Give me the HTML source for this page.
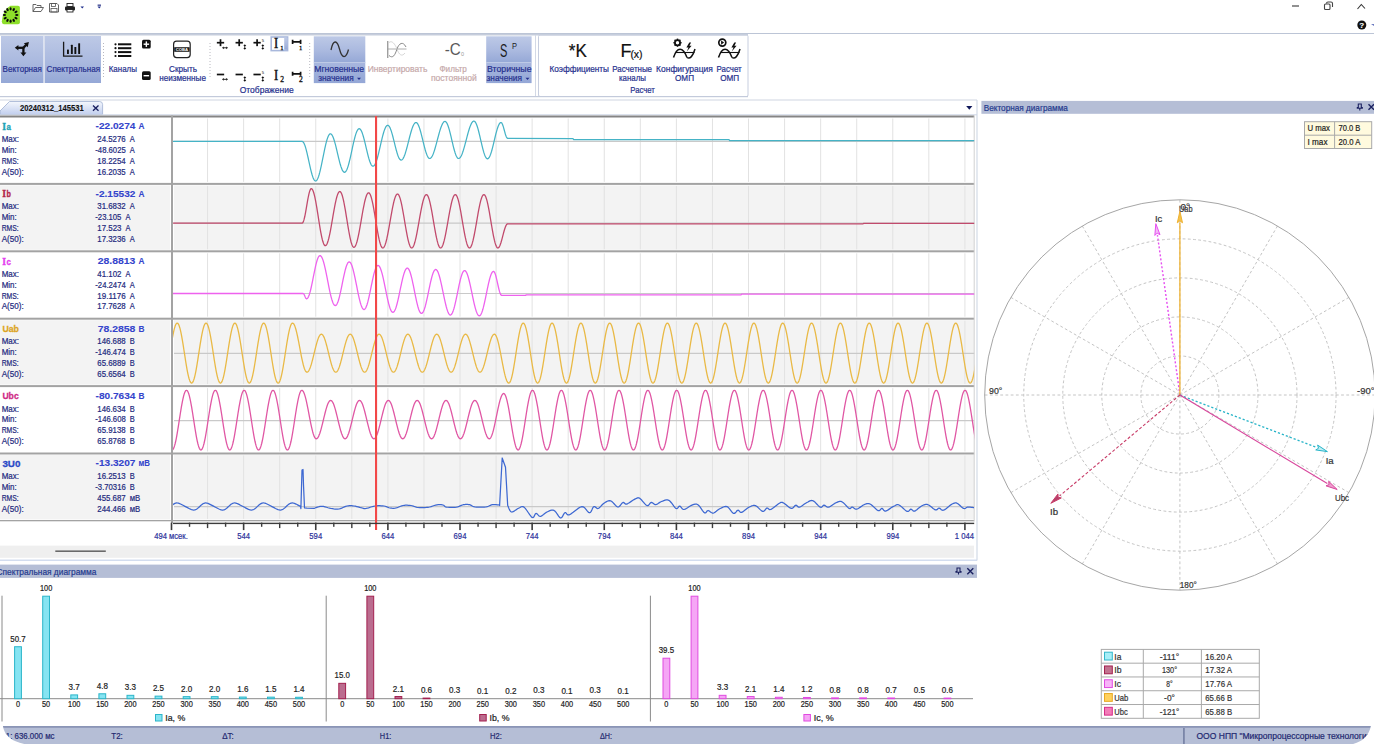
<!DOCTYPE html><html><head><meta charset="utf-8"><style>html,body{margin:0;padding:0;background:#fff;overflow:hidden;width:1374px;height:744px}svg{display:block;font-family:"Liberation Sans",sans-serif}</style></head><body><svg width="1374" height="744" viewBox="0 0 1374 744"><path d="M1.8,21.6 Q2.8,9.5 10.4,5.7 L18,5.7 Q19.9,5.7 19.9,7.6 L19.9,22.2 Q19.9,24.2 18,24.2 L3.8,24.2 Q1.8,24.2 1.8,21.6 Z" fill="#8edf2a"/>
<ellipse cx="16.80" cy="15.00" rx="1.05" ry="1.65" transform="rotate(90.0 16.80 15.00)" fill="#0a0a0a"/>
<ellipse cx="15.97" cy="18.10" rx="1.05" ry="1.65" transform="rotate(120.0 15.97 18.10)" fill="#0a0a0a"/>
<ellipse cx="13.70" cy="20.37" rx="1.05" ry="1.65" transform="rotate(150.0 13.70 20.37)" fill="#0a0a0a"/>
<ellipse cx="10.60" cy="21.20" rx="1.05" ry="1.65" transform="rotate(180.0 10.60 21.20)" fill="#0a0a0a"/>
<ellipse cx="7.50" cy="20.37" rx="1.05" ry="1.65" transform="rotate(210.0 7.50 20.37)" fill="#0a0a0a"/>
<ellipse cx="5.23" cy="18.10" rx="1.05" ry="1.65" transform="rotate(240.0 5.23 18.10)" fill="#0a0a0a"/>
<ellipse cx="4.40" cy="15.00" rx="1.05" ry="1.65" transform="rotate(270.0 4.40 15.00)" fill="#0a0a0a"/>
<ellipse cx="5.23" cy="11.90" rx="1.05" ry="1.65" transform="rotate(300.0 5.23 11.90)" fill="#0a0a0a"/>
<ellipse cx="7.50" cy="9.63" rx="1.05" ry="1.65" transform="rotate(330.0 7.50 9.63)" fill="#0a0a0a"/>
<ellipse cx="10.60" cy="8.80" rx="1.05" ry="1.65" transform="rotate(360.0 10.60 8.80)" fill="#0a0a0a"/>
<ellipse cx="13.70" cy="9.63" rx="1.05" ry="1.65" transform="rotate(390.0 13.70 9.63)" fill="#0a0a0a"/>
<ellipse cx="15.97" cy="11.90" rx="1.05" ry="1.65" transform="rotate(420.0 15.97 11.90)" fill="#0a0a0a"/>
<path d="M33,11.5 L33,4.5 L36,4.5 L37,5.5 L41,5.5 L41,7.5 M33,11.5 L35.5,7.5 L43.5,7.5 L41,11.5 Z" fill="none" stroke="#555" stroke-width="0.9"/>
<path d="M49.5,3.5 L57,3.5 L58.5,5 L58.5,12 L49.5,12 Z" fill="#fff" stroke="#555" stroke-width="0.9"/>
<rect x="51.5" y="3.5" width="4" height="3" fill="none" stroke="#555" stroke-width="0.8"/>
<rect x="51" y="8.5" width="6" height="3.5" fill="none" stroke="#555" stroke-width="0.8"/>
<rect x="67" y="3.5" width="6" height="3" fill="#fff" stroke="#222" stroke-width="0.9"/>
<rect x="65" y="6.5" width="10" height="4" rx="1" fill="#222"/>
<rect x="67" y="9.5" width="6" height="2.5" fill="#fff" stroke="#222" stroke-width="0.9"/>
<path d="M80.5,6.5 L84,6.5 L82.25,8.5 Z" fill="#1a2a8a"/>
<rect x="97.6" y="4.6" width="3.4" height="1.1" fill="#14207a"/>
<path d="M97.5,6.5 L101,6.5 L99.25,8.5 Z" fill="#1a2a8a"/>
<line x1="1292" y1="6" x2="1299" y2="6" stroke="#555" stroke-width="1.3" />
<rect x="1324.5" y="4" width="5.5" height="5.5" rx="1" fill="none" stroke="#444" stroke-width="1.1"/>
<path d="M1326.5,3.5 Q1326.5,2 1328,2 L1331,2 Q1332.5,2 1332.5,3.5 L1332.5,7" fill="none" stroke="#444" stroke-width="1.1"/>
<path d="M1357.5,9 L1361.3,4.5 L1365,8.5" fill="none" stroke="#333" stroke-width="1.1"/>
<circle cx="1361.8" cy="25" r="4.5" fill="#111"/>
<text x="1361.80" y="27.80" font-size="8.00" fill="#fff" stroke="#fff" stroke-width="0.1" font-weight="bold" text-anchor="middle">?</text>
<path d="M1371,24 L1374,24 L1374,26 Z" fill="#6a7ac0"/>
<defs><linearGradient id="hl" x1="0" y1="0" x2="0" y2="1"><stop offset="0" stop-color="#bdc9e6"/><stop offset="0.55" stop-color="#aab9df"/><stop offset="1" stop-color="#95a8d6"/></linearGradient><linearGradient id="hl2" x1="0" y1="0" x2="0" y2="1"><stop offset="0" stop-color="#a7b6de"/><stop offset="1" stop-color="#94a7d6"/></linearGradient><linearGradient id="tabg" x1="0" y1="0" x2="0" y2="1"><stop offset="0" stop-color="#f4f7fd"/><stop offset="1" stop-color="#c2cfee"/></linearGradient></defs>
<rect x="0" y="33" width="1374" height="1" fill="#bcc5d6" />
<rect x="0" y="34" width="748" height="1.5" fill="#c6cddc" />
<rect x="535" y="35" width="1" height="61.5" fill="#d3d9e6" />
<rect x="538.5" y="35" width="209.5" height="61.5" rx="1.5" fill="none" stroke="#c7cedf" stroke-width="1"/>
<rect x="0" y="96" width="748" height="1.2" fill="#c3cadb" />
<rect x="0" y="99.5" width="977" height="1" fill="#cfd5e2" />
<rect x="1" y="36" width="42.5" height="47" fill="url(#hl)" />
<rect x="45" y="36" width="56" height="47" fill="url(#hl)" />
<rect x="44" y="36" width="1" height="47" fill="#d8deed" />
<rect x="313.8" y="36.3" width="51.5" height="26.4" fill="url(#hl)" />
<rect x="313.8" y="62.7" width="51.5" height="20.4" fill="url(#hl2)" />
<rect x="313.8" y="62.2" width="51.5" height="0.8" fill="#c2cde8" />
<rect x="486.2" y="36.3" width="45.4" height="26.4" fill="url(#hl)" />
<rect x="486.2" y="62.7" width="45.4" height="20.4" fill="url(#hl2)" />
<rect x="486.2" y="62.2" width="45.4" height="0.8" fill="#c2cde8" />
<rect x="271.2" y="37.0" width="16.4" height="13.6" fill="#fff" stroke="#a9b8dc" stroke-width="1.6"/>
<rect x="284.2" y="37.8" width="3.4" height="12.0" fill="url(#hl)" />
<line x1="103.5" y1="43" x2="103.5" y2="77" stroke="#b8b8c0" stroke-width="1" stroke-dasharray="1,2"/>
<line x1="210" y1="43" x2="210" y2="77" stroke="#b8b8c0" stroke-width="1" stroke-dasharray="1,2"/>
<line x1="309.7" y1="43" x2="309.7" y2="77" stroke="#b8b8c0" stroke-width="1" stroke-dasharray="1,2"/>
<g stroke="#111" stroke-width="2.3" fill="none"><path d="M23.4,47.8 L17.2,47.8"/><path d="M23.4,47.8 L23.4,53"/><path d="M22.8,48.4 L26.3,44.7"/></g>
<path d="M14.8,47.8 L18.4,45.0 L18.4,50.6 Z" fill="#111"/>
<path d="M23.4,56.2 L20.4,52.4 L26.4,52.4 Z" fill="#111"/>
<path d="M28.9,42.1 L23.9,43.3 L27.7,47.3 Z" fill="#111"/>
<path d="M63.6,41.8 L63.6,56.2 L82.5,56.2" fill="none" stroke="#1a1a1a" stroke-width="1.3"/>
<rect x="67" y="49.5" width="1.9" height="4.4" rx="0.5" fill="#111"/>
<rect x="70.9" y="44.8" width="1.9" height="9.1" rx="0.5" fill="#111"/>
<rect x="74.4" y="46.9" width="1.9" height="7.0" rx="0.5" fill="#111"/>
<rect x="78.2" y="43.3" width="1.9" height="10.6" rx="0.5" fill="#111"/>
<circle cx="115.5" cy="44.30" r="1.1" fill="#111"/>
<rect x="118" y="43.3" width="13.3" height="2.0" fill="#111" />
<circle cx="115.5" cy="48.20" r="1.1" fill="#111"/>
<rect x="118" y="47.199999999999996" width="13.3" height="2.0" fill="#111" />
<circle cx="115.5" cy="52.10" r="1.1" fill="#111"/>
<rect x="118" y="51.099999999999994" width="13.3" height="2.0" fill="#111" />
<circle cx="115.5" cy="56.00" r="1.1" fill="#111"/>
<rect x="118" y="55.0" width="13.3" height="2.0" fill="#111" />
<rect x="142" y="39.8" width="8.7" height="8.7" rx="1.5" fill="#111"/>
<rect x="143.6" y="43.5" width="5.5" height="1.4" fill="#fff" />
<rect x="145.65" y="41.4" width="1.4" height="5.5" fill="#fff" />
<rect x="142" y="71.3" width="8.7" height="8.7" rx="1.5" fill="#111"/>
<rect x="143.6" y="75.0" width="5.5" height="1.4" fill="#fff" />
<rect x="173.6" y="41.2" width="16.6" height="16.4" rx="3" fill="#fff" stroke="#222" stroke-width="1.2"/>
<rect x="174.2" y="47.2" width="15.4" height="4.6" fill="#1a1a1a" />
<text x="181.90" y="51.20" font-size="4.20" fill="#fff" font-weight="bold" text-anchor="middle" textLength="12.50" lengthAdjust="spacingAndGlyphs">COBA</text>
<rect x="216.85" y="41.85" width="7.3" height="1.7" fill="#111" />
<rect x="219.65" y="39.25" width="1.7" height="6.9" fill="#111" />
<path d="M222,47.8 L223.8,46.4 L223.8,49.199999999999996 Z M228,47.8 L226.2,46.4 L226.2,49.199999999999996 Z" fill="#111"/>
<rect x="223.5" y="47.349999999999994" width="3" height="0.9" fill="#111" />
<rect x="235.54999999999998" y="41.85" width="7.3" height="1.7" fill="#111" />
<rect x="238.35" y="39.25" width="1.7" height="6.9" fill="#111" />
<path d="M244.8,44.2 L243.3,46.1 L246.3,46.1 Z M244.8,49.8 L243.3,47.9 L246.3,47.9 Z" fill="#111"/>
<rect x="244.35000000000002" y="45.8" width="0.9" height="2.4" fill="#111" />
<rect x="253.45000000000002" y="41.85" width="7.3" height="1.7" fill="#111" />
<rect x="256.25" y="39.25" width="1.7" height="6.9" fill="#111" />
<path d="M262.8,44.2 L261.3,46.1 L264.3,46.1 Z M262.8,49.8 L261.3,47.9 L264.3,47.9 Z" fill="#111"/>
<rect x="262.35" y="45.8" width="0.9" height="2.4" fill="#111" />
<text x="262.90" y="42.20" font-size="4.20" fill="#111" text-anchor="middle">5</text>
<rect x="216.85" y="73.65" width="7.3" height="1.7" fill="#111" />
<path d="M222,79.3 L223.8,77.89999999999999 L223.8,80.7 Z M228,79.3 L226.2,77.89999999999999 L226.2,80.7 Z" fill="#111"/>
<rect x="223.5" y="78.85" width="3" height="0.9" fill="#111" />
<rect x="235.54999999999998" y="73.65" width="7.3" height="1.7" fill="#111" />
<path d="M244.8,76.2 L243.3,78.1 L246.3,78.1 Z M244.8,81.8 L243.3,79.9 L246.3,79.9 Z" fill="#111"/>
<rect x="244.35000000000002" y="77.8" width="0.9" height="2.4" fill="#111" />
<rect x="253.45000000000002" y="73.65" width="7.3" height="1.7" fill="#111" />
<path d="M262.8,76.2 L261.3,78.1 L264.3,78.1 Z M262.8,81.8 L261.3,79.9 L264.3,79.9 Z" fill="#111"/>
<rect x="262.35" y="77.8" width="0.9" height="2.4" fill="#111" />
<text x="262.90" y="73.80" font-size="4.20" fill="#111" text-anchor="middle">5</text>
<text x="276.00" y="48.40" font-size="14.00" fill="#111" stroke="#111" stroke-width="0.45" text-anchor="middle" textLength="4.20" lengthAdjust="spacingAndGlyphs" font-family="Liberation Serif">I</text>
<text x="282.00" y="49.90" font-size="6.60" fill="#111" stroke="#111" stroke-width="0.3" text-anchor="middle" font-family="Liberation Serif">1</text>
<text x="276.00" y="80.00" font-size="14.00" fill="#111" stroke="#111" stroke-width="0.45" text-anchor="middle" textLength="4.20" lengthAdjust="spacingAndGlyphs" font-family="Liberation Serif">I</text>
<text x="282.10" y="81.70" font-size="7.60" fill="#111" stroke="#111" stroke-width="0.3" text-anchor="middle" font-family="Liberation Serif">2</text>
<path d="M292.6,39.8 L292.6,43.9 M292.6,41.8 L300.6,41.8 M300.6,39.8 L300.6,43.9" stroke="#111" stroke-width="1.7" fill="none"/>
<text x="300.60" y="49.70" font-size="6.60" fill="#111" stroke="#111" stroke-width="0.3" text-anchor="middle" font-family="Liberation Serif">1</text>
<path d="M292.6,71.8 L292.6,75.8 M292.6,73.8 L300.6,73.8 M300.6,71.8 L300.6,75.8" stroke="#111" stroke-width="1.7" fill="none"/>
<text x="300.80" y="81.70" font-size="7.60" fill="#111" stroke="#111" stroke-width="0.3" text-anchor="middle" font-family="Liberation Serif">2</text>
<path d="M331,50 C333,40 337,39 339.5,49 C342,59 346,59 348.5,49.5" fill="none" stroke="#333" stroke-width="1.3"/>
<path d="M387.8,41 L387.8,58" stroke="#777" stroke-width="1"/>
<path d="M387.8,49 L406.5,49" stroke="#999" stroke-width="0.8"/>
<path d="M389,55.5 C393,59 395,55 397,49 C399,43 403,41 406,47" fill="none" stroke="#888" stroke-width="1"/>
<path d="M389,42.5 C392,40 395,44 397,49 C399,55 402,57 405,53" fill="none" stroke="#ccc" stroke-width="0.8"/>
<text x="452.80" y="55.20" font-size="16.00" fill="#5a5a5a" text-anchor="middle" textLength="16.00" lengthAdjust="spacingAndGlyphs">-C</text>
<text x="462.50" y="56.20" font-size="5.50" fill="#999" text-anchor="middle">0</text>
<text x="503.60" y="57.20" font-size="17.50" fill="#1a1a1a" text-anchor="middle" textLength="7.40" lengthAdjust="spacingAndGlyphs">S</text>
<text x="514.60" y="49.30" font-size="8.30" fill="#1a1a1a" text-anchor="middle" textLength="5.00" lengthAdjust="spacingAndGlyphs">P</text>
<text x="577.80" y="57.20" font-size="18.50" fill="#111" stroke="#111" stroke-width="0.2" text-anchor="middle" textLength="18.00" lengthAdjust="spacingAndGlyphs">*K</text>
<text x="626.00" y="57.00" font-size="18.00" fill="#111" stroke="#111" stroke-width="0.2" text-anchor="middle">F</text>
<text x="636.50" y="57.50" font-size="10.50" fill="#111" stroke="#111" stroke-width="0.2" text-anchor="middle">(x)</text>
<circle cx="677.5" cy="42.7" r="2.6" fill="none" stroke="#111" stroke-width="1.8"/>
<line x1="679.90" y1="42.70" x2="681.60" y2="42.70" stroke="#111" stroke-width="1.5"/>
<line x1="679.20" y1="44.40" x2="680.40" y2="45.60" stroke="#111" stroke-width="1.5"/>
<line x1="677.50" y1="45.10" x2="677.50" y2="46.80" stroke="#111" stroke-width="1.5"/>
<line x1="675.80" y1="44.40" x2="674.60" y2="45.60" stroke="#111" stroke-width="1.5"/>
<line x1="675.10" y1="42.70" x2="673.40" y2="42.70" stroke="#111" stroke-width="1.5"/>
<line x1="675.80" y1="41.00" x2="674.60" y2="39.80" stroke="#111" stroke-width="1.5"/>
<line x1="677.50" y1="40.30" x2="677.50" y2="38.60" stroke="#111" stroke-width="1.5"/>
<line x1="679.20" y1="41.00" x2="680.40" y2="39.80" stroke="#111" stroke-width="1.5"/>
<path d="M673.5,57.5 C677.0,46.5 683.0,46.5 687.0,57.5" fill="none" stroke="#111" stroke-width="1.5"/>
<path d="M687.0,57.5 C690.0,59.5 693.0,56 695.0,49" fill="none" stroke="#111" stroke-width="1.5"/>
<line x1="675.0" y1="52.5" x2="694.5" y2="52.5" stroke="#111" stroke-width="1.1" />
<path d="M689.3,42.6 L686.4,47.6 L688.5,47.6 L686.8,51.5 L691.6,45.8 L689.4,45.8 L691.1,42.6 Z" fill="#111"/>
<circle cx="722.3" cy="42.6" r="3.5" fill="none" stroke="#111" stroke-width="1.7"/>
<path d="M721.1,40.4 L724.1,42.6 L721.1,44.8 Z" fill="#111"/>
<path d="M718.5,57.5 C722.0,46.5 728.0,46.5 732.0,57.5" fill="none" stroke="#111" stroke-width="1.5"/>
<path d="M732.0,57.5 C735.0,59.5 738.0,56 740.0,49" fill="none" stroke="#111" stroke-width="1.5"/>
<line x1="720.0" y1="52.5" x2="739.5" y2="52.5" stroke="#111" stroke-width="1.1" />
<path d="M734.3,42.6 L731.4,47.6 L733.5,47.6 L731.8,51.5 L736.6,45.8 L734.4,45.8 L736.1,42.6 Z" fill="#111"/>
<text x="2.60" y="71.80" font-size="8.55" fill="#26308e" stroke="#26308e" stroke-width="0.2" textLength="39.30" lengthAdjust="spacingAndGlyphs">Векторная</text>
<text x="46.60" y="71.80" font-size="8.55" fill="#26308e" stroke="#26308e" stroke-width="0.2" textLength="53.50" lengthAdjust="spacingAndGlyphs">Спектральная</text>
<text x="108.70" y="71.80" font-size="8.55" fill="#26308e" stroke="#26308e" stroke-width="0.2" textLength="28.30" lengthAdjust="spacingAndGlyphs">Каналы</text>
<text x="169.00" y="72.10" font-size="8.55" fill="#26308e" stroke="#26308e" stroke-width="0.2" textLength="28.00" lengthAdjust="spacingAndGlyphs">Скрыть</text>
<text x="159.20" y="81.30" font-size="8.55" fill="#26308e" stroke="#26308e" stroke-width="0.2" textLength="46.80" lengthAdjust="spacingAndGlyphs">неизменные</text>
<text x="239.70" y="93.20" font-size="8.55" fill="#26308e" stroke="#26308e" stroke-width="0.2" textLength="54.00" lengthAdjust="spacingAndGlyphs">Отображение</text>
<text x="314.20" y="71.80" font-size="8.55" fill="#26308e" stroke="#26308e" stroke-width="0.2" textLength="50.00" lengthAdjust="spacingAndGlyphs">Мгновенные</text>
<text x="318.20" y="81.30" font-size="8.55" fill="#26308e" stroke="#26308e" stroke-width="0.2" textLength="35.50" lengthAdjust="spacingAndGlyphs">значения</text>
<path d="M357,77.8 L361,77.8 L359,80 Z" fill="#26308e"/>
<text x="367.70" y="71.80" font-size="8.55" fill="#c6a9aa" stroke="#c6a9aa" stroke-width="0.2" textLength="59.60" lengthAdjust="spacingAndGlyphs">Инвертировать</text>
<text x="439.40" y="71.80" font-size="8.55" fill="#c6a9aa" stroke="#c6a9aa" stroke-width="0.2" textLength="27.40" lengthAdjust="spacingAndGlyphs">Фильтр</text>
<text x="430.90" y="81.30" font-size="8.55" fill="#c6a9aa" stroke="#c6a9aa" stroke-width="0.2" textLength="45.90" lengthAdjust="spacingAndGlyphs">постоянной</text>
<text x="487.00" y="71.80" font-size="8.55" fill="#26308e" stroke="#26308e" stroke-width="0.2" textLength="44.50" lengthAdjust="spacingAndGlyphs">Вторичные</text>
<text x="486.50" y="81.30" font-size="8.55" fill="#26308e" stroke="#26308e" stroke-width="0.2" textLength="35.50" lengthAdjust="spacingAndGlyphs">значения</text>
<path d="M525.5,77.8 L529.5,77.8 L527.5,80 Z" fill="#26308e"/>
<text x="549.40" y="71.80" font-size="8.55" fill="#26308e" stroke="#26308e" stroke-width="0.2" textLength="59.60" lengthAdjust="spacingAndGlyphs">Коэффициенты</text>
<text x="612.30" y="71.80" font-size="8.55" fill="#26308e" stroke="#26308e" stroke-width="0.2" textLength="39.70" lengthAdjust="spacingAndGlyphs">Расчетные</text>
<text x="619.00" y="81.30" font-size="8.55" fill="#26308e" stroke="#26308e" stroke-width="0.2" textLength="27.00" lengthAdjust="spacingAndGlyphs">каналы</text>
<text x="630.30" y="93.20" font-size="8.55" fill="#26308e" stroke="#26308e" stroke-width="0.2" textLength="24.60" lengthAdjust="spacingAndGlyphs">Расчет</text>
<text x="656.10" y="71.80" font-size="8.55" fill="#26308e" stroke="#26308e" stroke-width="0.2" textLength="56.70" lengthAdjust="spacingAndGlyphs">Конфигурация</text>
<text x="675.00" y="81.30" font-size="8.55" fill="#26308e" stroke="#26308e" stroke-width="0.2" textLength="19.00" lengthAdjust="spacingAndGlyphs">ОМП</text>
<text x="716.60" y="71.80" font-size="8.55" fill="#26308e" stroke="#26308e" stroke-width="0.2" textLength="25.10" lengthAdjust="spacingAndGlyphs">Расчет</text>
<text x="720.20" y="81.30" font-size="8.55" fill="#26308e" stroke="#26308e" stroke-width="0.2" textLength="19.00" lengthAdjust="spacingAndGlyphs">ОМП</text>
<path d="M0,114.5 L0,111 L9.5,101.5 L99.5,101.5 Q102.6,101.5 102.6,104.5 L102.6,114.5 Z" fill="url(#tabg)" stroke="#9fb0d0" stroke-width="0.8"/>
<text x="19.90" y="110.80" font-size="9.00" fill="#111" stroke="#111" stroke-width="0.1" font-weight="bold" textLength="63.80" lengthAdjust="spacingAndGlyphs">20240312_145531</text>
<path d="M93,105.5 L98.5,110.8 M98.5,105.5 L93,110.8" stroke="#1a2060" stroke-width="1.3"/>
<path d="M966.2,106 L972.4,106 L969.3,109.8 Z" fill="#10185a"/>
<rect x="976.5" y="100" width="1" height="460.5" fill="#cad3e2" />
<rect x="0" y="114.3" width="977" height="1" fill="#cdd6e6" />
<rect x="0" y="185.4" width="170" height="64.4" fill="#f3f3f3" />
<rect x="174" y="185.4" width="800.2" height="64.4" fill="#f3f3f3" />
<rect x="0" y="320.20000000000005" width="170" height="64.39999999999998" fill="#f3f3f3" />
<rect x="174" y="320.20000000000005" width="800.2" height="64.39999999999998" fill="#f3f3f3" />
<rect x="0" y="455.0" width="170" height="64.40000000000009" fill="#f3f3f3" />
<rect x="174" y="455.0" width="800.2" height="64.40000000000009" fill="#f3f3f3" />
<line x1="207.56" y1="118.5" x2="207.56" y2="181.9" stroke="#e2e2e2" stroke-width="1" />
<line x1="243.63" y1="118.5" x2="243.63" y2="181.9" stroke="#e2e2e2" stroke-width="1" />
<line x1="279.69" y1="118.5" x2="279.69" y2="181.9" stroke="#e2e2e2" stroke-width="1" />
<line x1="315.76" y1="118.5" x2="315.76" y2="181.9" stroke="#e2e2e2" stroke-width="1" />
<line x1="351.82" y1="118.5" x2="351.82" y2="181.9" stroke="#e2e2e2" stroke-width="1" />
<line x1="387.88" y1="118.5" x2="387.88" y2="181.9" stroke="#e2e2e2" stroke-width="1" />
<line x1="423.95" y1="118.5" x2="423.95" y2="181.9" stroke="#e2e2e2" stroke-width="1" />
<line x1="460.01" y1="118.5" x2="460.01" y2="181.9" stroke="#e2e2e2" stroke-width="1" />
<line x1="496.08" y1="118.5" x2="496.08" y2="181.9" stroke="#e2e2e2" stroke-width="1" />
<line x1="532.14" y1="118.5" x2="532.14" y2="181.9" stroke="#e2e2e2" stroke-width="1" />
<line x1="568.20" y1="118.5" x2="568.20" y2="181.9" stroke="#e2e2e2" stroke-width="1" />
<line x1="604.27" y1="118.5" x2="604.27" y2="181.9" stroke="#e2e2e2" stroke-width="1" />
<line x1="640.33" y1="118.5" x2="640.33" y2="181.9" stroke="#e2e2e2" stroke-width="1" />
<line x1="676.40" y1="118.5" x2="676.40" y2="181.9" stroke="#e2e2e2" stroke-width="1" />
<line x1="712.46" y1="118.5" x2="712.46" y2="181.9" stroke="#e2e2e2" stroke-width="1" />
<line x1="748.52" y1="118.5" x2="748.52" y2="181.9" stroke="#e2e2e2" stroke-width="1" />
<line x1="784.59" y1="118.5" x2="784.59" y2="181.9" stroke="#e2e2e2" stroke-width="1" />
<line x1="820.65" y1="118.5" x2="820.65" y2="181.9" stroke="#e2e2e2" stroke-width="1" />
<line x1="856.72" y1="118.5" x2="856.72" y2="181.9" stroke="#e2e2e2" stroke-width="1" />
<line x1="892.78" y1="118.5" x2="892.78" y2="181.9" stroke="#e2e2e2" stroke-width="1" />
<line x1="928.84" y1="118.5" x2="928.84" y2="181.9" stroke="#e2e2e2" stroke-width="1" />
<line x1="964.91" y1="118.5" x2="964.91" y2="181.9" stroke="#e2e2e2" stroke-width="1" />
<line x1="207.56" y1="185.9" x2="207.56" y2="249.3" stroke="#e2e2e2" stroke-width="1" />
<line x1="243.63" y1="185.9" x2="243.63" y2="249.3" stroke="#e2e2e2" stroke-width="1" />
<line x1="279.69" y1="185.9" x2="279.69" y2="249.3" stroke="#e2e2e2" stroke-width="1" />
<line x1="315.76" y1="185.9" x2="315.76" y2="249.3" stroke="#e2e2e2" stroke-width="1" />
<line x1="351.82" y1="185.9" x2="351.82" y2="249.3" stroke="#e2e2e2" stroke-width="1" />
<line x1="387.88" y1="185.9" x2="387.88" y2="249.3" stroke="#e2e2e2" stroke-width="1" />
<line x1="423.95" y1="185.9" x2="423.95" y2="249.3" stroke="#e2e2e2" stroke-width="1" />
<line x1="460.01" y1="185.9" x2="460.01" y2="249.3" stroke="#e2e2e2" stroke-width="1" />
<line x1="496.08" y1="185.9" x2="496.08" y2="249.3" stroke="#e2e2e2" stroke-width="1" />
<line x1="532.14" y1="185.9" x2="532.14" y2="249.3" stroke="#e2e2e2" stroke-width="1" />
<line x1="568.20" y1="185.9" x2="568.20" y2="249.3" stroke="#e2e2e2" stroke-width="1" />
<line x1="604.27" y1="185.9" x2="604.27" y2="249.3" stroke="#e2e2e2" stroke-width="1" />
<line x1="640.33" y1="185.9" x2="640.33" y2="249.3" stroke="#e2e2e2" stroke-width="1" />
<line x1="676.40" y1="185.9" x2="676.40" y2="249.3" stroke="#e2e2e2" stroke-width="1" />
<line x1="712.46" y1="185.9" x2="712.46" y2="249.3" stroke="#e2e2e2" stroke-width="1" />
<line x1="748.52" y1="185.9" x2="748.52" y2="249.3" stroke="#e2e2e2" stroke-width="1" />
<line x1="784.59" y1="185.9" x2="784.59" y2="249.3" stroke="#e2e2e2" stroke-width="1" />
<line x1="820.65" y1="185.9" x2="820.65" y2="249.3" stroke="#e2e2e2" stroke-width="1" />
<line x1="856.72" y1="185.9" x2="856.72" y2="249.3" stroke="#e2e2e2" stroke-width="1" />
<line x1="892.78" y1="185.9" x2="892.78" y2="249.3" stroke="#e2e2e2" stroke-width="1" />
<line x1="928.84" y1="185.9" x2="928.84" y2="249.3" stroke="#e2e2e2" stroke-width="1" />
<line x1="964.91" y1="185.9" x2="964.91" y2="249.3" stroke="#e2e2e2" stroke-width="1" />
<line x1="207.56" y1="253.3" x2="207.56" y2="316.70000000000005" stroke="#e2e2e2" stroke-width="1" />
<line x1="243.63" y1="253.3" x2="243.63" y2="316.70000000000005" stroke="#e2e2e2" stroke-width="1" />
<line x1="279.69" y1="253.3" x2="279.69" y2="316.70000000000005" stroke="#e2e2e2" stroke-width="1" />
<line x1="315.76" y1="253.3" x2="315.76" y2="316.70000000000005" stroke="#e2e2e2" stroke-width="1" />
<line x1="351.82" y1="253.3" x2="351.82" y2="316.70000000000005" stroke="#e2e2e2" stroke-width="1" />
<line x1="387.88" y1="253.3" x2="387.88" y2="316.70000000000005" stroke="#e2e2e2" stroke-width="1" />
<line x1="423.95" y1="253.3" x2="423.95" y2="316.70000000000005" stroke="#e2e2e2" stroke-width="1" />
<line x1="460.01" y1="253.3" x2="460.01" y2="316.70000000000005" stroke="#e2e2e2" stroke-width="1" />
<line x1="496.08" y1="253.3" x2="496.08" y2="316.70000000000005" stroke="#e2e2e2" stroke-width="1" />
<line x1="532.14" y1="253.3" x2="532.14" y2="316.70000000000005" stroke="#e2e2e2" stroke-width="1" />
<line x1="568.20" y1="253.3" x2="568.20" y2="316.70000000000005" stroke="#e2e2e2" stroke-width="1" />
<line x1="604.27" y1="253.3" x2="604.27" y2="316.70000000000005" stroke="#e2e2e2" stroke-width="1" />
<line x1="640.33" y1="253.3" x2="640.33" y2="316.70000000000005" stroke="#e2e2e2" stroke-width="1" />
<line x1="676.40" y1="253.3" x2="676.40" y2="316.70000000000005" stroke="#e2e2e2" stroke-width="1" />
<line x1="712.46" y1="253.3" x2="712.46" y2="316.70000000000005" stroke="#e2e2e2" stroke-width="1" />
<line x1="748.52" y1="253.3" x2="748.52" y2="316.70000000000005" stroke="#e2e2e2" stroke-width="1" />
<line x1="784.59" y1="253.3" x2="784.59" y2="316.70000000000005" stroke="#e2e2e2" stroke-width="1" />
<line x1="820.65" y1="253.3" x2="820.65" y2="316.70000000000005" stroke="#e2e2e2" stroke-width="1" />
<line x1="856.72" y1="253.3" x2="856.72" y2="316.70000000000005" stroke="#e2e2e2" stroke-width="1" />
<line x1="892.78" y1="253.3" x2="892.78" y2="316.70000000000005" stroke="#e2e2e2" stroke-width="1" />
<line x1="928.84" y1="253.3" x2="928.84" y2="316.70000000000005" stroke="#e2e2e2" stroke-width="1" />
<line x1="964.91" y1="253.3" x2="964.91" y2="316.70000000000005" stroke="#e2e2e2" stroke-width="1" />
<line x1="207.56" y1="320.70000000000005" x2="207.56" y2="384.1" stroke="#e2e2e2" stroke-width="1" />
<line x1="243.63" y1="320.70000000000005" x2="243.63" y2="384.1" stroke="#e2e2e2" stroke-width="1" />
<line x1="279.69" y1="320.70000000000005" x2="279.69" y2="384.1" stroke="#e2e2e2" stroke-width="1" />
<line x1="315.76" y1="320.70000000000005" x2="315.76" y2="384.1" stroke="#e2e2e2" stroke-width="1" />
<line x1="351.82" y1="320.70000000000005" x2="351.82" y2="384.1" stroke="#e2e2e2" stroke-width="1" />
<line x1="387.88" y1="320.70000000000005" x2="387.88" y2="384.1" stroke="#e2e2e2" stroke-width="1" />
<line x1="423.95" y1="320.70000000000005" x2="423.95" y2="384.1" stroke="#e2e2e2" stroke-width="1" />
<line x1="460.01" y1="320.70000000000005" x2="460.01" y2="384.1" stroke="#e2e2e2" stroke-width="1" />
<line x1="496.08" y1="320.70000000000005" x2="496.08" y2="384.1" stroke="#e2e2e2" stroke-width="1" />
<line x1="532.14" y1="320.70000000000005" x2="532.14" y2="384.1" stroke="#e2e2e2" stroke-width="1" />
<line x1="568.20" y1="320.70000000000005" x2="568.20" y2="384.1" stroke="#e2e2e2" stroke-width="1" />
<line x1="604.27" y1="320.70000000000005" x2="604.27" y2="384.1" stroke="#e2e2e2" stroke-width="1" />
<line x1="640.33" y1="320.70000000000005" x2="640.33" y2="384.1" stroke="#e2e2e2" stroke-width="1" />
<line x1="676.40" y1="320.70000000000005" x2="676.40" y2="384.1" stroke="#e2e2e2" stroke-width="1" />
<line x1="712.46" y1="320.70000000000005" x2="712.46" y2="384.1" stroke="#e2e2e2" stroke-width="1" />
<line x1="748.52" y1="320.70000000000005" x2="748.52" y2="384.1" stroke="#e2e2e2" stroke-width="1" />
<line x1="784.59" y1="320.70000000000005" x2="784.59" y2="384.1" stroke="#e2e2e2" stroke-width="1" />
<line x1="820.65" y1="320.70000000000005" x2="820.65" y2="384.1" stroke="#e2e2e2" stroke-width="1" />
<line x1="856.72" y1="320.70000000000005" x2="856.72" y2="384.1" stroke="#e2e2e2" stroke-width="1" />
<line x1="892.78" y1="320.70000000000005" x2="892.78" y2="384.1" stroke="#e2e2e2" stroke-width="1" />
<line x1="928.84" y1="320.70000000000005" x2="928.84" y2="384.1" stroke="#e2e2e2" stroke-width="1" />
<line x1="964.91" y1="320.70000000000005" x2="964.91" y2="384.1" stroke="#e2e2e2" stroke-width="1" />
<line x1="207.56" y1="388.1" x2="207.56" y2="451.5" stroke="#e2e2e2" stroke-width="1" />
<line x1="243.63" y1="388.1" x2="243.63" y2="451.5" stroke="#e2e2e2" stroke-width="1" />
<line x1="279.69" y1="388.1" x2="279.69" y2="451.5" stroke="#e2e2e2" stroke-width="1" />
<line x1="315.76" y1="388.1" x2="315.76" y2="451.5" stroke="#e2e2e2" stroke-width="1" />
<line x1="351.82" y1="388.1" x2="351.82" y2="451.5" stroke="#e2e2e2" stroke-width="1" />
<line x1="387.88" y1="388.1" x2="387.88" y2="451.5" stroke="#e2e2e2" stroke-width="1" />
<line x1="423.95" y1="388.1" x2="423.95" y2="451.5" stroke="#e2e2e2" stroke-width="1" />
<line x1="460.01" y1="388.1" x2="460.01" y2="451.5" stroke="#e2e2e2" stroke-width="1" />
<line x1="496.08" y1="388.1" x2="496.08" y2="451.5" stroke="#e2e2e2" stroke-width="1" />
<line x1="532.14" y1="388.1" x2="532.14" y2="451.5" stroke="#e2e2e2" stroke-width="1" />
<line x1="568.20" y1="388.1" x2="568.20" y2="451.5" stroke="#e2e2e2" stroke-width="1" />
<line x1="604.27" y1="388.1" x2="604.27" y2="451.5" stroke="#e2e2e2" stroke-width="1" />
<line x1="640.33" y1="388.1" x2="640.33" y2="451.5" stroke="#e2e2e2" stroke-width="1" />
<line x1="676.40" y1="388.1" x2="676.40" y2="451.5" stroke="#e2e2e2" stroke-width="1" />
<line x1="712.46" y1="388.1" x2="712.46" y2="451.5" stroke="#e2e2e2" stroke-width="1" />
<line x1="748.52" y1="388.1" x2="748.52" y2="451.5" stroke="#e2e2e2" stroke-width="1" />
<line x1="784.59" y1="388.1" x2="784.59" y2="451.5" stroke="#e2e2e2" stroke-width="1" />
<line x1="820.65" y1="388.1" x2="820.65" y2="451.5" stroke="#e2e2e2" stroke-width="1" />
<line x1="856.72" y1="388.1" x2="856.72" y2="451.5" stroke="#e2e2e2" stroke-width="1" />
<line x1="892.78" y1="388.1" x2="892.78" y2="451.5" stroke="#e2e2e2" stroke-width="1" />
<line x1="928.84" y1="388.1" x2="928.84" y2="451.5" stroke="#e2e2e2" stroke-width="1" />
<line x1="964.91" y1="388.1" x2="964.91" y2="451.5" stroke="#e2e2e2" stroke-width="1" />
<line x1="207.56" y1="455.5" x2="207.56" y2="518.9000000000001" stroke="#e2e2e2" stroke-width="1" />
<line x1="243.63" y1="455.5" x2="243.63" y2="518.9000000000001" stroke="#e2e2e2" stroke-width="1" />
<line x1="279.69" y1="455.5" x2="279.69" y2="518.9000000000001" stroke="#e2e2e2" stroke-width="1" />
<line x1="315.76" y1="455.5" x2="315.76" y2="518.9000000000001" stroke="#e2e2e2" stroke-width="1" />
<line x1="351.82" y1="455.5" x2="351.82" y2="518.9000000000001" stroke="#e2e2e2" stroke-width="1" />
<line x1="387.88" y1="455.5" x2="387.88" y2="518.9000000000001" stroke="#e2e2e2" stroke-width="1" />
<line x1="423.95" y1="455.5" x2="423.95" y2="518.9000000000001" stroke="#e2e2e2" stroke-width="1" />
<line x1="460.01" y1="455.5" x2="460.01" y2="518.9000000000001" stroke="#e2e2e2" stroke-width="1" />
<line x1="496.08" y1="455.5" x2="496.08" y2="518.9000000000001" stroke="#e2e2e2" stroke-width="1" />
<line x1="532.14" y1="455.5" x2="532.14" y2="518.9000000000001" stroke="#e2e2e2" stroke-width="1" />
<line x1="568.20" y1="455.5" x2="568.20" y2="518.9000000000001" stroke="#e2e2e2" stroke-width="1" />
<line x1="604.27" y1="455.5" x2="604.27" y2="518.9000000000001" stroke="#e2e2e2" stroke-width="1" />
<line x1="640.33" y1="455.5" x2="640.33" y2="518.9000000000001" stroke="#e2e2e2" stroke-width="1" />
<line x1="676.40" y1="455.5" x2="676.40" y2="518.9000000000001" stroke="#e2e2e2" stroke-width="1" />
<line x1="712.46" y1="455.5" x2="712.46" y2="518.9000000000001" stroke="#e2e2e2" stroke-width="1" />
<line x1="748.52" y1="455.5" x2="748.52" y2="518.9000000000001" stroke="#e2e2e2" stroke-width="1" />
<line x1="784.59" y1="455.5" x2="784.59" y2="518.9000000000001" stroke="#e2e2e2" stroke-width="1" />
<line x1="820.65" y1="455.5" x2="820.65" y2="518.9000000000001" stroke="#e2e2e2" stroke-width="1" />
<line x1="856.72" y1="455.5" x2="856.72" y2="518.9000000000001" stroke="#e2e2e2" stroke-width="1" />
<line x1="892.78" y1="455.5" x2="892.78" y2="518.9000000000001" stroke="#e2e2e2" stroke-width="1" />
<line x1="928.84" y1="455.5" x2="928.84" y2="518.9000000000001" stroke="#e2e2e2" stroke-width="1" />
<line x1="964.91" y1="455.5" x2="964.91" y2="518.9000000000001" stroke="#e2e2e2" stroke-width="1" />
<line x1="174" y1="141.4" x2="974.2" y2="141.4" stroke="#c9c9c9" stroke-width="1.2" />
<line x1="174" y1="223.2" x2="974.2" y2="223.2" stroke="#c9c9c9" stroke-width="1.2" />
<line x1="174" y1="293.5" x2="974.2" y2="293.5" stroke="#c9c9c9" stroke-width="1.2" />
<line x1="174" y1="353.4" x2="974.2" y2="353.4" stroke="#c9c9c9" stroke-width="1.2" />
<line x1="174" y1="420.6" x2="974.2" y2="420.6" stroke="#c9c9c9" stroke-width="1.2" />
<line x1="174" y1="506.6" x2="974.2" y2="506.6" stroke="#c9c9c9" stroke-width="1.2" />
<rect x="0" y="115.5" width="974.2" height="2" fill="#858585" />
<rect x="0" y="182.9" width="974.2" height="2" fill="#a3a3a3" />
<rect x="0" y="250.3" width="974.2" height="2" fill="#a3a3a3" />
<rect x="0" y="317.70000000000005" width="974.2" height="2" fill="#a3a3a3" />
<rect x="0" y="385.1" width="974.2" height="2" fill="#a3a3a3" />
<rect x="0" y="452.5" width="974.2" height="2" fill="#a3a3a3" />
<rect x="0" y="520" width="974.2" height="1.3" fill="#a3a3a3" />
<rect x="171" y="115.5" width="2" height="406" fill="#a3a3a3" />
<rect x="973.7" y="115.5" width="1" height="406" fill="#d2d2d2" />
<clipPath id="pc"><rect x="173" y="116" width="801.2" height="406"/></clipPath>
<g clip-path="url(#pc)">
<polyline points="172.00,141.40 172.50,141.40 173.00,141.40 173.50,141.40 174.00,141.40 174.50,141.40 175.00,141.40 175.50,141.40 176.00,141.40 176.50,141.40 177.00,141.40 177.50,141.40 178.00,141.40 178.50,141.40 179.01,141.40 179.51,141.40 180.01,141.40 180.51,141.40 181.01,141.40 181.51,141.40 182.01,141.40 182.51,141.40 183.01,141.40 183.51,141.40 184.01,141.40 184.51,141.40 185.01,141.40 185.51,141.40 186.01,141.40 186.51,141.40 187.01,141.40 187.51,141.40 188.01,141.40 188.51,141.40 189.01,141.40 189.51,141.40 190.01,141.40 190.51,141.40 191.01,141.40 191.52,141.40 192.02,141.40 192.52,141.40 193.02,141.40 193.52,141.40 194.02,141.40 194.52,141.40 195.02,141.40 195.52,141.40 196.02,141.40 196.52,141.40 197.02,141.40 197.52,141.40 198.02,141.40 198.52,141.40 199.02,141.40 199.52,141.40 200.02,141.40 200.52,141.40 201.02,141.40 201.52,141.40 202.02,141.40 202.52,141.40 203.02,141.40 203.52,141.40 204.02,141.40 204.53,141.40 205.03,141.40 205.53,141.40 206.03,141.40 206.53,141.40 207.03,141.40 207.53,141.40 208.03,141.40 208.53,141.40 209.03,141.40 209.53,141.40 210.03,141.40 210.53,141.40 211.03,141.40 211.53,141.40 212.03,141.40 212.53,141.40 213.03,141.40 213.53,141.40 214.03,141.40 214.53,141.40 215.03,141.40 215.53,141.40 216.03,141.40 216.53,141.40 217.03,141.40 217.53,141.40 218.04,141.40 218.54,141.40 219.04,141.40 219.54,141.40 220.04,141.40 220.54,141.40 221.04,141.40 221.54,141.40 222.04,141.40 222.54,141.40 223.04,141.40 223.54,141.40 224.04,141.40 224.54,141.40 225.04,141.40 225.54,141.40 226.04,141.40 226.54,141.40 227.04,141.40 227.54,141.40 228.04,141.40 228.54,141.40 229.04,141.40 229.54,141.40 230.04,141.40 230.55,141.40 231.05,141.40 231.55,141.40 232.05,141.40 232.55,141.40 233.05,141.40 233.55,141.40 234.05,141.40 234.55,141.40 235.05,141.40 235.55,141.40 236.05,141.40 236.55,141.40 237.05,141.40 237.55,141.40 238.05,141.40 238.55,141.40 239.05,141.40 239.55,141.40 240.05,141.40 240.55,141.40 241.05,141.40 241.55,141.40 242.05,141.40 242.55,141.40 243.05,141.40 243.56,141.40 244.06,141.40 244.56,141.40 245.06,141.40 245.56,141.40 246.06,141.40 246.56,141.40 247.06,141.40 247.56,141.40 248.06,141.40 248.56,141.40 249.06,141.40 249.56,141.40 250.06,141.40 250.56,141.40 251.06,141.40 251.56,141.40 252.06,141.40 252.56,141.40 253.06,141.40 253.56,141.40 254.06,141.40 254.56,141.40 255.06,141.40 255.56,141.40 256.06,141.40 256.56,141.40 257.07,141.40 257.57,141.40 258.07,141.40 258.57,141.40 259.07,141.40 259.57,141.40 260.07,141.40 260.57,141.40 261.07,141.40 261.57,141.40 262.07,141.40 262.57,141.40 263.07,141.40 263.57,141.40 264.07,141.40 264.57,141.40 265.07,141.40 265.57,141.40 266.07,141.40 266.57,141.40 267.07,141.40 267.57,141.40 268.07,141.40 268.57,141.40 269.07,141.40 269.58,141.40 270.08,141.40 270.58,141.40 271.08,141.40 271.58,141.40 272.08,141.40 272.58,141.40 273.08,141.40 273.58,141.40 274.08,141.40 274.58,141.40 275.08,141.40 275.58,141.40 276.08,141.40 276.58,141.40 277.08,141.40 277.58,141.40 278.08,141.40 278.58,141.40 279.08,141.40 279.58,141.40 280.08,141.40 280.58,141.40 281.08,141.40 281.58,141.40 282.08,141.40 282.59,141.40 283.09,141.40 283.59,141.40 284.09,141.40 284.59,141.40 285.09,141.40 285.59,141.40 286.09,141.40 286.59,141.40 287.09,141.40 287.59,141.40 288.09,141.40 288.59,141.40 289.09,141.40 289.59,141.40 290.09,141.40 290.59,141.40 291.09,141.40 291.59,141.40 292.09,141.40 292.59,141.40 293.09,141.40 293.59,141.40 294.09,141.40 294.59,141.40 295.09,141.40 295.60,141.40 296.10,141.40 296.60,141.40 297.10,141.40 297.60,141.40 298.10,141.40 298.60,141.40 299.10,141.40 299.60,141.40 300.10,141.40 300.60,141.40 301.10,141.40 301.60,141.40 302.10,141.40 302.60,141.53 303.10,141.93 303.60,142.59 304.10,143.51 304.60,144.66 305.10,146.03 305.60,147.61 306.10,149.38 306.60,151.30 307.10,153.36 307.60,155.52 308.10,157.76 308.60,160.05 309.10,162.35 309.60,164.64 310.10,166.88 310.60,169.04 311.10,171.10 311.60,173.02 312.10,174.79 312.60,176.37 313.10,177.74 313.60,178.89 314.10,179.81 314.60,180.47 315.10,180.87 315.60,181.00 316.11,180.86 316.62,180.45 317.13,179.76 317.64,178.82 318.15,177.62 318.66,176.19 319.17,174.53 319.68,172.68 320.19,170.64 320.70,168.45 321.21,166.14 321.72,163.71 322.23,161.22 322.74,158.68 323.26,156.12 323.77,153.58 324.28,151.09 324.79,148.66 325.30,146.35 325.81,144.16 326.32,142.12 326.83,140.27 327.34,138.61 327.85,137.18 328.36,135.98 328.87,135.04 329.38,134.35 329.89,133.94 330.40,133.80 330.90,133.92 331.41,134.28 331.91,134.88 332.41,135.71 332.92,136.75 333.42,138.00 333.92,139.44 334.43,141.05 334.93,142.81 335.44,144.70 335.94,146.69 336.44,148.77 336.95,150.89 337.45,153.05 337.95,155.21 338.46,157.33 338.96,159.41 339.46,161.40 339.97,163.29 340.47,165.05 340.98,166.66 341.48,168.10 341.98,169.35 342.49,170.39 342.99,171.22 343.49,171.82 344.00,172.18 344.50,172.30 345.01,172.17 345.51,171.79 346.02,171.16 346.53,170.29 347.03,169.18 347.54,167.85 348.05,166.33 348.56,164.61 349.06,162.73 349.57,160.71 350.08,158.57 350.58,156.33 351.09,154.03 351.60,151.68 352.10,149.32 352.61,146.97 353.12,144.67 353.62,142.43 354.13,140.29 354.64,138.27 355.14,136.39 355.65,134.67 356.16,133.15 356.67,131.82 357.17,130.71 357.68,129.84 358.19,129.21 358.69,128.83 359.20,128.70 359.71,128.83 360.22,129.21 360.73,129.83 361.24,130.69 361.76,131.78 362.27,133.09 362.78,134.58 363.29,136.25 363.80,138.07 364.31,140.02 364.82,142.07 365.33,144.19 365.84,146.36 366.36,148.54 366.87,150.71 367.38,152.83 367.89,154.88 368.40,156.82 368.91,158.65 369.42,160.32 369.93,161.81 370.44,163.12 370.96,164.21 371.47,165.07 371.98,165.69 372.49,166.07 373.00,166.20 373.51,166.08 374.01,165.72 374.52,165.13 375.03,164.31 375.53,163.27 376.04,162.03 376.55,160.60 377.06,158.99 377.56,157.23 378.07,155.33 378.58,153.32 379.08,151.22 379.59,149.06 380.10,146.86 380.60,144.64 381.11,142.44 381.62,140.28 382.12,138.18 382.63,136.17 383.14,134.27 383.64,132.51 384.15,130.90 384.66,129.47 385.17,128.23 385.67,127.19 386.18,126.37 386.69,125.78 387.19,125.42 387.70,125.30 388.22,125.43 388.73,125.81 389.25,126.43 389.76,127.29 390.28,128.38 390.79,129.68 391.31,131.16 391.82,132.82 392.34,134.61 392.85,136.53 393.37,138.54 393.88,140.60 394.40,142.70 394.92,144.80 395.43,146.86 395.95,148.87 396.46,150.79 396.98,152.58 397.49,154.24 398.01,155.72 398.52,157.02 399.04,158.11 399.55,158.97 400.07,159.59 400.58,159.97 401.10,160.10 401.61,159.99 402.13,159.66 402.64,159.12 403.16,158.36 403.67,157.41 404.18,156.27 404.70,154.95 405.21,153.47 405.72,151.85 406.24,150.11 406.75,148.26 407.27,146.33 407.78,144.34 408.29,142.32 408.81,140.28 409.32,138.26 409.83,136.27 410.35,134.34 410.86,132.49 411.38,130.75 411.89,129.13 412.40,127.65 412.92,126.33 413.43,125.19 413.94,124.24 414.46,123.48 414.97,122.94 415.49,122.61 416.00,122.50 416.51,122.62 417.01,122.99 417.52,123.59 418.03,124.41 418.54,125.46 419.04,126.71 419.55,128.15 420.06,129.75 420.57,131.50 421.07,133.37 421.58,135.34 422.09,137.37 422.60,139.45 423.10,141.55 423.61,143.63 424.12,145.66 424.63,147.63 425.13,149.50 425.64,151.25 426.15,152.85 426.66,154.29 427.16,155.54 427.67,156.59 428.18,157.41 428.69,158.01 429.19,158.38 429.70,158.50 430.21,158.40 430.72,158.09 431.23,157.59 431.74,156.90 432.25,156.01 432.76,154.96 433.27,153.74 433.78,152.36 434.29,150.85 434.80,149.22 435.31,147.49 435.82,145.68 436.33,143.81 436.84,141.89 437.35,139.95 437.86,138.01 438.37,136.09 438.88,134.22 439.39,132.41 439.90,130.68 440.41,129.05 440.92,127.54 441.43,126.16 441.94,124.94 442.45,123.89 442.96,123.00 443.47,122.31 443.98,121.81 444.49,121.50 445.00,121.40 445.50,121.53 446.01,121.90 446.51,122.52 447.01,123.37 447.52,124.45 448.02,125.74 448.53,127.22 449.03,128.87 449.53,130.68 450.04,132.60 450.54,134.63 451.04,136.73 451.55,138.87 452.05,141.03 452.56,143.17 453.06,145.27 453.56,147.30 454.07,149.22 454.57,151.03 455.07,152.68 455.58,154.16 456.08,155.45 456.59,156.53 457.09,157.38 457.59,158.00 458.10,158.37 458.60,158.50 459.11,158.40 459.62,158.09 460.13,157.58 460.64,156.88 461.15,155.99 461.66,154.93 462.17,153.70 462.68,152.31 463.19,150.79 463.70,149.15 464.21,147.41 464.72,145.58 465.23,143.69 465.74,141.75 466.25,139.80 466.76,137.85 467.27,135.91 467.78,134.02 468.29,132.19 468.80,130.45 469.31,128.81 469.82,127.29 470.33,125.90 470.84,124.67 471.35,123.61 471.86,122.72 472.37,122.02 472.88,121.51 473.39,121.20 473.90,121.10 474.40,121.23 474.91,121.61 475.41,122.24 475.91,123.11 476.42,124.20 476.92,125.51 477.43,127.01 477.93,128.69 478.43,130.53 478.94,132.48 479.44,134.54 479.94,136.68 480.45,138.85 480.95,141.05 481.46,143.22 481.96,145.36 482.46,147.42 482.97,149.38 483.47,151.21 483.97,152.89 484.48,154.39 484.98,155.70 485.49,156.79 485.99,157.66 486.49,158.29 487.00,158.67 487.50,158.80 488.00,158.68 488.50,158.31 489.00,157.71 489.50,156.87 490.00,155.81 490.50,154.55 491.00,153.11 491.50,151.49 492.00,149.73 492.50,147.84 493.00,145.86 493.50,143.80 494.00,141.71 494.50,139.59 495.00,137.50 495.50,135.44 496.00,133.46 496.50,131.58 497.00,129.81 497.50,128.19 498.00,126.75 498.50,125.49 499.00,124.43 499.50,123.59 500.00,122.99 500.50,122.62 501.00,122.50 501.52,122.73 502.03,123.41 502.55,124.50 503.06,125.93 503.58,127.63 504.09,129.49 504.61,131.41 505.12,133.27 505.64,134.97 506.15,136.40 506.67,137.49 507.18,138.17 507.70,138.40 573.00,138.50 573.50,139.50 729.00,139.50 729.50,140.50 975.00,140.50" fill="none" stroke="#45b3c6" stroke-width="1.25" stroke-linejoin="round" />
<polyline points="172.00,223.20 172.50,223.20 173.00,223.20 173.50,223.20 174.00,223.20 174.50,223.20 175.00,223.20 175.50,223.20 176.00,223.20 176.50,223.20 177.00,223.20 177.50,223.20 178.00,223.20 178.50,223.20 179.01,223.20 179.51,223.20 180.01,223.20 180.51,223.20 181.01,223.20 181.51,223.20 182.01,223.20 182.51,223.20 183.01,223.20 183.51,223.20 184.01,223.20 184.51,223.20 185.01,223.20 185.51,223.20 186.01,223.20 186.51,223.20 187.01,223.20 187.51,223.20 188.01,223.20 188.51,223.20 189.01,223.20 189.51,223.20 190.01,223.20 190.51,223.20 191.01,223.20 191.52,223.20 192.02,223.20 192.52,223.20 193.02,223.20 193.52,223.20 194.02,223.20 194.52,223.20 195.02,223.20 195.52,223.20 196.02,223.20 196.52,223.20 197.02,223.20 197.52,223.20 198.02,223.20 198.52,223.20 199.02,223.20 199.52,223.20 200.02,223.20 200.52,223.20 201.02,223.20 201.52,223.20 202.02,223.20 202.52,223.20 203.02,223.20 203.52,223.20 204.02,223.20 204.53,223.20 205.03,223.20 205.53,223.20 206.03,223.20 206.53,223.20 207.03,223.20 207.53,223.20 208.03,223.20 208.53,223.20 209.03,223.20 209.53,223.20 210.03,223.20 210.53,223.20 211.03,223.20 211.53,223.20 212.03,223.20 212.53,223.20 213.03,223.20 213.53,223.20 214.03,223.20 214.53,223.20 215.03,223.20 215.53,223.20 216.03,223.20 216.53,223.20 217.03,223.20 217.53,223.20 218.04,223.20 218.54,223.20 219.04,223.20 219.54,223.20 220.04,223.20 220.54,223.20 221.04,223.20 221.54,223.20 222.04,223.20 222.54,223.20 223.04,223.20 223.54,223.20 224.04,223.20 224.54,223.20 225.04,223.20 225.54,223.20 226.04,223.20 226.54,223.20 227.04,223.20 227.54,223.20 228.04,223.20 228.54,223.20 229.04,223.20 229.54,223.20 230.04,223.20 230.55,223.20 231.05,223.20 231.55,223.20 232.05,223.20 232.55,223.20 233.05,223.20 233.55,223.20 234.05,223.20 234.55,223.20 235.05,223.20 235.55,223.20 236.05,223.20 236.55,223.20 237.05,223.20 237.55,223.20 238.05,223.20 238.55,223.20 239.05,223.20 239.55,223.20 240.05,223.20 240.55,223.20 241.05,223.20 241.55,223.20 242.05,223.20 242.55,223.20 243.05,223.20 243.56,223.20 244.06,223.20 244.56,223.20 245.06,223.20 245.56,223.20 246.06,223.20 246.56,223.20 247.06,223.20 247.56,223.20 248.06,223.20 248.56,223.20 249.06,223.20 249.56,223.20 250.06,223.20 250.56,223.20 251.06,223.20 251.56,223.20 252.06,223.20 252.56,223.20 253.06,223.20 253.56,223.20 254.06,223.20 254.56,223.20 255.06,223.20 255.56,223.20 256.06,223.20 256.56,223.20 257.07,223.20 257.57,223.20 258.07,223.20 258.57,223.20 259.07,223.20 259.57,223.20 260.07,223.20 260.57,223.20 261.07,223.20 261.57,223.20 262.07,223.20 262.57,223.20 263.07,223.20 263.57,223.20 264.07,223.20 264.57,223.20 265.07,223.20 265.57,223.20 266.07,223.20 266.57,223.20 267.07,223.20 267.57,223.20 268.07,223.20 268.57,223.20 269.07,223.20 269.58,223.20 270.08,223.20 270.58,223.20 271.08,223.20 271.58,223.20 272.08,223.20 272.58,223.20 273.08,223.20 273.58,223.20 274.08,223.20 274.58,223.20 275.08,223.20 275.58,223.20 276.08,223.20 276.58,223.20 277.08,223.20 277.58,223.20 278.08,223.20 278.58,223.20 279.08,223.20 279.58,223.20 280.08,223.20 280.58,223.20 281.08,223.20 281.58,223.20 282.08,223.20 282.59,223.20 283.09,223.20 283.59,223.20 284.09,223.20 284.59,223.20 285.09,223.20 285.59,223.20 286.09,223.20 286.59,223.20 287.09,223.20 287.59,223.20 288.09,223.20 288.59,223.20 289.09,223.20 289.59,223.20 290.09,223.20 290.59,223.20 291.09,223.20 291.59,223.20 292.09,223.20 292.59,223.20 293.09,223.20 293.59,223.20 294.09,223.20 294.59,223.20 295.09,223.20 295.60,223.20 296.10,223.20 296.60,223.20 297.10,223.20 297.60,223.20 298.10,223.20 298.60,223.20 299.10,223.20 299.60,223.20 300.10,223.20 300.60,223.20 301.10,223.20 301.60,223.20 302.10,223.20 302.61,222.94 303.12,222.16 303.63,220.88 304.14,219.15 304.66,217.02 305.17,214.55 305.68,211.82 306.19,208.90 306.70,205.90 307.21,202.90 307.72,199.98 308.23,197.25 308.74,194.78 309.26,192.65 309.77,190.92 310.28,189.64 310.79,188.86 311.30,188.60 311.80,188.78 312.30,189.32 312.80,190.20 313.30,191.43 313.80,192.98 314.30,194.83 314.80,196.96 315.30,199.35 315.80,201.96 316.30,204.76 316.80,207.72 317.30,210.80 317.80,213.95 318.30,217.15 318.80,220.35 319.30,223.50 319.80,226.58 320.30,229.54 320.80,232.34 321.30,234.95 321.80,237.34 322.30,239.47 322.80,241.32 323.30,242.87 323.80,244.10 324.30,244.98 324.80,245.52 325.30,245.70 325.80,245.54 326.30,245.07 326.80,244.28 327.30,243.20 327.80,241.82 328.30,240.17 328.80,238.27 329.30,236.14 329.80,233.81 330.30,231.29 330.80,228.63 331.30,225.85 331.80,222.98 332.30,220.07 332.80,217.13 333.30,214.22 333.80,211.35 334.30,208.57 334.80,205.91 335.30,203.39 335.80,201.06 336.30,198.93 336.80,197.03 337.30,195.38 337.80,194.00 338.30,192.92 338.80,192.13 339.30,191.66 339.80,191.50 340.30,191.68 340.81,192.20 341.31,193.07 341.81,194.26 342.32,195.78 342.82,197.59 343.32,199.67 343.83,202.00 344.33,204.56 344.84,207.29 345.34,210.19 345.84,213.19 346.35,216.28 346.85,219.40 347.35,222.52 347.86,225.61 348.36,228.61 348.86,231.51 349.37,234.24 349.87,236.80 350.38,239.13 350.88,241.21 351.38,243.02 351.89,244.54 352.39,245.73 352.89,246.60 353.40,247.12 353.90,247.30 354.41,247.14 354.91,246.66 355.42,245.87 355.93,244.78 356.43,243.40 356.94,241.74 357.45,239.83 357.96,237.69 358.46,235.34 358.97,232.81 359.48,230.14 359.98,227.34 360.49,224.46 361.00,221.53 361.50,218.57 362.01,215.64 362.52,212.76 363.02,209.96 363.53,207.29 364.04,204.76 364.54,202.41 365.05,200.27 365.56,198.36 366.07,196.70 366.57,195.32 367.08,194.23 367.59,193.44 368.09,192.96 368.60,192.80 369.11,192.97 369.61,193.49 370.12,194.35 370.63,195.53 371.14,197.03 371.64,198.82 372.15,200.88 372.66,203.19 373.16,205.72 373.67,208.42 374.18,211.28 374.69,214.26 375.19,217.31 375.70,220.40 376.21,223.49 376.71,226.54 377.22,229.52 377.73,232.38 378.24,235.08 378.74,237.61 379.25,239.92 379.76,241.98 380.26,243.77 380.77,245.27 381.28,246.45 381.79,247.31 382.29,247.83 382.80,248.00 383.31,247.84 383.81,247.37 384.32,246.59 384.83,245.50 385.33,244.14 385.84,242.49 386.35,240.60 386.86,238.48 387.36,236.15 387.87,233.65 388.38,230.99 388.88,228.22 389.39,225.37 389.90,222.46 390.40,219.54 390.91,216.63 391.42,213.78 391.92,211.01 392.43,208.35 392.94,205.85 393.44,203.52 393.95,201.40 394.46,199.51 394.97,197.86 395.47,196.50 395.98,195.41 396.49,194.63 396.99,194.16 397.50,194.00 398.01,194.17 398.51,194.68 399.02,195.52 399.53,196.67 400.04,198.14 400.54,199.89 401.05,201.91 401.56,204.17 402.06,206.64 402.57,209.29 403.08,212.08 403.59,214.99 404.09,217.98 404.60,221.00 405.11,224.02 405.61,227.01 406.12,229.92 406.63,232.71 407.14,235.36 407.64,237.83 408.15,240.09 408.66,242.11 409.16,243.86 409.67,245.33 410.18,246.48 410.69,247.32 411.19,247.83 411.70,248.00 412.21,247.84 412.71,247.38 413.22,246.60 413.73,245.53 414.23,244.18 414.74,242.56 415.25,240.68 415.76,238.59 416.26,236.28 416.77,233.81 417.28,231.18 417.78,228.44 418.29,225.62 418.80,222.75 419.30,219.85 419.81,216.98 420.32,214.16 420.82,211.42 421.33,208.79 421.84,206.32 422.34,204.01 422.85,201.92 423.36,200.04 423.87,198.42 424.37,197.07 424.88,196.00 425.39,195.22 425.89,194.76 426.40,194.60 426.91,194.77 427.41,195.27 427.92,196.10 428.43,197.24 428.94,198.69 429.44,200.43 429.95,202.42 430.46,204.65 430.96,207.09 431.47,209.72 431.98,212.48 432.49,215.36 432.99,218.31 433.50,221.30 434.01,224.29 434.51,227.24 435.02,230.12 435.53,232.88 436.04,235.51 436.54,237.95 437.05,240.18 437.56,242.17 438.06,243.91 438.57,245.36 439.08,246.50 439.59,247.33 440.09,247.83 440.60,248.00 441.11,247.84 441.61,247.38 442.12,246.60 442.63,245.53 443.13,244.18 443.64,242.56 444.15,240.68 444.66,238.59 445.16,236.28 445.67,233.81 446.18,231.18 446.68,228.44 447.19,225.62 447.70,222.75 448.20,219.85 448.71,216.98 449.22,214.16 449.72,211.42 450.23,208.79 450.74,206.32 451.24,204.01 451.75,201.92 452.26,200.04 452.77,198.42 453.27,197.07 453.78,196.00 454.29,195.22 454.79,194.76 455.30,194.60 455.81,194.77 456.31,195.27 456.82,196.10 457.33,197.24 457.84,198.69 458.34,200.43 458.85,202.42 459.36,204.65 459.86,207.09 460.37,209.72 460.88,212.48 461.39,215.36 461.89,218.31 462.40,221.30 462.91,224.29 463.41,227.24 463.92,230.12 464.43,232.88 464.94,235.51 465.44,237.95 465.95,240.18 466.46,242.17 466.96,243.91 467.47,245.36 467.98,246.50 468.49,247.33 468.99,247.83 469.50,248.00 470.01,247.83 470.53,247.33 471.04,246.50 471.56,245.36 472.07,243.91 472.59,242.17 473.10,240.18 473.61,237.95 474.13,235.51 474.64,232.88 475.16,230.12 475.67,227.24 476.19,224.29 476.70,221.30 477.21,218.31 477.73,215.36 478.24,212.48 478.76,209.72 479.27,207.09 479.79,204.65 480.30,202.42 480.81,200.43 481.33,198.69 481.84,197.24 482.36,196.10 482.87,195.27 483.39,194.77 483.90,194.60 484.40,194.77 484.90,195.27 485.40,196.10 485.90,197.24 486.40,198.69 486.90,200.43 487.40,202.42 487.90,204.65 488.40,207.09 488.90,209.72 489.40,212.48 489.90,215.36 490.40,218.31 490.90,221.30 491.40,224.29 491.90,227.24 492.40,230.12 492.90,232.88 493.40,235.51 493.90,237.95 494.40,240.18 494.90,242.17 495.40,243.91 495.90,245.36 496.40,246.50 496.90,247.33 497.40,247.83 497.90,248.00 498.42,247.83 498.93,247.34 499.45,246.54 499.96,245.45 500.48,244.10 500.99,242.52 501.51,240.76 502.03,238.87 502.54,236.90 503.06,234.90 503.57,232.93 504.09,231.04 504.61,229.28 505.12,227.70 505.64,226.35 506.15,225.26 506.67,224.46 507.18,223.97 507.70,223.80 863.00,223.90 863.50,223.30 975.00,223.30" fill="none" stroke="#c14a6c" stroke-width="1.3" stroke-linejoin="round" />
<polyline points="172.00,293.50 172.50,293.50 173.00,293.50 173.50,293.50 174.00,293.50 174.50,293.50 175.00,293.50 175.50,293.50 176.00,293.50 176.50,293.50 177.00,293.50 177.50,293.50 178.00,293.50 178.50,293.50 179.01,293.50 179.51,293.50 180.01,293.50 180.51,293.50 181.01,293.50 181.51,293.50 182.01,293.50 182.51,293.50 183.01,293.50 183.51,293.50 184.01,293.50 184.51,293.50 185.01,293.50 185.51,293.50 186.01,293.50 186.51,293.50 187.01,293.50 187.51,293.50 188.01,293.50 188.51,293.50 189.01,293.50 189.51,293.50 190.01,293.50 190.51,293.50 191.01,293.50 191.51,293.50 192.02,293.50 192.52,293.50 193.02,293.50 193.52,293.50 194.02,293.50 194.52,293.50 195.02,293.50 195.52,293.50 196.02,293.50 196.52,293.50 197.02,293.50 197.52,293.50 198.02,293.50 198.52,293.50 199.02,293.50 199.52,293.50 200.02,293.50 200.52,293.50 201.02,293.50 201.52,293.50 202.02,293.50 202.52,293.50 203.02,293.50 203.52,293.50 204.02,293.50 204.52,293.50 205.03,293.50 205.53,293.50 206.03,293.50 206.53,293.50 207.03,293.50 207.53,293.50 208.03,293.50 208.53,293.50 209.03,293.50 209.53,293.50 210.03,293.50 210.53,293.50 211.03,293.50 211.53,293.50 212.03,293.50 212.53,293.50 213.03,293.50 213.53,293.50 214.03,293.50 214.53,293.50 215.03,293.50 215.53,293.50 216.03,293.50 216.53,293.50 217.03,293.50 217.53,293.50 218.04,293.50 218.54,293.50 219.04,293.50 219.54,293.50 220.04,293.50 220.54,293.50 221.04,293.50 221.54,293.50 222.04,293.50 222.54,293.50 223.04,293.50 223.54,293.50 224.04,293.50 224.54,293.50 225.04,293.50 225.54,293.50 226.04,293.50 226.54,293.50 227.04,293.50 227.54,293.50 228.04,293.50 228.54,293.50 229.04,293.50 229.54,293.50 230.04,293.50 230.54,293.50 231.05,293.50 231.55,293.50 232.05,293.50 232.55,293.50 233.05,293.50 233.55,293.50 234.05,293.50 234.55,293.50 235.05,293.50 235.55,293.50 236.05,293.50 236.55,293.50 237.05,293.50 237.55,293.50 238.05,293.50 238.55,293.50 239.05,293.50 239.55,293.50 240.05,293.50 240.55,293.50 241.05,293.50 241.55,293.50 242.05,293.50 242.55,293.50 243.05,293.50 243.55,293.50 244.05,293.50 244.56,293.50 245.06,293.50 245.56,293.50 246.06,293.50 246.56,293.50 247.06,293.50 247.56,293.50 248.06,293.50 248.56,293.50 249.06,293.50 249.56,293.50 250.06,293.50 250.56,293.50 251.06,293.50 251.56,293.50 252.06,293.50 252.56,293.50 253.06,293.50 253.56,293.50 254.06,293.50 254.56,293.50 255.06,293.50 255.56,293.50 256.06,293.50 256.56,293.50 257.06,293.50 257.57,293.50 258.07,293.50 258.57,293.50 259.07,293.50 259.57,293.50 260.07,293.50 260.57,293.50 261.07,293.50 261.57,293.50 262.07,293.50 262.57,293.50 263.07,293.50 263.57,293.50 264.07,293.50 264.57,293.50 265.07,293.50 265.57,293.50 266.07,293.50 266.57,293.50 267.07,293.50 267.57,293.50 268.07,293.50 268.57,293.50 269.07,293.50 269.57,293.50 270.07,293.50 270.58,293.50 271.08,293.50 271.58,293.50 272.08,293.50 272.58,293.50 273.08,293.50 273.58,293.50 274.08,293.50 274.58,293.50 275.08,293.50 275.58,293.50 276.08,293.50 276.58,293.50 277.08,293.50 277.58,293.50 278.08,293.50 278.58,293.50 279.08,293.50 279.58,293.50 280.08,293.50 280.58,293.50 281.08,293.50 281.58,293.50 282.08,293.50 282.58,293.50 283.08,293.50 283.59,293.50 284.09,293.50 284.59,293.50 285.09,293.50 285.59,293.50 286.09,293.50 286.59,293.50 287.09,293.50 287.59,293.50 288.09,293.50 288.59,293.50 289.09,293.50 289.59,293.50 290.09,293.50 290.59,293.50 291.09,293.50 291.59,293.50 292.09,293.50 292.59,293.50 293.09,293.50 293.59,293.50 294.09,293.50 294.59,293.50 295.09,293.50 295.59,293.50 296.09,293.50 296.60,293.50 297.10,293.50 297.60,293.50 298.10,293.50 298.60,293.50 299.10,293.50 299.60,293.50 300.10,293.50 300.60,293.50 301.10,293.50 301.60,293.50 302.10,293.50 302.60,293.50 303.10,293.50 303.60,293.76 304.10,294.50 304.60,295.56 305.10,296.74 305.60,297.80 306.10,298.54 306.60,298.80 307.12,298.64 307.63,298.17 308.15,297.40 308.66,296.33 309.18,294.98 309.69,293.37 310.21,291.52 310.72,289.47 311.24,287.24 311.75,284.86 312.27,282.37 312.78,279.80 313.30,277.20 313.82,274.60 314.33,272.03 314.85,269.54 315.36,267.16 315.88,264.93 316.39,262.88 316.91,261.03 317.42,259.42 317.94,258.07 318.45,257.00 318.97,256.23 319.48,255.76 320.00,255.60 320.51,255.74 321.02,256.15 321.53,256.82 322.04,257.76 322.55,258.95 323.06,260.37 323.57,262.02 324.08,263.87 324.59,265.91 325.10,268.10 325.61,270.43 326.12,272.87 326.63,275.40 327.14,277.99 327.65,280.60 328.16,283.21 328.67,285.80 329.18,288.33 329.69,290.77 330.20,293.10 330.71,295.29 331.22,297.33 331.73,299.18 332.24,300.83 332.75,302.25 333.26,303.44 333.77,304.38 334.28,305.05 334.79,305.46 335.30,305.60 335.81,305.45 336.33,305.01 336.84,304.28 337.36,303.28 337.87,302.01 338.39,300.49 338.90,298.74 339.42,296.80 339.93,294.68 340.45,292.40 340.96,290.02 341.48,287.54 341.99,285.02 342.51,282.48 343.02,279.96 343.54,277.48 344.05,275.10 344.57,272.82 345.08,270.70 345.60,268.76 346.11,267.01 346.63,265.49 347.14,264.22 347.66,263.22 348.17,262.49 348.69,262.05 349.20,261.90 349.71,262.04 350.22,262.46 350.73,263.15 351.24,264.10 351.75,265.31 352.26,266.75 352.77,268.42 353.28,270.29 353.79,272.34 354.30,274.55 354.81,276.89 355.32,279.33 355.83,281.85 356.34,284.41 356.86,286.99 357.37,289.55 357.88,292.07 358.39,294.51 358.90,296.85 359.41,299.06 359.92,301.11 360.43,302.98 360.94,304.65 361.45,306.09 361.96,307.30 362.47,308.25 362.98,308.94 363.49,309.36 364.00,309.50 364.50,309.36 365.00,308.95 365.50,308.26 366.00,307.32 366.50,306.12 367.00,304.69 367.50,303.04 368.00,301.20 368.50,299.18 369.00,297.02 369.50,294.73 370.00,292.36 370.50,289.92 371.00,287.45 371.50,284.98 372.00,282.54 372.50,280.17 373.00,277.88 373.50,275.72 374.00,273.70 374.50,271.86 375.00,270.21 375.50,268.78 376.00,267.58 376.50,266.64 377.00,265.95 377.50,265.54 378.00,265.40 378.51,265.54 379.03,265.95 379.54,266.63 380.06,267.57 380.57,268.76 381.08,270.18 381.60,271.83 382.11,273.67 382.62,275.69 383.14,277.87 383.65,280.17 384.17,282.58 384.68,285.06 385.19,287.58 385.71,290.12 386.22,292.64 386.73,295.12 387.25,297.53 387.76,299.83 388.28,302.01 388.79,304.03 389.30,305.87 389.82,307.52 390.33,308.94 390.84,310.13 391.36,311.07 391.87,311.75 392.39,312.16 392.90,312.30 393.41,312.16 393.93,311.75 394.44,311.06 394.96,310.11 395.47,308.91 395.99,307.48 396.50,305.83 397.01,303.98 397.53,301.96 398.04,299.79 398.56,297.50 399.07,295.12 399.59,292.67 400.10,290.20 400.61,287.73 401.13,285.28 401.64,282.90 402.16,280.61 402.67,278.44 403.19,276.42 403.70,274.57 404.21,272.92 404.73,271.49 405.24,270.29 405.76,269.34 406.27,268.65 406.79,268.24 407.30,268.10 407.81,268.24 408.31,268.67 408.82,269.37 409.33,270.34 409.84,271.57 410.34,273.04 410.85,274.73 411.36,276.63 411.86,278.70 412.37,280.92 412.88,283.27 413.39,285.71 413.89,288.21 414.40,290.75 414.91,293.29 415.41,295.79 415.92,298.23 416.43,300.58 416.94,302.80 417.44,304.87 417.95,306.77 418.46,308.46 418.96,309.93 419.47,311.16 419.98,312.13 420.49,312.83 420.99,313.26 421.50,313.40 422.01,313.26 422.51,312.85 423.02,312.17 423.53,311.23 424.04,310.04 424.54,308.61 425.05,306.97 425.56,305.14 426.06,303.13 426.57,300.97 427.08,298.70 427.59,296.33 428.09,293.91 428.60,291.45 429.11,288.99 429.61,286.57 430.12,284.20 430.63,281.93 431.14,279.77 431.64,277.76 432.15,275.93 432.66,274.29 433.16,272.86 433.67,271.67 434.18,270.73 434.69,270.05 435.19,269.64 435.70,269.50 436.21,269.63 436.71,270.03 437.22,270.69 437.73,271.60 438.23,272.76 438.74,274.14 439.25,275.73 439.76,277.52 440.26,279.48 440.77,281.59 441.28,283.83 441.78,286.16 442.29,288.57 442.80,291.02 443.30,293.48 443.81,295.93 444.32,298.34 444.82,300.67 445.33,302.91 445.84,305.02 446.34,306.98 446.85,308.77 447.36,310.36 447.87,311.74 448.37,312.90 448.88,313.81 449.39,314.47 449.89,314.87 450.40,315.00 450.91,314.86 451.41,314.44 451.92,313.75 452.43,312.80 452.94,311.60 453.44,310.16 453.95,308.50 454.46,306.64 454.96,304.61 455.47,302.43 455.98,300.13 456.49,297.74 456.99,295.29 457.50,292.80 458.01,290.31 458.51,287.86 459.02,285.47 459.53,283.17 460.04,280.99 460.54,278.96 461.05,277.10 461.56,275.44 462.06,274.00 462.57,272.80 463.08,271.85 463.59,271.16 464.09,270.74 464.60,270.60 465.11,270.73 465.61,271.13 466.12,271.78 466.63,272.69 467.13,273.84 467.64,275.21 468.15,276.79 468.66,278.57 469.16,280.52 469.67,282.61 470.18,284.83 470.68,287.15 471.19,289.54 471.70,291.98 472.20,294.42 472.71,296.86 473.22,299.25 473.72,301.57 474.23,303.79 474.74,305.88 475.24,307.83 475.75,309.61 476.26,311.19 476.77,312.56 477.27,313.71 477.78,314.62 478.29,315.27 478.79,315.67 479.30,315.80 479.81,315.66 480.31,315.24 480.82,314.55 481.33,313.60 481.84,312.40 482.34,310.96 482.85,309.30 483.36,307.44 483.86,305.41 484.37,303.23 484.88,300.93 485.39,298.54 485.89,296.09 486.40,293.60 486.91,291.11 487.41,288.66 487.92,286.27 488.43,283.97 488.94,281.79 489.44,279.76 489.95,277.90 490.46,276.24 490.96,274.80 491.47,273.60 491.98,272.65 492.49,271.96 492.99,271.54 493.50,271.40 494.01,271.63 494.52,272.31 495.04,273.42 495.55,274.91 496.06,276.73 496.57,278.81 497.09,281.06 497.60,283.40 498.11,285.74 498.62,287.99 499.14,290.07 499.65,291.89 500.16,293.38 500.68,294.49 501.19,295.17 501.70,295.40 525.70,295.40 526.00,294.80 741.00,294.80 741.50,294.10 975.00,294.10" fill="none" stroke="#ee62ee" stroke-width="1.3" stroke-linejoin="round" />
<polyline points="170.51,349.74 171.02,346.42 171.54,343.19 172.05,340.08 172.57,337.14 173.08,334.40 173.60,331.89 174.11,329.65 174.63,327.70 175.14,326.07 175.66,324.78 176.17,323.85 176.69,323.29 177.20,323.10 177.71,323.29 178.23,323.85 178.74,324.78 179.26,326.07 179.77,327.70 180.29,329.65 180.80,331.89 181.32,334.40 181.83,337.14 182.35,340.08 182.86,343.19 183.38,346.42 183.89,349.74 184.41,353.10 184.92,356.46 185.44,359.78 185.95,363.01 186.47,366.12 186.98,369.06 187.50,371.80 188.01,374.31 188.53,376.55 189.04,378.50 189.56,380.13 190.07,381.42 190.59,382.35 191.10,382.91 191.62,383.10 192.13,382.91 192.65,382.35 193.16,381.42 193.68,380.13 194.19,378.50 194.71,376.55 195.22,374.31 195.74,371.80 196.25,369.06 196.77,366.12 197.28,363.01 197.80,359.78 198.31,356.46 198.83,353.10 199.34,349.74 199.86,346.42 200.37,343.19 200.89,340.08 201.40,337.14 201.92,334.40 202.43,331.89 202.95,329.65 203.46,327.70 203.98,326.07 204.49,324.78 205.01,323.85 205.52,323.29 206.03,323.10 206.55,323.29 207.06,323.85 207.58,324.78 208.09,326.07 208.61,327.70 209.12,329.65 209.64,331.89 210.15,334.40 210.67,337.14 211.18,340.08 211.70,343.19 212.21,346.42 212.73,349.74 213.24,353.10 213.76,356.46 214.27,359.78 214.79,363.01 215.30,366.12 215.82,369.06 216.33,371.80 216.85,374.31 217.36,376.55 217.88,378.50 218.39,380.13 218.91,381.42 219.42,382.35 219.94,382.91 220.45,383.10 220.97,382.91 221.48,382.35 222.00,381.42 222.51,380.13 223.03,378.50 223.54,376.55 224.06,374.31 224.57,371.80 225.09,369.06 225.60,366.12 226.12,363.01 226.63,359.78 227.15,356.46 227.66,353.10 228.18,349.74 228.69,346.42 229.21,343.19 229.72,340.08 230.24,337.14 230.75,334.40 231.27,331.89 231.78,329.65 232.30,327.70 232.81,326.07 233.33,324.78 233.84,323.85 234.36,323.29 234.87,323.10 235.38,323.29 235.90,323.85 236.41,324.78 236.93,326.07 237.44,327.70 237.96,329.65 238.47,331.89 238.99,334.40 239.50,337.14 240.02,340.08 240.53,343.19 241.05,346.42 241.56,349.74 242.08,353.10 242.59,356.46 243.11,359.78 243.62,363.01 244.14,366.12 244.65,369.06 245.17,371.80 245.68,374.31 246.20,376.55 246.71,378.50 247.23,380.13 247.74,381.42 248.26,382.35 248.77,382.91 249.29,383.10 249.80,382.91 250.32,382.35 250.83,381.42 251.35,380.13 251.86,378.50 252.38,376.55 252.89,374.31 253.41,371.80 253.92,369.06 254.44,366.12 254.95,363.01 255.47,359.78 255.98,356.46 256.50,353.10 257.01,349.74 257.53,346.42 258.04,343.19 258.56,340.08 259.07,337.14 259.59,334.40 260.10,331.89 260.62,329.65 261.13,327.70 261.65,326.07 262.16,324.78 262.68,323.85 263.19,323.29 263.70,323.10 264.22,323.29 264.73,323.85 265.25,324.78 265.76,326.07 266.28,327.70 266.79,329.65 267.31,331.89 267.82,334.40 268.34,337.14 268.85,340.08 269.37,343.19 269.88,346.42 270.40,349.74 270.91,353.10 271.43,356.46 271.94,359.78 272.46,363.01 272.97,366.12 273.49,369.06 274.00,371.80 274.52,374.31 275.03,376.55 275.55,378.50 276.06,380.13 276.58,381.42 277.09,382.35 277.61,382.91 278.12,383.10 278.64,382.91 279.15,382.35 279.67,381.42 280.18,380.13 280.70,378.50 281.21,376.55 281.73,374.31 282.24,371.80 282.76,369.06 283.27,366.12 283.79,363.01 284.30,359.78 284.82,356.46 285.33,353.10 285.85,349.74 286.36,346.42 286.88,343.19 287.39,340.08 287.91,337.14 288.42,334.40 288.94,331.89 289.45,329.65 289.97,327.70 290.48,326.07 291.00,324.78 291.51,323.85 292.03,323.29 292.54,323.10 293.05,323.25 293.57,323.72 294.08,324.48 294.60,325.53 295.11,326.86 295.63,328.46 296.14,330.29 296.66,332.34 297.17,334.59 297.69,337.00 298.20,339.54 298.72,342.19 299.23,344.90 299.75,347.65 300.26,350.40 300.78,353.11 301.29,355.76 301.81,358.30 302.32,360.71 302.84,362.96 303.35,365.01 303.87,366.84 304.38,368.44 304.90,369.77 305.41,370.82 305.93,371.58 306.44,372.05 306.96,372.20 307.47,372.08 307.99,371.72 308.50,371.13 309.02,370.32 309.53,369.29 310.05,368.05 310.56,366.64 311.08,365.05 311.59,363.31 312.11,361.44 312.62,359.48 313.14,357.43 313.65,355.33 314.17,353.20 314.68,351.07 315.20,348.97 315.71,346.92 316.23,344.96 316.74,343.09 317.26,341.35 317.77,339.76 318.29,338.35 318.80,337.11 319.32,336.08 319.83,335.27 320.35,334.68 320.86,334.32 321.38,334.20 321.89,334.32 322.40,334.68 322.92,335.27 323.43,336.08 323.95,337.11 324.46,338.35 324.98,339.76 325.49,341.35 326.01,343.09 326.52,344.96 327.04,346.92 327.55,348.97 328.07,351.07 328.58,353.20 329.10,355.33 329.61,357.43 330.13,359.48 330.64,361.44 331.16,363.31 331.67,365.05 332.19,366.64 332.70,368.05 333.22,369.29 333.73,370.32 334.25,371.13 334.76,371.72 335.28,372.08 335.79,372.20 336.31,372.08 336.82,371.72 337.34,371.13 337.85,370.32 338.37,369.29 338.88,368.05 339.40,366.64 339.91,365.05 340.43,363.31 340.94,361.44 341.46,359.48 341.97,357.43 342.49,355.33 343.00,353.20 343.52,351.07 344.03,348.97 344.55,346.92 345.06,344.96 345.58,343.09 346.09,341.35 346.61,339.76 347.12,338.35 347.64,337.11 348.15,336.08 348.67,335.27 349.18,334.68 349.70,334.32 350.21,334.20 350.72,334.32 351.24,334.68 351.75,335.27 352.27,336.08 352.78,337.11 353.30,338.35 353.81,339.76 354.33,341.35 354.84,343.09 355.36,344.96 355.87,346.92 356.39,348.97 356.90,351.07 357.42,353.20 357.93,355.33 358.45,357.43 358.96,359.48 359.48,361.44 359.99,363.31 360.51,365.05 361.02,366.64 361.54,368.05 362.05,369.29 362.57,370.32 363.08,371.13 363.60,371.72 364.11,372.08 364.63,372.20 365.14,372.08 365.66,371.72 366.17,371.13 366.69,370.32 367.20,369.29 367.72,368.05 368.23,366.64 368.75,365.05 369.26,363.31 369.78,361.44 370.29,359.48 370.81,357.43 371.32,355.33 371.84,353.20 372.35,351.07 372.87,348.97 373.38,346.92 373.90,344.96 374.41,343.09 374.93,341.35 375.44,339.76 375.96,338.35 376.47,337.11 376.99,336.08 377.50,335.27 378.02,334.68 378.53,334.32 379.04,334.20 379.56,334.32 380.07,334.68 380.59,335.27 381.10,336.08 381.62,337.11 382.13,338.35 382.65,339.76 383.16,341.35 383.68,343.09 384.19,344.96 384.71,346.92 385.22,348.97 385.74,351.07 386.25,353.20 386.77,355.33 387.28,357.43 387.80,359.48 388.31,361.44 388.83,363.31 389.34,365.05 389.86,366.64 390.37,368.05 390.89,369.29 391.40,370.32 391.92,371.13 392.43,371.72 392.95,372.08 393.46,372.20 393.98,372.08 394.49,371.72 395.01,371.13 395.52,370.32 396.04,369.29 396.55,368.05 397.07,366.64 397.58,365.05 398.10,363.31 398.61,361.44 399.13,359.48 399.64,357.43 400.16,355.33 400.67,353.20 401.19,351.07 401.70,348.97 402.22,346.92 402.73,344.96 403.25,343.09 403.76,341.35 404.28,339.76 404.79,338.35 405.31,337.11 405.82,336.08 406.34,335.27 406.85,334.68 407.37,334.32 407.88,334.20 408.39,334.32 408.91,334.68 409.42,335.27 409.94,336.08 410.45,337.11 410.97,338.35 411.48,339.76 412.00,341.35 412.51,343.09 413.03,344.96 413.54,346.92 414.06,348.97 414.57,351.07 415.09,353.20 415.60,355.33 416.12,357.43 416.63,359.48 417.15,361.44 417.66,363.31 418.18,365.05 418.69,366.64 419.21,368.05 419.72,369.29 420.24,370.32 420.75,371.13 421.27,371.72 421.78,372.08 422.30,372.20 422.81,372.08 423.33,371.72 423.84,371.13 424.36,370.32 424.87,369.29 425.39,368.05 425.90,366.64 426.42,365.05 426.93,363.31 427.45,361.44 427.96,359.48 428.48,357.43 428.99,355.33 429.51,353.20 430.02,351.07 430.54,348.97 431.05,346.92 431.57,344.96 432.08,343.09 432.60,341.35 433.11,339.76 433.63,338.35 434.14,337.11 434.66,336.08 435.17,335.27 435.69,334.68 436.20,334.32 436.71,334.20 437.23,334.32 437.74,334.68 438.26,335.27 438.77,336.08 439.29,337.11 439.80,338.35 440.32,339.76 440.83,341.35 441.35,343.09 441.86,344.96 442.38,346.92 442.89,348.97 443.41,351.07 443.92,353.20 444.44,355.33 444.95,357.43 445.47,359.48 445.98,361.44 446.50,363.31 447.01,365.05 447.53,366.64 448.04,368.05 448.56,369.29 449.07,370.32 449.59,371.13 450.10,371.72 450.62,372.08 451.13,372.20 451.65,372.08 452.16,371.72 452.68,371.13 453.19,370.32 453.71,369.29 454.22,368.05 454.74,366.64 455.25,365.05 455.77,363.31 456.28,361.44 456.80,359.48 457.31,357.43 457.83,355.33 458.34,353.20 458.86,351.07 459.37,348.97 459.89,346.92 460.40,344.96 460.92,343.09 461.43,341.35 461.95,339.76 462.46,338.35 462.98,337.11 463.49,336.08 464.01,335.27 464.52,334.68 465.04,334.32 465.55,334.20 466.06,334.32 466.58,334.68 467.09,335.27 467.61,336.08 468.12,337.11 468.64,338.35 469.15,339.76 469.67,341.35 470.18,343.09 470.70,344.96 471.21,346.92 471.73,348.97 472.24,351.07 472.76,353.20 473.27,355.33 473.79,357.43 474.30,359.48 474.82,361.44 475.33,363.31 475.85,365.05 476.36,366.64 476.88,368.05 477.39,369.29 477.91,370.32 478.42,371.13 478.94,371.72 479.45,372.08 479.97,372.20 480.48,372.08 481.00,371.72 481.51,371.13 482.03,370.32 482.54,369.29 483.06,368.05 483.57,366.64 484.09,365.05 484.60,363.31 485.12,361.44 485.63,359.48 486.15,357.43 486.66,355.33 487.18,353.20 487.69,351.07 488.21,348.97 488.72,346.92 489.24,344.96 489.75,343.09 490.27,341.35 490.78,339.76 491.30,338.35 491.81,337.11 492.33,336.08 492.84,335.27 493.36,334.68 493.87,334.32 494.38,334.20 494.90,334.35 495.41,334.81 495.93,335.57 496.44,336.62 496.96,337.95 497.47,339.53 497.99,341.36 498.50,343.41 499.02,345.64 499.53,348.04 500.05,350.57 500.56,353.21 501.08,355.91 501.59,358.65 502.11,361.39 502.62,364.09 503.14,366.73 503.65,369.26 504.17,371.66 504.68,373.89 505.20,375.94 505.71,377.77 506.23,379.35 506.74,380.68 507.26,381.73 507.77,382.49 508.29,382.95 508.80,383.10 509.32,382.91 509.83,382.35 510.35,381.42 510.86,380.13 511.38,378.50 511.89,376.55 512.41,374.31 512.92,371.80 513.44,369.06 513.95,366.12 514.47,363.01 514.98,359.78 515.50,356.46 516.01,353.10 516.53,349.74 517.04,346.42 517.56,343.19 518.07,340.08 518.59,337.14 519.10,334.40 519.62,331.89 520.13,329.65 520.65,327.70 521.16,326.07 521.68,324.78 522.19,323.85 522.71,323.29 523.22,323.10 523.73,323.29 524.25,323.85 524.76,324.78 525.28,326.07 525.79,327.70 526.31,329.65 526.82,331.89 527.34,334.40 527.85,337.14 528.37,340.08 528.88,343.19 529.40,346.42 529.91,349.74 530.43,353.10 530.94,356.46 531.46,359.78 531.97,363.01 532.49,366.12 533.00,369.06 533.52,371.80 534.03,374.31 534.55,376.55 535.06,378.50 535.58,380.13 536.09,381.42 536.61,382.35 537.12,382.91 537.64,383.10 538.15,382.91 538.67,382.35 539.18,381.42 539.70,380.13 540.21,378.50 540.73,376.55 541.24,374.31 541.76,371.80 542.27,369.06 542.79,366.12 543.30,363.01 543.82,359.78 544.33,356.46 544.85,353.10 545.36,349.74 545.88,346.42 546.39,343.19 546.91,340.08 547.42,337.14 547.94,334.40 548.45,331.89 548.97,329.65 549.48,327.70 550.00,326.07 550.51,324.78 551.03,323.85 551.54,323.29 552.06,323.10 552.57,323.29 553.08,323.85 553.60,324.78 554.11,326.07 554.63,327.70 555.14,329.65 555.66,331.89 556.17,334.40 556.69,337.14 557.20,340.08 557.72,343.19 558.23,346.42 558.75,349.74 559.26,353.10 559.78,356.46 560.29,359.78 560.81,363.01 561.32,366.12 561.84,369.06 562.35,371.80 562.87,374.31 563.38,376.55 563.90,378.50 564.41,380.13 564.93,381.42 565.44,382.35 565.96,382.91 566.47,383.10 566.99,382.91 567.50,382.35 568.02,381.42 568.53,380.13 569.05,378.50 569.56,376.55 570.08,374.31 570.59,371.80 571.11,369.06 571.62,366.12 572.14,363.01 572.65,359.78 573.17,356.46 573.68,353.10 574.20,349.74 574.71,346.42 575.23,343.19 575.74,340.08 576.26,337.14 576.77,334.40 577.29,331.89 577.80,329.65 578.32,327.70 578.83,326.07 579.35,324.78 579.86,323.85 580.38,323.29 580.89,323.10 581.40,323.29 581.92,323.85 582.43,324.78 582.95,326.07 583.46,327.70 583.98,329.65 584.49,331.89 585.01,334.40 585.52,337.14 586.04,340.08 586.55,343.19 587.07,346.42 587.58,349.74 588.10,353.10 588.61,356.46 589.13,359.78 589.64,363.01 590.16,366.12 590.67,369.06 591.19,371.80 591.70,374.31 592.22,376.55 592.73,378.50 593.25,380.13 593.76,381.42 594.28,382.35 594.79,382.91 595.31,383.10 595.82,382.91 596.34,382.35 596.85,381.42 597.37,380.13 597.88,378.50 598.40,376.55 598.91,374.31 599.43,371.80 599.94,369.06 600.46,366.12 600.97,363.01 601.49,359.78 602.00,356.46 602.52,353.10 603.03,349.74 603.55,346.42 604.06,343.19 604.58,340.08 605.09,337.14 605.61,334.40 606.12,331.89 606.64,329.65 607.15,327.70 607.67,326.07 608.18,324.78 608.70,323.85 609.21,323.29 609.73,323.10 610.24,323.29 610.75,323.85 611.27,324.78 611.78,326.07 612.30,327.70 612.81,329.65 613.33,331.89 613.84,334.40 614.36,337.14 614.87,340.08 615.39,343.19 615.90,346.42 616.42,349.74 616.93,353.10 617.45,356.46 617.96,359.78 618.48,363.01 618.99,366.12 619.51,369.06 620.02,371.80 620.54,374.31 621.05,376.55 621.57,378.50 622.08,380.13 622.60,381.42 623.11,382.35 623.63,382.91 624.14,383.10 624.66,382.91 625.17,382.35 625.69,381.42 626.20,380.13 626.72,378.50 627.23,376.55 627.75,374.31 628.26,371.80 628.78,369.06 629.29,366.12 629.81,363.01 630.32,359.78 630.84,356.46 631.35,353.10 631.87,349.74 632.38,346.42 632.90,343.19 633.41,340.08 633.93,337.14 634.44,334.40 634.96,331.89 635.47,329.65 635.99,327.70 636.50,326.07 637.02,324.78 637.53,323.85 638.05,323.29 638.56,323.10 639.07,323.29 639.59,323.85 640.10,324.78 640.62,326.07 641.13,327.70 641.65,329.65 642.16,331.89 642.68,334.40 643.19,337.14 643.71,340.08 644.22,343.19 644.74,346.42 645.25,349.74 645.77,353.10 646.28,356.46 646.80,359.78 647.31,363.01 647.83,366.12 648.34,369.06 648.86,371.80 649.37,374.31 649.89,376.55 650.40,378.50 650.92,380.13 651.43,381.42 651.95,382.35 652.46,382.91 652.98,383.10 653.49,382.91 654.01,382.35 654.52,381.42 655.04,380.13 655.55,378.50 656.07,376.55 656.58,374.31 657.10,371.80 657.61,369.06 658.13,366.12 658.64,363.01 659.16,359.78 659.67,356.46 660.19,353.10 660.70,349.74 661.22,346.42 661.73,343.19 662.25,340.08 662.76,337.14 663.28,334.40 663.79,331.89 664.31,329.65 664.82,327.70 665.34,326.07 665.85,324.78 666.37,323.85 666.88,323.29 667.39,323.10 667.91,323.29 668.42,323.85 668.94,324.78 669.45,326.07 669.97,327.70 670.48,329.65 671.00,331.89 671.51,334.40 672.03,337.14 672.54,340.08 673.06,343.19 673.57,346.42 674.09,349.74 674.60,353.10 675.12,356.46 675.63,359.78 676.15,363.01 676.66,366.12 677.18,369.06 677.69,371.80 678.21,374.31 678.72,376.55 679.24,378.50 679.75,380.13 680.27,381.42 680.78,382.35 681.30,382.91 681.81,383.10 682.33,382.91 682.84,382.35 683.36,381.42 683.87,380.13 684.39,378.50 684.90,376.55 685.42,374.31 685.93,371.80 686.45,369.06 686.96,366.12 687.48,363.01 687.99,359.78 688.51,356.46 689.02,353.10 689.54,349.74 690.05,346.42 690.57,343.19 691.08,340.08 691.60,337.14 692.11,334.40 692.63,331.89 693.14,329.65 693.66,327.70 694.17,326.07 694.69,324.78 695.20,323.85 695.72,323.29 696.23,323.10 696.74,323.29 697.26,323.85 697.77,324.78 698.29,326.07 698.80,327.70 699.32,329.65 699.83,331.89 700.35,334.40 700.86,337.14 701.38,340.08 701.89,343.19 702.41,346.42 702.92,349.74 703.44,353.10 703.95,356.46 704.47,359.78 704.98,363.01 705.50,366.12 706.01,369.06 706.53,371.80 707.04,374.31 707.56,376.55 708.07,378.50 708.59,380.13 709.10,381.42 709.62,382.35 710.13,382.91 710.65,383.10 711.16,382.91 711.68,382.35 712.19,381.42 712.71,380.13 713.22,378.50 713.74,376.55 714.25,374.31 714.77,371.80 715.28,369.06 715.80,366.12 716.31,363.01 716.83,359.78 717.34,356.46 717.86,353.10 718.37,349.74 718.89,346.42 719.40,343.19 719.92,340.08 720.43,337.14 720.95,334.40 721.46,331.89 721.98,329.65 722.49,327.70 723.01,326.07 723.52,324.78 724.04,323.85 724.55,323.29 725.07,323.10 725.58,323.29 726.09,323.85 726.61,324.78 727.12,326.07 727.64,327.70 728.15,329.65 728.67,331.89 729.18,334.40 729.70,337.14 730.21,340.08 730.73,343.19 731.24,346.42 731.76,349.74 732.27,353.10 732.79,356.46 733.30,359.78 733.82,363.01 734.33,366.12 734.85,369.06 735.36,371.80 735.88,374.31 736.39,376.55 736.91,378.50 737.42,380.13 737.94,381.42 738.45,382.35 738.97,382.91 739.48,383.10 740.00,382.91 740.51,382.35 741.03,381.42 741.54,380.13 742.06,378.50 742.57,376.55 743.09,374.31 743.60,371.80 744.12,369.06 744.63,366.12 745.15,363.01 745.66,359.78 746.18,356.46 746.69,353.10 747.21,349.74 747.72,346.42 748.24,343.19 748.75,340.08 749.27,337.14 749.78,334.40 750.30,331.89 750.81,329.65 751.33,327.70 751.84,326.07 752.36,324.78 752.87,323.85 753.39,323.29 753.90,323.10 754.41,323.29 754.93,323.85 755.44,324.78 755.96,326.07 756.47,327.70 756.99,329.65 757.50,331.89 758.02,334.40 758.53,337.14 759.05,340.08 759.56,343.19 760.08,346.42 760.59,349.74 761.11,353.10 761.62,356.46 762.14,359.78 762.65,363.01 763.17,366.12 763.68,369.06 764.20,371.80 764.71,374.31 765.23,376.55 765.74,378.50 766.26,380.13 766.77,381.42 767.29,382.35 767.80,382.91 768.32,383.10 768.83,382.91 769.35,382.35 769.86,381.42 770.38,380.13 770.89,378.50 771.41,376.55 771.92,374.31 772.44,371.80 772.95,369.06 773.47,366.12 773.98,363.01 774.50,359.78 775.01,356.46 775.53,353.10 776.04,349.74 776.56,346.42 777.07,343.19 777.59,340.08 778.10,337.14 778.62,334.40 779.13,331.89 779.65,329.65 780.16,327.70 780.68,326.07 781.19,324.78 781.71,323.85 782.22,323.29 782.73,323.10 783.25,323.29 783.76,323.85 784.28,324.78 784.79,326.07 785.31,327.70 785.82,329.65 786.34,331.89 786.85,334.40 787.37,337.14 787.88,340.08 788.40,343.19 788.91,346.42 789.43,349.74 789.94,353.10 790.46,356.46 790.97,359.78 791.49,363.01 792.00,366.12 792.52,369.06 793.03,371.80 793.55,374.31 794.06,376.55 794.58,378.50 795.09,380.13 795.61,381.42 796.12,382.35 796.64,382.91 797.15,383.10 797.67,382.91 798.18,382.35 798.70,381.42 799.21,380.13 799.73,378.50 800.24,376.55 800.76,374.31 801.27,371.80 801.79,369.06 802.30,366.12 802.82,363.01 803.33,359.78 803.85,356.46 804.36,353.10 804.88,349.74 805.39,346.42 805.91,343.19 806.42,340.08 806.94,337.14 807.45,334.40 807.97,331.89 808.48,329.65 809.00,327.70 809.51,326.07 810.03,324.78 810.54,323.85 811.06,323.29 811.57,323.10 812.08,323.29 812.60,323.85 813.11,324.78 813.63,326.07 814.14,327.70 814.66,329.65 815.17,331.89 815.69,334.40 816.20,337.14 816.72,340.08 817.23,343.19 817.75,346.42 818.26,349.74 818.78,353.10 819.29,356.46 819.81,359.78 820.32,363.01 820.84,366.12 821.35,369.06 821.87,371.80 822.38,374.31 822.90,376.55 823.41,378.50 823.93,380.13 824.44,381.42 824.96,382.35 825.47,382.91 825.99,383.10 826.50,382.91 827.02,382.35 827.53,381.42 828.05,380.13 828.56,378.50 829.08,376.55 829.59,374.31 830.11,371.80 830.62,369.06 831.14,366.12 831.65,363.01 832.17,359.78 832.68,356.46 833.20,353.10 833.71,349.74 834.23,346.42 834.74,343.19 835.26,340.08 835.77,337.14 836.29,334.40 836.80,331.89 837.32,329.65 837.83,327.70 838.35,326.07 838.86,324.78 839.38,323.85 839.89,323.29 840.40,323.10 840.92,323.29 841.43,323.85 841.95,324.78 842.46,326.07 842.98,327.70 843.49,329.65 844.01,331.89 844.52,334.40 845.04,337.14 845.55,340.08 846.07,343.19 846.58,346.42 847.10,349.74 847.61,353.10 848.13,356.46 848.64,359.78 849.16,363.01 849.67,366.12 850.19,369.06 850.70,371.80 851.22,374.31 851.73,376.55 852.25,378.50 852.76,380.13 853.28,381.42 853.79,382.35 854.31,382.91 854.82,383.10 855.34,382.91 855.85,382.35 856.37,381.42 856.88,380.13 857.40,378.50 857.91,376.55 858.43,374.31 858.94,371.80 859.46,369.06 859.97,366.12 860.49,363.01 861.00,359.78 861.52,356.46 862.03,353.10 862.55,349.74 863.06,346.42 863.58,343.19 864.09,340.08 864.61,337.14 865.12,334.40 865.64,331.89 866.15,329.65 866.67,327.70 867.18,326.07 867.70,324.78 868.21,323.85 868.73,323.29 869.24,323.10 869.75,323.29 870.27,323.85 870.78,324.78 871.30,326.07 871.81,327.70 872.33,329.65 872.84,331.89 873.36,334.40 873.87,337.14 874.39,340.08 874.90,343.19 875.42,346.42 875.93,349.74 876.45,353.10 876.96,356.46 877.48,359.78 877.99,363.01 878.51,366.12 879.02,369.06 879.54,371.80 880.05,374.31 880.57,376.55 881.08,378.50 881.60,380.13 882.11,381.42 882.63,382.35 883.14,382.91 883.66,383.10 884.17,382.91 884.69,382.35 885.20,381.42 885.72,380.13 886.23,378.50 886.75,376.55 887.26,374.31 887.78,371.80 888.29,369.06 888.81,366.12 889.32,363.01 889.84,359.78 890.35,356.46 890.87,353.10 891.38,349.74 891.90,346.42 892.41,343.19 892.93,340.08 893.44,337.14 893.96,334.40 894.47,331.89 894.99,329.65 895.50,327.70 896.02,326.07 896.53,324.78 897.05,323.85 897.56,323.29 898.08,323.10 898.59,323.29 899.10,323.85 899.62,324.78 900.13,326.07 900.65,327.70 901.16,329.65 901.68,331.89 902.19,334.40 902.71,337.14 903.22,340.08 903.74,343.19 904.25,346.42 904.77,349.74 905.28,353.10 905.80,356.46 906.31,359.78 906.83,363.01 907.34,366.12 907.86,369.06 908.37,371.80 908.89,374.31 909.40,376.55 909.92,378.50 910.43,380.13 910.95,381.42 911.46,382.35 911.98,382.91 912.49,383.10 913.01,382.91 913.52,382.35 914.04,381.42 914.55,380.13 915.07,378.50 915.58,376.55 916.10,374.31 916.61,371.80 917.13,369.06 917.64,366.12 918.16,363.01 918.67,359.78 919.19,356.46 919.70,353.10 920.22,349.74 920.73,346.42 921.25,343.19 921.76,340.08 922.28,337.14 922.79,334.40 923.31,331.89 923.82,329.65 924.34,327.70 924.85,326.07 925.37,324.78 925.88,323.85 926.40,323.29 926.91,323.10 927.42,323.29 927.94,323.85 928.45,324.78 928.97,326.07 929.48,327.70 930.00,329.65 930.51,331.89 931.03,334.40 931.54,337.14 932.06,340.08 932.57,343.19 933.09,346.42 933.60,349.74 934.12,353.10 934.63,356.46 935.15,359.78 935.66,363.01 936.18,366.12 936.69,369.06 937.21,371.80 937.72,374.31 938.24,376.55 938.75,378.50 939.27,380.13 939.78,381.42 940.30,382.35 940.81,382.91 941.33,383.10 941.84,382.91 942.36,382.35 942.87,381.42 943.39,380.13 943.90,378.50 944.42,376.55 944.93,374.31 945.45,371.80 945.96,369.06 946.48,366.12 946.99,363.01 947.51,359.78 948.02,356.46 948.54,353.10 949.05,349.74 949.57,346.42 950.08,343.19 950.60,340.08 951.11,337.14 951.63,334.40 952.14,331.89 952.66,329.65 953.17,327.70 953.69,326.07 954.20,324.78 954.72,323.85 955.23,323.29 955.75,323.10 956.26,323.29 956.77,323.85 957.29,324.78 957.80,326.07 958.32,327.70 958.83,329.65 959.35,331.89 959.86,334.40 960.38,337.14 960.89,340.08 961.41,343.19 961.92,346.42 962.44,349.74 962.95,353.10 963.47,356.46 963.98,359.78 964.50,363.01 965.01,366.12 965.53,369.06 966.04,371.80 966.56,374.31 967.07,376.55 967.59,378.50 968.10,380.13 968.62,381.42 969.13,382.35 969.65,382.91 970.16,383.10 970.68,382.91 971.19,382.35 971.71,381.42 972.22,380.13 972.74,378.50 973.25,376.55 973.77,374.31 974.28,371.80 974.80,369.06 975.31,366.12 975.83,363.01 976.34,359.78 976.86,356.46 977.37,353.10 977.89,349.74 978.40,346.42 978.92,343.19 979.43,340.08 979.95,337.14" fill="none" stroke="#e9b945" stroke-width="1.3" stroke-linejoin="round" />
<polyline points="170.02,447.04 170.54,448.32 171.05,449.25 171.57,449.81 172.08,450.00 172.60,449.81 173.11,449.25 173.63,448.32 174.14,447.04 174.66,445.42 175.17,443.49 175.69,441.26 176.20,438.76 176.72,436.03 177.23,433.10 177.75,430.01 178.26,426.79 178.78,423.49 179.29,420.15 179.81,416.81 180.32,413.51 180.84,410.29 181.35,407.20 181.87,404.27 182.38,401.54 182.90,399.04 183.41,396.81 183.93,394.88 184.44,393.26 184.96,391.98 185.47,391.05 185.99,390.49 186.50,390.30 187.01,390.49 187.53,391.05 188.04,391.98 188.56,393.26 189.07,394.88 189.59,396.81 190.10,399.04 190.62,401.54 191.13,404.27 191.65,407.20 192.16,410.29 192.68,413.51 193.19,416.81 193.71,420.15 194.22,423.49 194.74,426.79 195.25,430.01 195.77,433.10 196.28,436.03 196.80,438.76 197.31,441.26 197.83,443.49 198.34,445.42 198.86,447.04 199.37,448.32 199.89,449.25 200.40,449.81 200.92,450.00 201.43,449.81 201.95,449.25 202.46,448.32 202.98,447.04 203.49,445.42 204.01,443.49 204.52,441.26 205.04,438.76 205.55,436.03 206.07,433.10 206.58,430.01 207.10,426.79 207.61,423.49 208.13,420.15 208.64,416.81 209.16,413.51 209.67,410.29 210.19,407.20 210.70,404.27 211.22,401.54 211.73,399.04 212.25,396.81 212.76,394.88 213.28,393.26 213.79,391.98 214.31,391.05 214.82,390.49 215.34,390.30 215.85,390.49 216.36,391.05 216.88,391.98 217.39,393.26 217.91,394.88 218.42,396.81 218.94,399.04 219.45,401.54 219.97,404.27 220.48,407.20 221.00,410.29 221.51,413.51 222.03,416.81 222.54,420.15 223.06,423.49 223.57,426.79 224.09,430.01 224.60,433.10 225.12,436.03 225.63,438.76 226.15,441.26 226.66,443.49 227.18,445.42 227.69,447.04 228.21,448.32 228.72,449.25 229.24,449.81 229.75,450.00 230.27,449.81 230.78,449.25 231.30,448.32 231.81,447.04 232.33,445.42 232.84,443.49 233.36,441.26 233.87,438.76 234.39,436.03 234.90,433.10 235.42,430.01 235.93,426.79 236.45,423.49 236.96,420.15 237.48,416.81 237.99,413.51 238.51,410.29 239.02,407.20 239.54,404.27 240.05,401.54 240.57,399.04 241.08,396.81 241.60,394.88 242.11,393.26 242.63,391.98 243.14,391.05 243.66,390.49 244.17,390.30 244.68,390.49 245.20,391.05 245.71,391.98 246.23,393.26 246.74,394.88 247.26,396.81 247.77,399.04 248.29,401.54 248.80,404.27 249.32,407.20 249.83,410.29 250.35,413.51 250.86,416.81 251.38,420.15 251.89,423.49 252.41,426.79 252.92,430.01 253.44,433.10 253.95,436.03 254.47,438.76 254.98,441.26 255.50,443.49 256.01,445.42 256.53,447.04 257.04,448.32 257.56,449.25 258.07,449.81 258.59,450.00 259.10,449.81 259.62,449.25 260.13,448.32 260.65,447.04 261.16,445.42 261.68,443.49 262.19,441.26 262.71,438.76 263.22,436.03 263.74,433.10 264.25,430.01 264.77,426.79 265.28,423.49 265.80,420.15 266.31,416.81 266.83,413.51 267.34,410.29 267.86,407.20 268.37,404.27 268.89,401.54 269.40,399.04 269.92,396.81 270.43,394.88 270.95,393.26 271.46,391.98 271.98,391.05 272.49,390.49 273.00,390.30 273.52,390.49 274.03,391.05 274.55,391.98 275.06,393.26 275.58,394.88 276.09,396.81 276.61,399.04 277.12,401.54 277.64,404.27 278.15,407.20 278.67,410.29 279.18,413.51 279.70,416.81 280.21,420.15 280.73,423.49 281.24,426.79 281.76,430.01 282.27,433.10 282.79,436.03 283.30,438.76 283.82,441.26 284.33,443.49 284.85,445.42 285.36,447.04 285.88,448.32 286.39,449.25 286.91,449.81 287.42,450.00 287.94,449.81 288.45,449.25 288.97,448.32 289.48,447.04 290.00,445.42 290.51,443.49 291.03,441.26 291.54,438.76 292.06,436.03 292.57,433.10 293.09,430.01 293.60,426.79 294.12,423.49 294.63,420.15 295.15,416.81 295.66,413.51 296.18,410.29 296.69,407.20 297.21,404.27 297.72,401.54 298.24,399.04 298.75,396.81 299.27,394.88 299.78,393.26 300.30,391.98 300.81,391.05 301.33,390.49 301.84,390.30 302.35,390.45 302.87,390.91 303.38,391.66 303.90,392.70 304.41,394.02 304.93,395.59 305.44,397.40 305.96,399.43 306.47,401.65 306.99,404.03 307.50,406.54 308.02,409.15 308.53,411.83 309.05,414.55 309.56,417.27 310.08,419.95 310.59,422.56 311.11,425.07 311.62,427.45 312.14,429.67 312.65,431.70 313.17,433.51 313.68,435.08 314.20,436.40 314.71,437.44 315.23,438.19 315.74,438.65 316.26,438.80 316.77,438.68 317.29,438.32 317.80,437.72 318.32,436.90 318.83,435.86 319.35,434.61 319.86,433.18 320.38,431.57 320.89,429.82 321.41,427.93 321.92,425.94 322.44,423.87 322.95,421.75 323.47,419.60 323.98,417.45 324.50,415.33 325.01,413.26 325.53,411.27 326.04,409.38 326.56,407.63 327.07,406.02 327.59,404.59 328.10,403.34 328.62,402.30 329.13,401.48 329.65,400.88 330.16,400.52 330.68,400.40 331.19,400.52 331.70,400.88 332.22,401.48 332.73,402.30 333.25,403.34 333.76,404.59 334.28,406.02 334.79,407.63 335.31,409.38 335.82,411.27 336.34,413.26 336.85,415.33 337.37,417.45 337.88,419.60 338.40,421.75 338.91,423.87 339.43,425.94 339.94,427.93 340.46,429.82 340.97,431.57 341.49,433.18 342.00,434.61 342.52,435.86 343.03,436.90 343.55,437.72 344.06,438.32 344.58,438.68 345.09,438.80 345.61,438.68 346.12,438.32 346.64,437.72 347.15,436.90 347.67,435.86 348.18,434.61 348.70,433.18 349.21,431.57 349.73,429.82 350.24,427.93 350.76,425.94 351.27,423.87 351.79,421.75 352.30,419.60 352.82,417.45 353.33,415.33 353.85,413.26 354.36,411.27 354.88,409.38 355.39,407.63 355.91,406.02 356.42,404.59 356.94,403.34 357.45,402.30 357.97,401.48 358.48,400.88 359.00,400.52 359.51,400.40 360.02,400.52 360.54,400.88 361.05,401.48 361.57,402.30 362.08,403.34 362.60,404.59 363.11,406.02 363.63,407.63 364.14,409.38 364.66,411.27 365.17,413.26 365.69,415.33 366.20,417.45 366.72,419.60 367.23,421.75 367.75,423.87 368.26,425.94 368.78,427.93 369.29,429.82 369.81,431.57 370.32,433.18 370.84,434.61 371.35,435.86 371.87,436.90 372.38,437.72 372.90,438.32 373.41,438.68 373.93,438.80 374.44,438.68 374.96,438.32 375.47,437.72 375.99,436.90 376.50,435.86 377.02,434.61 377.53,433.18 378.05,431.57 378.56,429.82 379.08,427.93 379.59,425.94 380.11,423.87 380.62,421.75 381.14,419.60 381.65,417.45 382.17,415.33 382.68,413.26 383.20,411.27 383.71,409.38 384.23,407.63 384.74,406.02 385.26,404.59 385.77,403.34 386.29,402.30 386.80,401.48 387.32,400.88 387.83,400.52 388.35,400.40 388.86,400.52 389.37,400.88 389.89,401.48 390.40,402.30 390.92,403.34 391.43,404.59 391.95,406.02 392.46,407.63 392.98,409.38 393.49,411.27 394.01,413.26 394.52,415.33 395.04,417.45 395.55,419.60 396.07,421.75 396.58,423.87 397.10,425.94 397.61,427.93 398.13,429.82 398.64,431.57 399.16,433.18 399.67,434.61 400.19,435.86 400.70,436.90 401.22,437.72 401.73,438.32 402.25,438.68 402.76,438.80 403.28,438.68 403.79,438.32 404.31,437.72 404.82,436.90 405.34,435.86 405.85,434.61 406.37,433.18 406.88,431.57 407.40,429.82 407.91,427.93 408.43,425.94 408.94,423.87 409.46,421.75 409.97,419.60 410.49,417.45 411.00,415.33 411.52,413.26 412.03,411.27 412.55,409.38 413.06,407.63 413.58,406.02 414.09,404.59 414.61,403.34 415.12,402.30 415.64,401.48 416.15,400.88 416.67,400.52 417.18,400.40 417.69,400.52 418.21,400.88 418.72,401.48 419.24,402.30 419.75,403.34 420.27,404.59 420.78,406.02 421.30,407.63 421.81,409.38 422.33,411.27 422.84,413.26 423.36,415.33 423.87,417.45 424.39,419.60 424.90,421.75 425.42,423.87 425.93,425.94 426.45,427.93 426.96,429.82 427.48,431.57 427.99,433.18 428.51,434.61 429.02,435.86 429.54,436.90 430.05,437.72 430.57,438.32 431.08,438.68 431.60,438.80 432.11,438.68 432.63,438.32 433.14,437.72 433.66,436.90 434.17,435.86 434.69,434.61 435.20,433.18 435.72,431.57 436.23,429.82 436.75,427.93 437.26,425.94 437.78,423.87 438.29,421.75 438.81,419.60 439.32,417.45 439.84,415.33 440.35,413.26 440.87,411.27 441.38,409.38 441.90,407.63 442.41,406.02 442.93,404.59 443.44,403.34 443.96,402.30 444.47,401.48 444.99,400.88 445.50,400.52 446.01,400.40 446.53,400.52 447.04,400.88 447.56,401.48 448.07,402.30 448.59,403.34 449.10,404.59 449.62,406.02 450.13,407.63 450.65,409.38 451.16,411.27 451.68,413.26 452.19,415.33 452.71,417.45 453.22,419.60 453.74,421.75 454.25,423.87 454.77,425.94 455.28,427.93 455.80,429.82 456.31,431.57 456.83,433.18 457.34,434.61 457.86,435.86 458.37,436.90 458.89,437.72 459.40,438.32 459.92,438.68 460.43,438.80 460.95,438.68 461.46,438.32 461.98,437.72 462.49,436.90 463.01,435.86 463.52,434.61 464.04,433.18 464.55,431.57 465.07,429.82 465.58,427.93 466.10,425.94 466.61,423.87 467.13,421.75 467.64,419.60 468.16,417.45 468.67,415.33 469.19,413.26 469.70,411.27 470.22,409.38 470.73,407.63 471.25,406.02 471.76,404.59 472.28,403.34 472.79,402.30 473.31,401.48 473.82,400.88 474.34,400.52 474.85,400.40 475.36,400.52 475.88,400.88 476.39,401.48 476.91,402.30 477.42,403.34 477.94,404.59 478.45,406.02 478.97,407.63 479.48,409.38 480.00,411.27 480.51,413.26 481.03,415.33 481.54,417.45 482.06,419.60 482.57,421.75 483.09,423.87 483.60,425.94 484.12,427.93 484.63,429.82 485.15,431.57 485.66,433.18 486.18,434.61 486.69,435.86 487.21,436.90 487.72,437.72 488.24,438.32 488.75,438.68 489.27,438.80 489.78,438.66 490.30,438.23 490.81,437.53 491.33,436.56 491.84,435.33 492.36,433.86 492.87,432.17 493.39,430.27 493.90,428.20 494.42,425.98 494.93,423.63 495.45,421.19 495.96,418.69 496.48,416.15 496.99,413.61 497.51,411.11 498.02,408.67 498.54,406.32 499.05,404.10 499.57,402.03 500.08,400.13 500.60,398.44 501.11,396.97 501.63,395.74 502.14,394.77 502.66,394.07 503.17,393.64 503.69,393.50 504.20,393.68 504.71,394.21 505.23,395.09 505.74,396.30 506.26,397.83 506.77,399.66 507.29,401.77 507.80,404.14 508.32,406.72 508.83,409.49 509.35,412.42 509.86,415.46 510.38,418.59 510.89,421.75 511.41,424.91 511.92,428.04 512.44,431.08 512.95,434.01 513.47,436.78 513.98,439.36 514.50,441.73 515.01,443.84 515.53,445.67 516.04,447.20 516.56,448.41 517.07,449.29 517.59,449.82 518.10,450.00 518.62,449.81 519.13,449.25 519.65,448.32 520.16,447.04 520.68,445.42 521.19,443.49 521.71,441.26 522.22,438.76 522.74,436.03 523.25,433.10 523.77,430.01 524.28,426.79 524.80,423.49 525.31,420.15 525.83,416.81 526.34,413.51 526.86,410.29 527.37,407.20 527.89,404.27 528.40,401.54 528.92,399.04 529.43,396.81 529.95,394.88 530.46,393.26 530.98,391.98 531.49,391.05 532.01,390.49 532.52,390.30 533.03,390.49 533.55,391.05 534.06,391.98 534.58,393.26 535.09,394.88 535.61,396.81 536.12,399.04 536.64,401.54 537.15,404.27 537.67,407.20 538.18,410.29 538.70,413.51 539.21,416.81 539.73,420.15 540.24,423.49 540.76,426.79 541.27,430.01 541.79,433.10 542.30,436.03 542.82,438.76 543.33,441.26 543.85,443.49 544.36,445.42 544.88,447.04 545.39,448.32 545.91,449.25 546.42,449.81 546.94,450.00 547.45,449.81 547.97,449.25 548.48,448.32 549.00,447.04 549.51,445.42 550.03,443.49 550.54,441.26 551.06,438.76 551.57,436.03 552.09,433.10 552.60,430.01 553.12,426.79 553.63,423.49 554.15,420.15 554.66,416.81 555.18,413.51 555.69,410.29 556.21,407.20 556.72,404.27 557.24,401.54 557.75,399.04 558.27,396.81 558.78,394.88 559.30,393.26 559.81,391.98 560.33,391.05 560.84,390.49 561.36,390.30 561.87,390.49 562.38,391.05 562.90,391.98 563.41,393.26 563.93,394.88 564.44,396.81 564.96,399.04 565.47,401.54 565.99,404.27 566.50,407.20 567.02,410.29 567.53,413.51 568.05,416.81 568.56,420.15 569.08,423.49 569.59,426.79 570.11,430.01 570.62,433.10 571.14,436.03 571.65,438.76 572.17,441.26 572.68,443.49 573.20,445.42 573.71,447.04 574.23,448.32 574.74,449.25 575.26,449.81 575.77,450.00 576.29,449.81 576.80,449.25 577.32,448.32 577.83,447.04 578.35,445.42 578.86,443.49 579.38,441.26 579.89,438.76 580.41,436.03 580.92,433.10 581.44,430.01 581.95,426.79 582.47,423.49 582.98,420.15 583.50,416.81 584.01,413.51 584.53,410.29 585.04,407.20 585.56,404.27 586.07,401.54 586.59,399.04 587.10,396.81 587.62,394.88 588.13,393.26 588.65,391.98 589.16,391.05 589.68,390.49 590.19,390.30 590.70,390.49 591.22,391.05 591.73,391.98 592.25,393.26 592.76,394.88 593.28,396.81 593.79,399.04 594.31,401.54 594.82,404.27 595.34,407.20 595.85,410.29 596.37,413.51 596.88,416.81 597.40,420.15 597.91,423.49 598.43,426.79 598.94,430.01 599.46,433.10 599.97,436.03 600.49,438.76 601.00,441.26 601.52,443.49 602.03,445.42 602.55,447.04 603.06,448.32 603.58,449.25 604.09,449.81 604.61,450.00 605.12,449.81 605.64,449.25 606.15,448.32 606.67,447.04 607.18,445.42 607.70,443.49 608.21,441.26 608.73,438.76 609.24,436.03 609.76,433.10 610.27,430.01 610.79,426.79 611.30,423.49 611.82,420.15 612.33,416.81 612.85,413.51 613.36,410.29 613.88,407.20 614.39,404.27 614.91,401.54 615.42,399.04 615.94,396.81 616.45,394.88 616.97,393.26 617.48,391.98 618.00,391.05 618.51,390.49 619.03,390.30 619.54,390.49 620.05,391.05 620.57,391.98 621.08,393.26 621.60,394.88 622.11,396.81 622.63,399.04 623.14,401.54 623.66,404.27 624.17,407.20 624.69,410.29 625.20,413.51 625.72,416.81 626.23,420.15 626.75,423.49 627.26,426.79 627.78,430.01 628.29,433.10 628.81,436.03 629.32,438.76 629.84,441.26 630.35,443.49 630.87,445.42 631.38,447.04 631.90,448.32 632.41,449.25 632.93,449.81 633.44,450.00 633.96,449.81 634.47,449.25 634.99,448.32 635.50,447.04 636.02,445.42 636.53,443.49 637.05,441.26 637.56,438.76 638.08,436.03 638.59,433.10 639.11,430.01 639.62,426.79 640.14,423.49 640.65,420.15 641.17,416.81 641.68,413.51 642.20,410.29 642.71,407.20 643.23,404.27 643.74,401.54 644.26,399.04 644.77,396.81 645.29,394.88 645.80,393.26 646.32,391.98 646.83,391.05 647.35,390.49 647.86,390.30 648.37,390.49 648.89,391.05 649.40,391.98 649.92,393.26 650.43,394.88 650.95,396.81 651.46,399.04 651.98,401.54 652.49,404.27 653.01,407.20 653.52,410.29 654.04,413.51 654.55,416.81 655.07,420.15 655.58,423.49 656.10,426.79 656.61,430.01 657.13,433.10 657.64,436.03 658.16,438.76 658.67,441.26 659.19,443.49 659.70,445.42 660.22,447.04 660.73,448.32 661.25,449.25 661.76,449.81 662.28,450.00 662.79,449.81 663.31,449.25 663.82,448.32 664.34,447.04 664.85,445.42 665.37,443.49 665.88,441.26 666.40,438.76 666.91,436.03 667.43,433.10 667.94,430.01 668.46,426.79 668.97,423.49 669.49,420.15 670.00,416.81 670.52,413.51 671.03,410.29 671.55,407.20 672.06,404.27 672.58,401.54 673.09,399.04 673.61,396.81 674.12,394.88 674.64,393.26 675.15,391.98 675.67,391.05 676.18,390.49 676.69,390.30 677.21,390.49 677.72,391.05 678.24,391.98 678.75,393.26 679.27,394.88 679.78,396.81 680.30,399.04 680.81,401.54 681.33,404.27 681.84,407.20 682.36,410.29 682.87,413.51 683.39,416.81 683.90,420.15 684.42,423.49 684.93,426.79 685.45,430.01 685.96,433.10 686.48,436.03 686.99,438.76 687.51,441.26 688.02,443.49 688.54,445.42 689.05,447.04 689.57,448.32 690.08,449.25 690.60,449.81 691.11,450.00 691.63,449.81 692.14,449.25 692.66,448.32 693.17,447.04 693.69,445.42 694.20,443.49 694.72,441.26 695.23,438.76 695.75,436.03 696.26,433.10 696.78,430.01 697.29,426.79 697.81,423.49 698.32,420.15 698.84,416.81 699.35,413.51 699.87,410.29 700.38,407.20 700.90,404.27 701.41,401.54 701.93,399.04 702.44,396.81 702.96,394.88 703.47,393.26 703.99,391.98 704.50,391.05 705.02,390.49 705.53,390.30 706.04,390.49 706.56,391.05 707.07,391.98 707.59,393.26 708.10,394.88 708.62,396.81 709.13,399.04 709.65,401.54 710.16,404.27 710.68,407.20 711.19,410.29 711.71,413.51 712.22,416.81 712.74,420.15 713.25,423.49 713.77,426.79 714.28,430.01 714.80,433.10 715.31,436.03 715.83,438.76 716.34,441.26 716.86,443.49 717.37,445.42 717.89,447.04 718.40,448.32 718.92,449.25 719.43,449.81 719.95,450.00 720.46,449.81 720.98,449.25 721.49,448.32 722.01,447.04 722.52,445.42 723.04,443.49 723.55,441.26 724.07,438.76 724.58,436.03 725.10,433.10 725.61,430.01 726.13,426.79 726.64,423.49 727.16,420.15 727.67,416.81 728.19,413.51 728.70,410.29 729.22,407.20 729.73,404.27 730.25,401.54 730.76,399.04 731.28,396.81 731.79,394.88 732.31,393.26 732.82,391.98 733.34,391.05 733.85,390.49 734.37,390.30 734.88,390.49 735.39,391.05 735.91,391.98 736.42,393.26 736.94,394.88 737.45,396.81 737.97,399.04 738.48,401.54 739.00,404.27 739.51,407.20 740.03,410.29 740.54,413.51 741.06,416.81 741.57,420.15 742.09,423.49 742.60,426.79 743.12,430.01 743.63,433.10 744.15,436.03 744.66,438.76 745.18,441.26 745.69,443.49 746.21,445.42 746.72,447.04 747.24,448.32 747.75,449.25 748.27,449.81 748.78,450.00 749.30,449.81 749.81,449.25 750.33,448.32 750.84,447.04 751.36,445.42 751.87,443.49 752.39,441.26 752.90,438.76 753.42,436.03 753.93,433.10 754.45,430.01 754.96,426.79 755.48,423.49 755.99,420.15 756.51,416.81 757.02,413.51 757.54,410.29 758.05,407.20 758.57,404.27 759.08,401.54 759.60,399.04 760.11,396.81 760.63,394.88 761.14,393.26 761.66,391.98 762.17,391.05 762.69,390.49 763.20,390.30 763.71,390.49 764.23,391.05 764.74,391.98 765.26,393.26 765.77,394.88 766.29,396.81 766.80,399.04 767.32,401.54 767.83,404.27 768.35,407.20 768.86,410.29 769.38,413.51 769.89,416.81 770.41,420.15 770.92,423.49 771.44,426.79 771.95,430.01 772.47,433.10 772.98,436.03 773.50,438.76 774.01,441.26 774.53,443.49 775.04,445.42 775.56,447.04 776.07,448.32 776.59,449.25 777.10,449.81 777.62,450.00 778.13,449.81 778.65,449.25 779.16,448.32 779.68,447.04 780.19,445.42 780.71,443.49 781.22,441.26 781.74,438.76 782.25,436.03 782.77,433.10 783.28,430.01 783.80,426.79 784.31,423.49 784.83,420.15 785.34,416.81 785.86,413.51 786.37,410.29 786.89,407.20 787.40,404.27 787.92,401.54 788.43,399.04 788.95,396.81 789.46,394.88 789.98,393.26 790.49,391.98 791.01,391.05 791.52,390.49 792.03,390.30 792.55,390.49 793.06,391.05 793.58,391.98 794.09,393.26 794.61,394.88 795.12,396.81 795.64,399.04 796.15,401.54 796.67,404.27 797.18,407.20 797.70,410.29 798.21,413.51 798.73,416.81 799.24,420.15 799.76,423.49 800.27,426.79 800.79,430.01 801.30,433.10 801.82,436.03 802.33,438.76 802.85,441.26 803.36,443.49 803.88,445.42 804.39,447.04 804.91,448.32 805.42,449.25 805.94,449.81 806.45,450.00 806.97,449.81 807.48,449.25 808.00,448.32 808.51,447.04 809.03,445.42 809.54,443.49 810.06,441.26 810.57,438.76 811.09,436.03 811.60,433.10 812.12,430.01 812.63,426.79 813.15,423.49 813.66,420.15 814.18,416.81 814.69,413.51 815.21,410.29 815.72,407.20 816.24,404.27 816.75,401.54 817.27,399.04 817.78,396.81 818.30,394.88 818.81,393.26 819.33,391.98 819.84,391.05 820.36,390.49 820.87,390.30 821.38,390.49 821.90,391.05 822.41,391.98 822.93,393.26 823.44,394.88 823.96,396.81 824.47,399.04 824.99,401.54 825.50,404.27 826.02,407.20 826.53,410.29 827.05,413.51 827.56,416.81 828.08,420.15 828.59,423.49 829.11,426.79 829.62,430.01 830.14,433.10 830.65,436.03 831.17,438.76 831.68,441.26 832.20,443.49 832.71,445.42 833.23,447.04 833.74,448.32 834.26,449.25 834.77,449.81 835.29,450.00 835.80,449.81 836.32,449.25 836.83,448.32 837.35,447.04 837.86,445.42 838.38,443.49 838.89,441.26 839.41,438.76 839.92,436.03 840.44,433.10 840.95,430.01 841.47,426.79 841.98,423.49 842.50,420.15 843.01,416.81 843.53,413.51 844.04,410.29 844.56,407.20 845.07,404.27 845.59,401.54 846.10,399.04 846.62,396.81 847.13,394.88 847.65,393.26 848.16,391.98 848.68,391.05 849.19,390.49 849.71,390.30 850.22,390.49 850.73,391.05 851.25,391.98 851.76,393.26 852.28,394.88 852.79,396.81 853.31,399.04 853.82,401.54 854.34,404.27 854.85,407.20 855.37,410.29 855.88,413.51 856.40,416.81 856.91,420.15 857.43,423.49 857.94,426.79 858.46,430.01 858.97,433.10 859.49,436.03 860.00,438.76 860.52,441.26 861.03,443.49 861.55,445.42 862.06,447.04 862.58,448.32 863.09,449.25 863.61,449.81 864.12,450.00 864.64,449.81 865.15,449.25 865.67,448.32 866.18,447.04 866.70,445.42 867.21,443.49 867.73,441.26 868.24,438.76 868.76,436.03 869.27,433.10 869.79,430.01 870.30,426.79 870.82,423.49 871.33,420.15 871.85,416.81 872.36,413.51 872.88,410.29 873.39,407.20 873.91,404.27 874.42,401.54 874.94,399.04 875.45,396.81 875.97,394.88 876.48,393.26 877.00,391.98 877.51,391.05 878.03,390.49 878.54,390.30 879.05,390.49 879.57,391.05 880.08,391.98 880.60,393.26 881.11,394.88 881.63,396.81 882.14,399.04 882.66,401.54 883.17,404.27 883.69,407.20 884.20,410.29 884.72,413.51 885.23,416.81 885.75,420.15 886.26,423.49 886.78,426.79 887.29,430.01 887.81,433.10 888.32,436.03 888.84,438.76 889.35,441.26 889.87,443.49 890.38,445.42 890.90,447.04 891.41,448.32 891.93,449.25 892.44,449.81 892.96,450.00 893.47,449.81 893.99,449.25 894.50,448.32 895.02,447.04 895.53,445.42 896.05,443.49 896.56,441.26 897.08,438.76 897.59,436.03 898.11,433.10 898.62,430.01 899.14,426.79 899.65,423.49 900.17,420.15 900.68,416.81 901.20,413.51 901.71,410.29 902.23,407.20 902.74,404.27 903.26,401.54 903.77,399.04 904.29,396.81 904.80,394.88 905.32,393.26 905.83,391.98 906.35,391.05 906.86,390.49 907.38,390.30 907.89,390.49 908.40,391.05 908.92,391.98 909.43,393.26 909.95,394.88 910.46,396.81 910.98,399.04 911.49,401.54 912.01,404.27 912.52,407.20 913.04,410.29 913.55,413.51 914.07,416.81 914.58,420.15 915.10,423.49 915.61,426.79 916.13,430.01 916.64,433.10 917.16,436.03 917.67,438.76 918.19,441.26 918.70,443.49 919.22,445.42 919.73,447.04 920.25,448.32 920.76,449.25 921.28,449.81 921.79,450.00 922.31,449.81 922.82,449.25 923.34,448.32 923.85,447.04 924.37,445.42 924.88,443.49 925.40,441.26 925.91,438.76 926.43,436.03 926.94,433.10 927.46,430.01 927.97,426.79 928.49,423.49 929.00,420.15 929.52,416.81 930.03,413.51 930.55,410.29 931.06,407.20 931.58,404.27 932.09,401.54 932.61,399.04 933.12,396.81 933.64,394.88 934.15,393.26 934.67,391.98 935.18,391.05 935.70,390.49 936.21,390.30 936.72,390.49 937.24,391.05 937.75,391.98 938.27,393.26 938.78,394.88 939.30,396.81 939.81,399.04 940.33,401.54 940.84,404.27 941.36,407.20 941.87,410.29 942.39,413.51 942.90,416.81 943.42,420.15 943.93,423.49 944.45,426.79 944.96,430.01 945.48,433.10 945.99,436.03 946.51,438.76 947.02,441.26 947.54,443.49 948.05,445.42 948.57,447.04 949.08,448.32 949.60,449.25 950.11,449.81 950.63,450.00 951.14,449.81 951.66,449.25 952.17,448.32 952.69,447.04 953.20,445.42 953.72,443.49 954.23,441.26 954.75,438.76 955.26,436.03 955.78,433.10 956.29,430.01 956.81,426.79 957.32,423.49 957.84,420.15 958.35,416.81 958.87,413.51 959.38,410.29 959.90,407.20 960.41,404.27 960.93,401.54 961.44,399.04 961.96,396.81 962.47,394.88 962.99,393.26 963.50,391.98 964.02,391.05 964.53,390.49 965.05,390.30 965.56,390.49 966.07,391.05 966.59,391.98 967.10,393.26 967.62,394.88 968.13,396.81 968.65,399.04 969.16,401.54 969.68,404.27 970.19,407.20 970.71,410.29 971.22,413.51 971.74,416.81 972.25,420.15 972.77,423.49 973.28,426.79 973.80,430.01 974.31,433.10 974.83,436.03 975.34,438.76 975.86,441.26 976.37,443.49 976.89,445.42 977.40,447.04 977.92,448.32 978.43,449.25 978.95,449.81 979.46,450.00 979.98,449.81" fill="none" stroke="#e057a4" stroke-width="1.3" stroke-linejoin="round" />
<polyline points="150.00,503.30 150.50,503.48 151.00,503.68 151.50,503.91 152.00,504.15 152.50,504.40 153.00,504.66 153.50,504.93 154.00,505.20 154.50,505.46 155.00,505.73 155.50,505.99 156.00,506.25 156.50,506.51 157.00,506.78 157.50,507.04 158.00,507.30 158.50,507.57 159.00,507.83 159.50,508.10 160.00,508.36 160.50,508.62 161.00,508.88 161.50,509.12 162.00,509.34 162.50,509.54 163.00,509.72 163.50,509.86 164.00,509.96 164.50,510.02 165.00,510.03 165.50,509.99 166.00,509.90 166.50,509.75 167.00,509.55 167.50,509.29 168.00,508.98 168.50,508.62 169.00,508.23 169.50,507.80 170.00,507.35 170.50,506.87 171.00,506.40 171.50,505.92 172.00,505.45 172.50,505.01 173.00,504.59 173.50,504.22 174.00,503.88 174.50,503.59 175.00,503.36 175.50,503.18 176.00,503.05 176.50,502.98 177.00,502.97 177.50,503.00 178.00,503.08 178.50,503.20 179.00,503.36 179.50,503.54 180.00,503.76 180.50,503.99 181.00,504.23 181.50,504.49 182.00,504.75 182.50,505.02 183.00,505.28 183.50,505.55 184.00,505.81 184.50,506.08 185.00,506.34 185.50,506.60 186.00,506.86 186.50,507.12 187.00,507.39 187.50,507.65 188.00,507.92 188.50,508.19 189.00,508.45 189.50,508.71 190.00,508.96 190.50,509.19 191.00,509.41 191.50,509.60 192.00,509.77 192.50,509.90 193.00,509.99 193.50,510.03 194.00,510.03 194.50,509.97 195.00,509.86 195.50,509.69 196.00,509.47 196.50,509.19 197.00,508.87 197.50,508.50 198.00,508.09 198.50,507.65 199.00,507.19 199.50,506.72 200.00,506.24 200.50,505.76 201.00,505.30 201.50,504.87 202.00,504.47 202.50,504.10 203.00,503.78 203.50,503.51 204.00,503.29 204.50,503.13 205.00,503.02 205.50,502.97 206.00,502.97 206.50,503.02 207.00,503.11 207.50,503.25 208.00,503.41 208.50,503.61 209.00,503.83 209.50,504.07 210.00,504.32 210.50,504.58 211.00,504.84 211.50,505.10 212.00,505.37 212.50,505.64 213.00,505.90 213.50,506.16 214.00,506.42 214.50,506.69 215.00,506.95 215.50,507.21 216.00,507.48 216.50,507.74 217.00,508.01 217.50,508.27 218.00,508.54 218.50,508.79 219.00,509.04 219.50,509.27 220.00,509.48 220.50,509.66 221.00,509.81 221.50,509.93 222.00,510.01 222.50,510.03 223.00,510.01 223.50,509.94 224.00,509.81 224.50,509.62 225.00,509.38 225.50,509.09 226.00,508.75 226.50,508.37 227.00,507.95 227.50,507.50 228.00,507.04 228.50,506.56 229.00,506.08 229.50,505.61 230.00,505.16 230.50,504.73 231.00,504.34 231.50,503.99 232.00,503.69 232.50,503.43 233.00,503.23 233.50,503.09 234.00,503.00 234.50,502.97 235.00,502.98 235.50,503.05 236.00,503.15 236.50,503.30 237.00,503.48 237.50,503.68 238.00,503.91 238.50,504.15 239.00,504.40 239.50,504.66 240.00,504.93 240.50,505.19 241.00,505.46 241.50,505.72 242.00,505.99 242.50,506.25 243.00,506.51 243.50,506.77 244.00,507.04 244.50,507.30 245.00,507.56 245.50,507.83 246.00,508.10 246.50,508.36 247.00,508.62 247.50,508.87 248.00,509.11 248.50,509.34 249.00,509.54 249.50,509.71 250.00,509.86 250.50,509.96 251.00,510.02 251.50,510.03 252.00,509.99 252.50,509.90 253.00,509.75 253.50,509.55 254.00,509.29 254.50,508.98 255.00,508.63 255.50,508.23 256.00,507.80 256.50,507.35 257.00,506.88 257.50,506.40 258.00,505.92 258.50,505.46 259.00,505.01 259.50,504.60 260.00,504.22 260.50,503.88 261.00,503.60 261.50,503.36 262.00,503.18 262.50,503.05 263.00,502.98 263.50,502.97 264.00,503.00 264.50,503.08 265.00,503.20 265.50,503.35 266.00,503.54 266.50,503.75 267.00,503.98 267.50,504.23 268.00,504.49 268.50,504.75 269.00,505.01 269.50,505.28 270.00,505.55 270.50,505.81 271.00,506.07 271.50,506.34 272.00,506.60 272.50,506.86 273.00,507.12 273.50,507.39 274.00,507.65 274.50,507.92 275.00,508.18 275.50,508.45 276.00,508.70 276.50,508.95 277.00,509.19 277.50,509.41 278.00,509.60 278.50,509.77 279.00,509.90 279.50,509.98 280.00,510.03 280.50,510.03 281.00,509.97 281.50,509.86 282.00,509.69 282.50,509.47 283.00,509.19 283.50,508.87 284.00,508.50 284.50,508.09 285.00,507.66 285.50,507.20 286.00,506.72 286.50,506.24 287.00,505.77 287.50,505.31 288.00,504.87 288.50,504.47 289.00,504.10 289.50,503.78 290.00,503.51 290.50,503.29 291.00,503.13 291.50,503.03 292.00,502.97 292.50,502.97 293.00,503.02 293.50,503.11 294.00,503.25 294.50,503.41 295.00,503.61 295.50,503.83 296.00,504.06 296.50,504.31 297.00,504.57 297.50,504.84 298.00,505.10 298.50,505.37 299.00,505.63 299.50,505.90 300.00,506.16 300.50,506.42 300.90,508.60 302.00,470.00 303.00,469.50 303.50,485.00 304.50,508.00 306.90,508.20 314.00,508.30 314.86,508.03 316.04,507.63 317.44,507.16 318.96,506.73 320.52,506.41 322.00,506.30 323.45,506.44 324.96,506.79 326.50,507.24 328.04,507.74 329.55,508.18 331.00,508.50 332.39,508.72 333.74,508.92 335.06,509.07 336.37,509.16 337.68,509.14 339.00,509.00 340.34,508.67 341.70,508.15 343.06,507.53 344.41,506.91 345.72,506.37 347.00,506.00 348.21,505.80 349.37,505.70 350.50,505.69 351.63,505.74 352.79,505.85 354.00,506.00 355.32,506.23 356.74,506.57 358.19,506.97 359.59,507.37 360.89,507.73 362.00,508.00 362.84,508.20 363.44,508.39 363.94,508.53 364.44,508.61 365.09,508.61 366.00,508.50 367.21,508.23 368.63,507.80 370.19,507.28 371.81,506.76 373.44,506.31 375.00,506.00 376.53,505.83 378.11,505.74 379.69,505.72 381.22,505.76 382.67,505.86 384.00,506.00 385.17,506.24 386.22,506.59 387.19,507.00 388.11,507.41 389.03,507.76 390.00,508.00 390.99,508.14 391.96,508.24 392.94,508.28 393.93,508.26 394.94,508.17 396.00,508.00 397.10,507.70 398.22,507.26 399.38,506.75 400.56,506.24 401.76,505.80 403.00,505.50 404.29,505.33 405.63,505.24 407.00,505.22 408.37,505.26 409.71,505.36 411.00,505.50 412.19,505.74 413.30,506.10 414.38,506.51 415.48,506.92 416.67,507.27 418.00,507.50 419.50,507.62 421.15,507.68 422.88,507.68 424.63,507.62 426.36,507.49 428.00,507.30 429.59,506.99 431.19,506.54 432.75,506.02 434.26,505.52 435.69,505.09 437.00,504.80 438.20,504.66 439.31,504.60 440.34,504.61 441.30,504.69 442.18,504.83 443.00,505.00 443.65,505.26 444.11,505.64 444.51,506.06 444.95,506.49 445.58,506.85 446.50,507.10 447.81,507.25 449.43,507.34 451.23,507.38 453.07,507.36 454.84,507.26 456.40,507.10 457.76,506.81 459.01,506.39 460.19,505.90 461.32,505.41 462.41,504.99 463.50,504.70 464.57,504.54 465.60,504.44 466.61,504.41 467.59,504.45 468.55,504.54 469.50,504.70 470.37,504.96 471.14,505.35 471.89,505.80 472.71,506.25 473.68,506.64 474.90,506.90 476.46,507.05 478.32,507.14 480.33,507.18 482.36,507.14 484.26,507.05 485.90,506.90 487.24,506.63 488.40,506.24 489.42,505.78 490.39,505.33 491.36,504.95 492.40,504.70 493.56,504.60 494.81,504.61 496.07,504.68 497.24,504.79 498.25,504.91 499.00,505.00 499.45,505.08 499.67,505.17 499.71,505.27 499.67,505.36 499.60,505.44 499.60,505.50 499.60,505.50 502.20,458.00 505.50,467.30 507.70,505.50 507.70,505.50 508.08,506.33 508.56,507.57 509.16,508.99 509.85,510.36 510.63,511.44 511.50,512.00 512.51,511.93 513.69,511.40 514.95,510.57 516.24,509.65 517.48,508.80 518.60,508.20 519.57,507.73 520.42,507.21 521.23,506.76 522.06,506.51 522.96,506.59 524.00,507.10 525.26,508.34 526.69,510.25 528.20,512.49 529.69,514.68 531.06,516.47 532.20,517.50 533.08,517.57 533.77,516.94 534.34,515.91 534.85,514.78 535.38,513.84 536.00,513.40 536.67,513.57 537.34,514.15 538.02,514.92 538.75,515.69 539.53,516.25 540.40,516.40 541.37,516.06 542.42,515.38 543.54,514.49 544.69,513.53 545.85,512.66 547.00,512.00 548.15,511.46 549.32,510.92 550.50,510.45 551.68,510.15 552.85,510.10 554.00,510.40 555.15,511.28 556.31,512.73 557.46,514.44 558.58,516.09 559.63,517.38 560.60,518.00 561.46,517.76 562.23,516.88 562.94,515.64 563.61,514.32 564.29,513.21 565.00,512.60 565.64,512.65 566.17,513.16 566.69,513.88 567.33,514.56 568.20,514.95 569.40,514.80 571.07,513.87 573.15,512.30 575.45,510.45 577.80,508.65 580.01,507.25 581.90,506.60 583.49,506.94 584.92,508.06 586.21,509.58 587.39,511.12 588.48,512.32 589.50,512.80 590.41,512.39 591.17,511.35 591.85,509.97 592.48,508.53 593.12,507.31 593.80,506.60 594.51,506.53 595.21,506.90 595.91,507.49 596.63,508.10 597.38,508.51 598.20,508.50 599.08,508.00 600.00,507.16 600.96,506.12 601.96,505.02 602.97,504.00 604.00,503.20 605.05,502.53 606.12,501.87 607.21,501.28 608.33,500.86 609.46,500.67 610.60,500.80 611.79,501.46 613.03,502.63 614.29,504.04 615.53,505.41 616.71,506.49 617.80,507.00 618.80,506.79 619.74,506.03 620.62,504.98 621.46,503.87 622.25,502.93 623.00,502.40 623.63,502.40 624.13,502.76 624.58,503.29 625.08,503.81 625.72,504.14 626.60,504.10 627.80,503.58 629.28,502.71 630.90,501.64 632.53,500.55 634.04,499.58 635.30,498.90 636.25,498.44 636.98,498.07 637.59,497.82 638.18,497.74 638.85,497.89 639.70,498.30 640.78,499.18 642.03,500.54 643.36,502.11 644.68,503.65 645.92,504.90 647.00,505.60 647.89,505.61 648.65,505.11 649.33,504.31 649.97,503.45 650.61,502.74 651.30,502.40 652.01,502.53 652.71,502.96 653.41,503.55 654.13,504.14 654.88,504.57 655.70,504.70 656.57,504.46 657.47,503.97 658.42,503.32 659.40,502.62 660.43,501.98 661.50,501.50 662.63,501.08 663.83,500.60 665.06,500.19 666.32,499.93 667.57,499.93 668.80,500.30 670.05,501.25 671.34,502.73 672.62,504.48 673.86,506.20 675.00,507.64 676.00,508.50 676.81,508.65 677.47,508.27 678.03,507.60 678.55,506.86 679.09,506.29 679.70,506.10 680.34,506.42 680.95,507.09 681.58,507.93 682.27,508.73 683.06,509.32 684.00,509.50 685.14,509.17 686.47,508.46 687.90,507.54 689.35,506.56 690.75,505.69 692.00,505.10 693.10,504.70 694.10,504.36 695.04,504.12 695.96,504.06 696.90,504.23 697.90,504.70 698.99,505.68 700.16,507.16 701.34,508.87 702.50,510.56 703.57,511.95 704.50,512.80 705.26,512.96 705.87,512.62 706.39,511.99 706.90,511.29 707.45,510.72 708.10,510.50 708.85,510.73 709.64,511.26 710.47,511.93 711.34,512.56 712.25,513.01 713.20,513.10 714.19,512.76 715.23,512.10 716.31,511.25 717.42,510.33 718.55,509.48 719.70,508.80 720.88,508.21 722.10,507.58 723.34,507.01 724.59,506.59 725.81,506.42 727.00,506.60 728.17,507.33 729.34,508.57 730.49,510.06 731.60,511.54 732.64,512.74 733.60,513.40 734.46,513.38 735.23,512.87 735.93,512.09 736.60,511.24 737.24,510.54 737.90,510.20 738.51,510.34 739.04,510.80 739.56,511.42 740.12,512.01 740.78,512.39 741.60,512.40 742.62,511.93 743.80,511.11 745.08,510.09 746.39,509.02 747.69,508.04 748.90,507.30 750.02,506.73 751.10,506.20 752.15,505.77 753.20,505.49 754.28,505.41 755.40,505.60 756.61,506.24 757.89,507.32 759.19,508.61 760.46,509.87 761.65,510.88 762.70,511.40 763.60,511.31 764.38,510.77 765.08,509.97 765.72,509.11 766.35,508.39 767.00,508.00 767.59,508.06 768.09,508.43 768.58,508.93 769.12,509.40 769.80,509.64 770.70,509.50 771.92,508.83 773.41,507.76 775.04,506.47 776.68,505.15 778.18,504.00 779.40,503.20 780.27,502.72 780.87,502.41 781.34,502.26 781.80,502.27 782.37,502.45 783.20,502.80 784.34,503.49 785.71,504.55 787.21,505.78 788.71,506.96 790.11,507.91 791.30,508.40 792.27,508.32 793.10,507.79 793.82,507.02 794.49,506.21 795.14,505.53 795.80,505.20 796.42,505.31 796.96,505.73 797.47,506.29 798.02,506.84 798.68,507.19 799.50,507.20 800.54,506.77 801.74,506.02 803.06,505.09 804.40,504.10 805.70,503.19 806.90,502.50 807.96,501.94 808.95,501.38 809.90,500.90 810.85,500.58 811.84,500.49 812.90,500.70 814.10,501.40 815.40,502.57 816.74,503.96 818.06,505.36 819.26,506.51 820.30,507.20 821.12,507.31 821.78,507.01 822.33,506.48 822.84,505.89 823.38,505.40 824.00,505.20 824.67,505.38 825.33,505.81 826.02,506.35 826.76,506.86 827.57,507.19 828.50,507.20 829.58,506.80 830.81,506.09 832.11,505.19 833.44,504.26 834.72,503.42 835.90,502.80 836.95,502.34 837.92,501.90 838.85,501.56 839.78,501.37 840.75,501.39 841.80,501.70 843.00,502.46 844.32,503.66 845.68,505.07 847.00,506.48 848.20,507.66 849.20,508.40 849.94,508.59 850.47,508.40 850.88,507.98 851.25,507.50 851.66,507.12 852.20,507.00 852.83,507.24 853.48,507.71 854.18,508.29 854.93,508.83 855.76,509.18 856.70,509.20 857.78,508.79 859.01,508.06 860.31,507.13 861.64,506.17 862.92,505.31 864.10,504.70 865.14,504.28 866.09,503.91 867.00,503.66 867.92,503.55 868.90,503.65 870.00,504.00 871.29,504.78 872.73,505.99 874.24,507.39 875.71,508.78 877.07,509.92 878.20,510.60 879.08,510.69 879.77,510.34 880.33,509.74 880.83,509.10 881.34,508.58 881.90,508.40 882.46,508.65 882.97,509.22 883.47,509.92 884.03,510.58 884.72,511.03 885.60,511.10 886.74,510.68 888.11,509.89 889.61,508.89 891.12,507.84 892.55,506.89 893.80,506.20 894.81,505.70 895.65,505.24 896.41,504.89 897.16,504.70 898.00,504.72 899.00,505.00 900.23,505.73 901.64,506.89 903.14,508.26 904.61,509.62 905.97,510.74 907.10,511.40 907.98,511.48 908.69,511.15 909.28,510.58 909.80,509.95 910.32,509.43 910.90,509.20 911.48,509.36 912.00,509.80 912.52,510.35 913.10,510.86 913.77,511.16 914.60,511.10 915.64,510.57 916.85,509.68 918.16,508.58 919.51,507.44 920.81,506.43 922.00,505.70 923.05,505.21 924.02,504.81 924.94,504.54 925.87,504.41 926.84,504.46 927.90,504.70 929.10,505.29 930.42,506.23 931.79,507.35 933.12,508.46 934.35,509.37 935.40,509.90 936.23,509.96 936.89,509.67 937.44,509.19 937.96,508.67 938.49,508.26 939.10,508.10 939.75,508.32 940.37,508.81 941.02,509.41 941.73,509.95 942.54,510.27 943.50,510.20 944.68,509.62 946.06,508.65 947.55,507.45 949.05,506.21 950.46,505.10 951.70,504.30 952.72,503.77 953.60,503.34 954.39,503.06 955.17,502.92 955.98,502.96 956.90,503.20 957.96,503.78 959.11,504.71 960.30,505.82 961.48,506.92 962.60,507.84 963.60,508.40 964.45,508.52 965.18,508.34 965.84,507.98 966.50,507.56 967.20,507.19 968.00,507.00 968.98,507.00 970.10,507.10 971.27,507.26 972.39,507.44 973.33,507.60 974.00,507.70" fill="none" stroke="#3d68d2" stroke-width="1.25" stroke-linejoin="round" />
</g>
<rect x="375.0" y="116" width="2.1" height="414" fill="#f24848" />
<text x="2.3" y="129.70" font-size="9.6" font-weight="bold" fill="#1ea3b5" stroke="#1ea3b5" stroke-width="0.35" font-family="Liberation Serif">I</text>
<text x="6.50" y="129.70" font-size="9.86" fill="#1ea3b5" stroke="#1ea3b5" stroke-width="0.35" font-weight="bold" textLength="4.40" lengthAdjust="spacingAndGlyphs">a</text>
<text x="95.60" y="129.40" font-size="9.13" fill="#3444cc" stroke="#3444cc" stroke-width="0.1" font-weight="bold" textLength="39.80" lengthAdjust="spacingAndGlyphs">-22.0274</text>
<text x="138.40" y="129.40" font-size="9.13" fill="#3444cc" stroke="#3444cc" stroke-width="0.1" font-weight="bold" textLength="6.00" lengthAdjust="spacingAndGlyphs">A</text>
<text x="1.70" y="141.90" font-size="8.26" fill="#1e2a7e" stroke="#1e2a7e" stroke-width="0.2" textLength="17.30" lengthAdjust="spacingAndGlyphs">Max:</text>
<text x="97.30" y="141.90" font-size="8.26" fill="#1e2a7e" stroke="#1e2a7e" stroke-width="0.2" textLength="28.40" lengthAdjust="spacingAndGlyphs">24.5276</text>
<text x="129.80" y="141.90" font-size="8.26" fill="#1e2a7e" stroke="#1e2a7e" stroke-width="0.2" textLength="5.00" lengthAdjust="spacingAndGlyphs">A</text>
<text x="1.70" y="152.80" font-size="8.26" fill="#1e2a7e" stroke="#1e2a7e" stroke-width="0.2" textLength="15.00" lengthAdjust="spacingAndGlyphs">Min:</text>
<text x="95.30" y="152.80" font-size="8.26" fill="#1e2a7e" stroke="#1e2a7e" stroke-width="0.2" textLength="30.40" lengthAdjust="spacingAndGlyphs">-48.6025</text>
<text x="129.80" y="152.80" font-size="8.26" fill="#1e2a7e" stroke="#1e2a7e" stroke-width="0.2" textLength="5.00" lengthAdjust="spacingAndGlyphs">A</text>
<text x="1.70" y="163.70" font-size="8.26" fill="#1e2a7e" stroke="#1e2a7e" stroke-width="0.2" textLength="17.00" lengthAdjust="spacingAndGlyphs">RMS:</text>
<text x="97.30" y="163.70" font-size="8.26" fill="#1e2a7e" stroke="#1e2a7e" stroke-width="0.2" textLength="28.40" lengthAdjust="spacingAndGlyphs">18.2254</text>
<text x="129.80" y="163.70" font-size="8.26" fill="#1e2a7e" stroke="#1e2a7e" stroke-width="0.2" textLength="5.00" lengthAdjust="spacingAndGlyphs">A</text>
<text x="1.70" y="174.60" font-size="8.26" fill="#1e2a7e" stroke="#1e2a7e" stroke-width="0.2" textLength="22.00" lengthAdjust="spacingAndGlyphs">A(50):</text>
<text x="97.30" y="174.60" font-size="8.26" fill="#1e2a7e" stroke="#1e2a7e" stroke-width="0.2" textLength="28.40" lengthAdjust="spacingAndGlyphs">16.2035</text>
<text x="129.80" y="174.60" font-size="8.26" fill="#1e2a7e" stroke="#1e2a7e" stroke-width="0.2" textLength="5.00" lengthAdjust="spacingAndGlyphs">A</text>
<text x="2.3" y="197.10" font-size="9.6" font-weight="bold" fill="#b3264a" stroke="#b3264a" stroke-width="0.35" font-family="Liberation Serif">I</text>
<text x="6.50" y="197.10" font-size="9.86" fill="#b3264a" stroke="#b3264a" stroke-width="0.35" font-weight="bold" textLength="4.40" lengthAdjust="spacingAndGlyphs">b</text>
<text x="95.60" y="196.80" font-size="9.13" fill="#3444cc" stroke="#3444cc" stroke-width="0.1" font-weight="bold" textLength="39.80" lengthAdjust="spacingAndGlyphs">-2.15532</text>
<text x="138.40" y="196.80" font-size="9.13" fill="#3444cc" stroke="#3444cc" stroke-width="0.1" font-weight="bold" textLength="6.00" lengthAdjust="spacingAndGlyphs">A</text>
<text x="1.70" y="209.30" font-size="8.26" fill="#1e2a7e" stroke="#1e2a7e" stroke-width="0.2" textLength="17.30" lengthAdjust="spacingAndGlyphs">Max:</text>
<text x="97.30" y="209.30" font-size="8.26" fill="#1e2a7e" stroke="#1e2a7e" stroke-width="0.2" textLength="28.40" lengthAdjust="spacingAndGlyphs">31.6832</text>
<text x="129.80" y="209.30" font-size="8.26" fill="#1e2a7e" stroke="#1e2a7e" stroke-width="0.2" textLength="5.00" lengthAdjust="spacingAndGlyphs">A</text>
<text x="1.70" y="220.20" font-size="8.26" fill="#1e2a7e" stroke="#1e2a7e" stroke-width="0.2" textLength="15.00" lengthAdjust="spacingAndGlyphs">Min:</text>
<text x="95.30" y="220.20" font-size="8.26" fill="#1e2a7e" stroke="#1e2a7e" stroke-width="0.2" textLength="26.10" lengthAdjust="spacingAndGlyphs">-23.105</text>
<text x="125.50" y="220.20" font-size="8.26" fill="#1e2a7e" stroke="#1e2a7e" stroke-width="0.2" textLength="5.00" lengthAdjust="spacingAndGlyphs">A</text>
<text x="1.70" y="231.10" font-size="8.26" fill="#1e2a7e" stroke="#1e2a7e" stroke-width="0.2" textLength="17.00" lengthAdjust="spacingAndGlyphs">RMS:</text>
<text x="97.30" y="231.10" font-size="8.26" fill="#1e2a7e" stroke="#1e2a7e" stroke-width="0.2" textLength="24.10" lengthAdjust="spacingAndGlyphs">17.523</text>
<text x="125.50" y="231.10" font-size="8.26" fill="#1e2a7e" stroke="#1e2a7e" stroke-width="0.2" textLength="5.00" lengthAdjust="spacingAndGlyphs">A</text>
<text x="1.70" y="242.00" font-size="8.26" fill="#1e2a7e" stroke="#1e2a7e" stroke-width="0.2" textLength="22.00" lengthAdjust="spacingAndGlyphs">A(50):</text>
<text x="97.30" y="242.00" font-size="8.26" fill="#1e2a7e" stroke="#1e2a7e" stroke-width="0.2" textLength="28.40" lengthAdjust="spacingAndGlyphs">17.3236</text>
<text x="129.80" y="242.00" font-size="8.26" fill="#1e2a7e" stroke="#1e2a7e" stroke-width="0.2" textLength="5.00" lengthAdjust="spacingAndGlyphs">A</text>
<text x="2.3" y="264.50" font-size="9.6" font-weight="bold" fill="#e43cef" stroke="#e43cef" stroke-width="0.35" font-family="Liberation Serif">I</text>
<text x="6.50" y="264.50" font-size="9.86" fill="#e43cef" stroke="#e43cef" stroke-width="0.35" font-weight="bold" textLength="4.40" lengthAdjust="spacingAndGlyphs">c</text>
<text x="97.80" y="264.20" font-size="9.13" fill="#3444cc" stroke="#3444cc" stroke-width="0.1" font-weight="bold" textLength="37.60" lengthAdjust="spacingAndGlyphs">28.8813</text>
<text x="138.40" y="264.20" font-size="9.13" fill="#3444cc" stroke="#3444cc" stroke-width="0.1" font-weight="bold" textLength="6.00" lengthAdjust="spacingAndGlyphs">A</text>
<text x="1.70" y="276.70" font-size="8.26" fill="#1e2a7e" stroke="#1e2a7e" stroke-width="0.2" textLength="17.30" lengthAdjust="spacingAndGlyphs">Max:</text>
<text x="97.30" y="276.70" font-size="8.26" fill="#1e2a7e" stroke="#1e2a7e" stroke-width="0.2" textLength="24.10" lengthAdjust="spacingAndGlyphs">41.102</text>
<text x="125.50" y="276.70" font-size="8.26" fill="#1e2a7e" stroke="#1e2a7e" stroke-width="0.2" textLength="5.00" lengthAdjust="spacingAndGlyphs">A</text>
<text x="1.70" y="287.60" font-size="8.26" fill="#1e2a7e" stroke="#1e2a7e" stroke-width="0.2" textLength="15.00" lengthAdjust="spacingAndGlyphs">Min:</text>
<text x="95.30" y="287.60" font-size="8.26" fill="#1e2a7e" stroke="#1e2a7e" stroke-width="0.2" textLength="30.40" lengthAdjust="spacingAndGlyphs">-24.2474</text>
<text x="129.80" y="287.60" font-size="8.26" fill="#1e2a7e" stroke="#1e2a7e" stroke-width="0.2" textLength="5.00" lengthAdjust="spacingAndGlyphs">A</text>
<text x="1.70" y="298.50" font-size="8.26" fill="#1e2a7e" stroke="#1e2a7e" stroke-width="0.2" textLength="17.00" lengthAdjust="spacingAndGlyphs">RMS:</text>
<text x="97.30" y="298.50" font-size="8.26" fill="#1e2a7e" stroke="#1e2a7e" stroke-width="0.2" textLength="28.40" lengthAdjust="spacingAndGlyphs">19.1176</text>
<text x="129.80" y="298.50" font-size="8.26" fill="#1e2a7e" stroke="#1e2a7e" stroke-width="0.2" textLength="5.00" lengthAdjust="spacingAndGlyphs">A</text>
<text x="1.70" y="309.40" font-size="8.26" fill="#1e2a7e" stroke="#1e2a7e" stroke-width="0.2" textLength="22.00" lengthAdjust="spacingAndGlyphs">A(50):</text>
<text x="97.30" y="309.40" font-size="8.26" fill="#1e2a7e" stroke="#1e2a7e" stroke-width="0.2" textLength="28.40" lengthAdjust="spacingAndGlyphs">17.7628</text>
<text x="129.80" y="309.40" font-size="8.26" fill="#1e2a7e" stroke="#1e2a7e" stroke-width="0.2" textLength="5.00" lengthAdjust="spacingAndGlyphs">A</text>
<text x="2.40" y="331.90" font-size="9.86" fill="#dca524" stroke="#dca524" stroke-width="0.3" font-weight="bold" textLength="16.50" lengthAdjust="spacingAndGlyphs">Uab</text>
<text x="97.80" y="331.60" font-size="9.13" fill="#3444cc" stroke="#3444cc" stroke-width="0.1" font-weight="bold" textLength="37.60" lengthAdjust="spacingAndGlyphs">78.2858</text>
<text x="138.40" y="331.60" font-size="9.13" fill="#3444cc" stroke="#3444cc" stroke-width="0.1" font-weight="bold" textLength="6.00" lengthAdjust="spacingAndGlyphs">В</text>
<text x="1.70" y="344.10" font-size="8.26" fill="#1e2a7e" stroke="#1e2a7e" stroke-width="0.2" textLength="17.30" lengthAdjust="spacingAndGlyphs">Max:</text>
<text x="97.30" y="344.10" font-size="8.26" fill="#1e2a7e" stroke="#1e2a7e" stroke-width="0.2" textLength="28.40" lengthAdjust="spacingAndGlyphs">146.688</text>
<text x="129.80" y="344.10" font-size="8.26" fill="#1e2a7e" stroke="#1e2a7e" stroke-width="0.2" textLength="5.00" lengthAdjust="spacingAndGlyphs">В</text>
<text x="1.70" y="355.00" font-size="8.26" fill="#1e2a7e" stroke="#1e2a7e" stroke-width="0.2" textLength="15.00" lengthAdjust="spacingAndGlyphs">Min:</text>
<text x="95.30" y="355.00" font-size="8.26" fill="#1e2a7e" stroke="#1e2a7e" stroke-width="0.2" textLength="30.40" lengthAdjust="spacingAndGlyphs">-146.474</text>
<text x="129.80" y="355.00" font-size="8.26" fill="#1e2a7e" stroke="#1e2a7e" stroke-width="0.2" textLength="5.00" lengthAdjust="spacingAndGlyphs">В</text>
<text x="1.70" y="365.90" font-size="8.26" fill="#1e2a7e" stroke="#1e2a7e" stroke-width="0.2" textLength="17.00" lengthAdjust="spacingAndGlyphs">RMS:</text>
<text x="97.30" y="365.90" font-size="8.26" fill="#1e2a7e" stroke="#1e2a7e" stroke-width="0.2" textLength="28.40" lengthAdjust="spacingAndGlyphs">65.6889</text>
<text x="129.80" y="365.90" font-size="8.26" fill="#1e2a7e" stroke="#1e2a7e" stroke-width="0.2" textLength="5.00" lengthAdjust="spacingAndGlyphs">В</text>
<text x="1.70" y="376.80" font-size="8.26" fill="#1e2a7e" stroke="#1e2a7e" stroke-width="0.2" textLength="22.00" lengthAdjust="spacingAndGlyphs">A(50):</text>
<text x="97.30" y="376.80" font-size="8.26" fill="#1e2a7e" stroke="#1e2a7e" stroke-width="0.2" textLength="28.40" lengthAdjust="spacingAndGlyphs">65.6564</text>
<text x="129.80" y="376.80" font-size="8.26" fill="#1e2a7e" stroke="#1e2a7e" stroke-width="0.2" textLength="5.00" lengthAdjust="spacingAndGlyphs">В</text>
<text x="2.40" y="399.30" font-size="9.86" fill="#cf2a86" stroke="#cf2a86" stroke-width="0.3" font-weight="bold" textLength="16.30" lengthAdjust="spacingAndGlyphs">Ubc</text>
<text x="95.60" y="399.00" font-size="9.13" fill="#3444cc" stroke="#3444cc" stroke-width="0.1" font-weight="bold" textLength="39.80" lengthAdjust="spacingAndGlyphs">-80.7634</text>
<text x="138.40" y="399.00" font-size="9.13" fill="#3444cc" stroke="#3444cc" stroke-width="0.1" font-weight="bold" textLength="6.00" lengthAdjust="spacingAndGlyphs">В</text>
<text x="1.70" y="411.50" font-size="8.26" fill="#1e2a7e" stroke="#1e2a7e" stroke-width="0.2" textLength="17.30" lengthAdjust="spacingAndGlyphs">Max:</text>
<text x="97.30" y="411.50" font-size="8.26" fill="#1e2a7e" stroke="#1e2a7e" stroke-width="0.2" textLength="28.40" lengthAdjust="spacingAndGlyphs">146.634</text>
<text x="129.80" y="411.50" font-size="8.26" fill="#1e2a7e" stroke="#1e2a7e" stroke-width="0.2" textLength="5.00" lengthAdjust="spacingAndGlyphs">В</text>
<text x="1.70" y="422.40" font-size="8.26" fill="#1e2a7e" stroke="#1e2a7e" stroke-width="0.2" textLength="15.00" lengthAdjust="spacingAndGlyphs">Min:</text>
<text x="95.30" y="422.40" font-size="8.26" fill="#1e2a7e" stroke="#1e2a7e" stroke-width="0.2" textLength="30.40" lengthAdjust="spacingAndGlyphs">-146.608</text>
<text x="129.80" y="422.40" font-size="8.26" fill="#1e2a7e" stroke="#1e2a7e" stroke-width="0.2" textLength="5.00" lengthAdjust="spacingAndGlyphs">В</text>
<text x="1.70" y="433.30" font-size="8.26" fill="#1e2a7e" stroke="#1e2a7e" stroke-width="0.2" textLength="17.00" lengthAdjust="spacingAndGlyphs">RMS:</text>
<text x="97.30" y="433.30" font-size="8.26" fill="#1e2a7e" stroke="#1e2a7e" stroke-width="0.2" textLength="28.40" lengthAdjust="spacingAndGlyphs">65.9138</text>
<text x="129.80" y="433.30" font-size="8.26" fill="#1e2a7e" stroke="#1e2a7e" stroke-width="0.2" textLength="5.00" lengthAdjust="spacingAndGlyphs">В</text>
<text x="1.70" y="444.20" font-size="8.26" fill="#1e2a7e" stroke="#1e2a7e" stroke-width="0.2" textLength="22.00" lengthAdjust="spacingAndGlyphs">A(50):</text>
<text x="97.30" y="444.20" font-size="8.26" fill="#1e2a7e" stroke="#1e2a7e" stroke-width="0.2" textLength="28.40" lengthAdjust="spacingAndGlyphs">65.8768</text>
<text x="129.80" y="444.20" font-size="8.26" fill="#1e2a7e" stroke="#1e2a7e" stroke-width="0.2" textLength="5.00" lengthAdjust="spacingAndGlyphs">В</text>
<text x="2.40" y="466.70" font-size="9.86" fill="#2b49c6" stroke="#2b49c6" stroke-width="0.3" font-weight="bold" textLength="18.00" lengthAdjust="spacingAndGlyphs">3U0</text>
<text x="95.60" y="466.40" font-size="9.13" fill="#3444cc" stroke="#3444cc" stroke-width="0.1" font-weight="bold" textLength="39.80" lengthAdjust="spacingAndGlyphs">-13.3207</text>
<text x="138.40" y="466.40" font-size="9.13" fill="#3444cc" stroke="#3444cc" stroke-width="0.1" font-weight="bold" textLength="11.50" lengthAdjust="spacingAndGlyphs">мВ</text>
<text x="1.70" y="478.90" font-size="8.26" fill="#1e2a7e" stroke="#1e2a7e" stroke-width="0.2" textLength="17.30" lengthAdjust="spacingAndGlyphs">Max:</text>
<text x="97.30" y="478.90" font-size="8.26" fill="#1e2a7e" stroke="#1e2a7e" stroke-width="0.2" textLength="28.40" lengthAdjust="spacingAndGlyphs">16.2513</text>
<text x="129.80" y="478.90" font-size="8.26" fill="#1e2a7e" stroke="#1e2a7e" stroke-width="0.2" textLength="5.00" lengthAdjust="spacingAndGlyphs">В</text>
<text x="1.70" y="489.80" font-size="8.26" fill="#1e2a7e" stroke="#1e2a7e" stroke-width="0.2" textLength="15.00" lengthAdjust="spacingAndGlyphs">Min:</text>
<text x="95.30" y="489.80" font-size="8.26" fill="#1e2a7e" stroke="#1e2a7e" stroke-width="0.2" textLength="30.40" lengthAdjust="spacingAndGlyphs">-3.70316</text>
<text x="129.80" y="489.80" font-size="8.26" fill="#1e2a7e" stroke="#1e2a7e" stroke-width="0.2" textLength="5.00" lengthAdjust="spacingAndGlyphs">В</text>
<text x="1.70" y="500.70" font-size="8.26" fill="#1e2a7e" stroke="#1e2a7e" stroke-width="0.2" textLength="17.00" lengthAdjust="spacingAndGlyphs">RMS:</text>
<text x="97.30" y="500.70" font-size="8.26" fill="#1e2a7e" stroke="#1e2a7e" stroke-width="0.2" textLength="28.40" lengthAdjust="spacingAndGlyphs">455.687</text>
<text x="129.80" y="500.70" font-size="8.26" fill="#1e2a7e" stroke="#1e2a7e" stroke-width="0.2" textLength="10.50" lengthAdjust="spacingAndGlyphs">мВ</text>
<text x="1.70" y="511.60" font-size="8.26" fill="#1e2a7e" stroke="#1e2a7e" stroke-width="0.2" textLength="22.00" lengthAdjust="spacingAndGlyphs">A(50):</text>
<text x="97.30" y="511.60" font-size="8.26" fill="#1e2a7e" stroke="#1e2a7e" stroke-width="0.2" textLength="28.40" lengthAdjust="spacingAndGlyphs">244.466</text>
<text x="129.80" y="511.60" font-size="8.26" fill="#1e2a7e" stroke="#1e2a7e" stroke-width="0.2" textLength="10.50" lengthAdjust="spacingAndGlyphs">мВ</text>
<rect x="173" y="522.7" width="801.2" height="1.4" fill="#3c3c3c" />
<rect x="171" y="520" width="2" height="3" fill="#a3a3a3" />
<rect x="170.7" y="522.6" width="1.6" height="7.5" fill="#3c3c3c" />
<rect x="188.83200000000002" y="522.6" width="1.4" height="4.2" fill="#3c3c3c" />
<rect x="206.864" y="522.6" width="1.4" height="5.5" fill="#3c3c3c" />
<rect x="224.89600000000002" y="522.6" width="1.4" height="4.2" fill="#3c3c3c" />
<rect x="242.82799999999997" y="522.6" width="1.6" height="7.5" fill="#3c3c3c" />
<rect x="260.96" y="522.6" width="1.4" height="4.2" fill="#3c3c3c" />
<rect x="278.992" y="522.6" width="1.4" height="5.5" fill="#3c3c3c" />
<rect x="297.024" y="522.6" width="1.4" height="4.2" fill="#3c3c3c" />
<rect x="314.95599999999996" y="522.6" width="1.6" height="7.5" fill="#3c3c3c" />
<rect x="333.088" y="522.6" width="1.4" height="4.2" fill="#3c3c3c" />
<rect x="351.12" y="522.6" width="1.4" height="5.5" fill="#3c3c3c" />
<rect x="369.152" y="522.6" width="1.4" height="4.2" fill="#3c3c3c" />
<rect x="387.084" y="522.6" width="1.6" height="7.5" fill="#3c3c3c" />
<rect x="405.216" y="522.6" width="1.4" height="4.2" fill="#3c3c3c" />
<rect x="423.248" y="522.6" width="1.4" height="5.5" fill="#3c3c3c" />
<rect x="441.28000000000003" y="522.6" width="1.4" height="4.2" fill="#3c3c3c" />
<rect x="459.212" y="522.6" width="1.6" height="7.5" fill="#3c3c3c" />
<rect x="477.344" y="522.6" width="1.4" height="4.2" fill="#3c3c3c" />
<rect x="495.37600000000003" y="522.6" width="1.4" height="5.5" fill="#3c3c3c" />
<rect x="513.4079999999999" y="522.6" width="1.4" height="4.2" fill="#3c3c3c" />
<rect x="531.34" y="522.6" width="1.6" height="7.5" fill="#3c3c3c" />
<rect x="549.472" y="522.6" width="1.4" height="4.2" fill="#3c3c3c" />
<rect x="567.5039999999999" y="522.6" width="1.4" height="5.5" fill="#3c3c3c" />
<rect x="585.536" y="522.6" width="1.4" height="4.2" fill="#3c3c3c" />
<rect x="603.4680000000001" y="522.6" width="1.6" height="7.5" fill="#3c3c3c" />
<rect x="621.5999999999999" y="522.6" width="1.4" height="4.2" fill="#3c3c3c" />
<rect x="639.632" y="522.6" width="1.4" height="5.5" fill="#3c3c3c" />
<rect x="657.664" y="522.6" width="1.4" height="4.2" fill="#3c3c3c" />
<rect x="675.596" y="522.6" width="1.6" height="7.5" fill="#3c3c3c" />
<rect x="693.728" y="522.6" width="1.4" height="4.2" fill="#3c3c3c" />
<rect x="711.76" y="522.6" width="1.4" height="5.5" fill="#3c3c3c" />
<rect x="729.7919999999999" y="522.6" width="1.4" height="4.2" fill="#3c3c3c" />
<rect x="747.724" y="522.6" width="1.6" height="7.5" fill="#3c3c3c" />
<rect x="765.856" y="522.6" width="1.4" height="4.2" fill="#3c3c3c" />
<rect x="783.8879999999999" y="522.6" width="1.4" height="5.5" fill="#3c3c3c" />
<rect x="801.92" y="522.6" width="1.4" height="4.2" fill="#3c3c3c" />
<rect x="819.8520000000001" y="522.6" width="1.6" height="7.5" fill="#3c3c3c" />
<rect x="837.9839999999999" y="522.6" width="1.4" height="4.2" fill="#3c3c3c" />
<rect x="856.016" y="522.6" width="1.4" height="5.5" fill="#3c3c3c" />
<rect x="874.048" y="522.6" width="1.4" height="4.2" fill="#3c3c3c" />
<rect x="891.98" y="522.6" width="1.6" height="7.5" fill="#3c3c3c" />
<rect x="910.112" y="522.6" width="1.4" height="4.2" fill="#3c3c3c" />
<rect x="928.144" y="522.6" width="1.4" height="5.5" fill="#3c3c3c" />
<rect x="946.1759999999999" y="522.6" width="1.4" height="4.2" fill="#3c3c3c" />
<rect x="964.1080000000001" y="522.6" width="1.6" height="7.5" fill="#3c3c3c" />
<text x="154.30" y="538.50" font-size="8.70" fill="#2a2f9a" stroke="#2a2f9a" stroke-width="0.2" textLength="33.50" lengthAdjust="spacingAndGlyphs">494 мсек.</text>
<text x="243.63" y="538.50" font-size="8.70" fill="#2a2f9a" stroke="#2a2f9a" stroke-width="0.2" text-anchor="middle" textLength="12.80" lengthAdjust="spacingAndGlyphs">544</text>
<text x="315.76" y="538.50" font-size="8.70" fill="#2a2f9a" stroke="#2a2f9a" stroke-width="0.2" text-anchor="middle" textLength="12.80" lengthAdjust="spacingAndGlyphs">594</text>
<text x="387.88" y="538.50" font-size="8.70" fill="#2a2f9a" stroke="#2a2f9a" stroke-width="0.2" text-anchor="middle" textLength="12.80" lengthAdjust="spacingAndGlyphs">644</text>
<text x="460.01" y="538.50" font-size="8.70" fill="#2a2f9a" stroke="#2a2f9a" stroke-width="0.2" text-anchor="middle" textLength="12.80" lengthAdjust="spacingAndGlyphs">694</text>
<text x="532.14" y="538.50" font-size="8.70" fill="#2a2f9a" stroke="#2a2f9a" stroke-width="0.2" text-anchor="middle" textLength="12.80" lengthAdjust="spacingAndGlyphs">744</text>
<text x="604.27" y="538.50" font-size="8.70" fill="#2a2f9a" stroke="#2a2f9a" stroke-width="0.2" text-anchor="middle" textLength="12.80" lengthAdjust="spacingAndGlyphs">794</text>
<text x="676.40" y="538.50" font-size="8.70" fill="#2a2f9a" stroke="#2a2f9a" stroke-width="0.2" text-anchor="middle" textLength="12.80" lengthAdjust="spacingAndGlyphs">844</text>
<text x="748.52" y="538.50" font-size="8.70" fill="#2a2f9a" stroke="#2a2f9a" stroke-width="0.2" text-anchor="middle" textLength="12.80" lengthAdjust="spacingAndGlyphs">894</text>
<text x="820.65" y="538.50" font-size="8.70" fill="#2a2f9a" stroke="#2a2f9a" stroke-width="0.2" text-anchor="middle" textLength="12.80" lengthAdjust="spacingAndGlyphs">944</text>
<text x="892.78" y="538.50" font-size="8.70" fill="#2a2f9a" stroke="#2a2f9a" stroke-width="0.2" text-anchor="middle" textLength="12.80" lengthAdjust="spacingAndGlyphs">994</text>
<text x="974.00" y="538.50" font-size="8.70" fill="#2a2f9a" stroke="#2a2f9a" stroke-width="0.2" text-anchor="end" textLength="19.20" lengthAdjust="spacingAndGlyphs">1 044</text>
<rect x="0" y="545.6" width="974" height="12.2" fill="#efefef" />
<rect x="55.3" y="550.4" width="50.5" height="1.6" fill="#6a6a6a" />
<rect x="0" y="559.6" width="977" height="1.2" fill="#c9d5ec" />
<rect x="0" y="564.6" width="977" height="13.3" fill="#b5bed6" />
<text x="-3.50" y="575.40" font-size="8.70" fill="#243a8e" stroke="#243a8e" stroke-width="0.2" textLength="100.00" lengthAdjust="spacingAndGlyphs">Спектральная диаграмма</text>
<path d="M957,568 L960,568 L960,571.5 L961,571.5 L961,572.3 L956,572.3 L956,571.5 L957,571.5 Z M958.5,572.3 L958.5,574.5" fill="none" stroke="#1a2060" stroke-width="1.1"/>
<path d="M967.3,568.2 L973.3,574.2 M973.3,568.2 L967.3,574.2" stroke="#1a2060" stroke-width="1.4"/>
<line x1="0" y1="698.7" x2="973" y2="698.7" stroke="#8a8a8a" stroke-width="1" />
<line x1="2.0" y1="595.7" x2="2.0" y2="721.5" stroke="#8a8a8a" stroke-width="1" />
<rect x="14.60" y="646.73" width="6.8" height="51.97" fill="#86e4f2" stroke="#2bb5c9" stroke-width="1"/>
<text x="18.00" y="641.73" font-size="8.55" fill="#222" stroke="#222" stroke-width="0.2" text-anchor="middle" textLength="15.30" lengthAdjust="spacingAndGlyphs">50.7</text>
<text x="18.00" y="707.40" font-size="8.55" fill="#222" stroke="#222" stroke-width="0.2" text-anchor="middle" textLength="4.10" lengthAdjust="spacingAndGlyphs">0</text>
<rect x="42.70" y="596.20" width="6.8" height="102.50" fill="#86e4f2" stroke="#2bb5c9" stroke-width="1"/>
<text x="46.10" y="591.20" font-size="8.55" fill="#222" stroke="#222" stroke-width="0.2" text-anchor="middle" textLength="12.30" lengthAdjust="spacingAndGlyphs">100</text>
<text x="46.10" y="707.40" font-size="8.55" fill="#222" stroke="#222" stroke-width="0.2" text-anchor="middle" textLength="8.20" lengthAdjust="spacingAndGlyphs">50</text>
<rect x="70.80" y="694.91" width="6.8" height="3.79" fill="#86e4f2" stroke="#2bb5c9" stroke-width="1"/>
<text x="74.20" y="689.91" font-size="8.55" fill="#222" stroke="#222" stroke-width="0.2" text-anchor="middle" textLength="11.20" lengthAdjust="spacingAndGlyphs">3.7</text>
<text x="74.20" y="707.40" font-size="8.55" fill="#222" stroke="#222" stroke-width="0.2" text-anchor="middle" textLength="12.30" lengthAdjust="spacingAndGlyphs">100</text>
<rect x="98.90" y="693.78" width="6.8" height="4.92" fill="#86e4f2" stroke="#2bb5c9" stroke-width="1"/>
<text x="102.30" y="688.78" font-size="8.55" fill="#222" stroke="#222" stroke-width="0.2" text-anchor="middle" textLength="11.20" lengthAdjust="spacingAndGlyphs">4.8</text>
<text x="102.30" y="707.40" font-size="8.55" fill="#222" stroke="#222" stroke-width="0.2" text-anchor="middle" textLength="12.30" lengthAdjust="spacingAndGlyphs">150</text>
<rect x="127.00" y="695.32" width="6.8" height="3.38" fill="#86e4f2" stroke="#2bb5c9" stroke-width="1"/>
<text x="130.40" y="690.32" font-size="8.55" fill="#222" stroke="#222" stroke-width="0.2" text-anchor="middle" textLength="11.20" lengthAdjust="spacingAndGlyphs">3.3</text>
<text x="130.40" y="707.40" font-size="8.55" fill="#222" stroke="#222" stroke-width="0.2" text-anchor="middle" textLength="12.30" lengthAdjust="spacingAndGlyphs">200</text>
<rect x="155.10" y="696.14" width="6.8" height="2.56" fill="#86e4f2" stroke="#2bb5c9" stroke-width="1"/>
<text x="158.50" y="691.14" font-size="8.55" fill="#222" stroke="#222" stroke-width="0.2" text-anchor="middle" textLength="11.20" lengthAdjust="spacingAndGlyphs">2.5</text>
<text x="158.50" y="707.40" font-size="8.55" fill="#222" stroke="#222" stroke-width="0.2" text-anchor="middle" textLength="12.30" lengthAdjust="spacingAndGlyphs">250</text>
<rect x="183.20" y="696.65" width="6.8" height="2.05" fill="#86e4f2" stroke="#2bb5c9" stroke-width="1"/>
<text x="186.60" y="691.65" font-size="8.55" fill="#222" stroke="#222" stroke-width="0.2" text-anchor="middle" textLength="11.20" lengthAdjust="spacingAndGlyphs">2.0</text>
<text x="186.60" y="707.40" font-size="8.55" fill="#222" stroke="#222" stroke-width="0.2" text-anchor="middle" textLength="12.30" lengthAdjust="spacingAndGlyphs">300</text>
<rect x="211.30" y="696.65" width="6.8" height="2.05" fill="#86e4f2" stroke="#2bb5c9" stroke-width="1"/>
<text x="214.70" y="691.65" font-size="8.55" fill="#222" stroke="#222" stroke-width="0.2" text-anchor="middle" textLength="11.20" lengthAdjust="spacingAndGlyphs">2.0</text>
<text x="214.70" y="707.40" font-size="8.55" fill="#222" stroke="#222" stroke-width="0.2" text-anchor="middle" textLength="12.30" lengthAdjust="spacingAndGlyphs">350</text>
<rect x="239.40" y="697.06" width="6.8" height="1.64" fill="#86e4f2" stroke="#2bb5c9" stroke-width="1"/>
<text x="242.80" y="692.06" font-size="8.55" fill="#222" stroke="#222" stroke-width="0.2" text-anchor="middle" textLength="11.20" lengthAdjust="spacingAndGlyphs">1.6</text>
<text x="242.80" y="707.40" font-size="8.55" fill="#222" stroke="#222" stroke-width="0.2" text-anchor="middle" textLength="12.30" lengthAdjust="spacingAndGlyphs">400</text>
<rect x="267.50" y="697.16" width="6.8" height="1.54" fill="#86e4f2" stroke="#2bb5c9" stroke-width="1"/>
<text x="270.90" y="692.16" font-size="8.55" fill="#222" stroke="#222" stroke-width="0.2" text-anchor="middle" textLength="11.20" lengthAdjust="spacingAndGlyphs">1.5</text>
<text x="270.90" y="707.40" font-size="8.55" fill="#222" stroke="#222" stroke-width="0.2" text-anchor="middle" textLength="12.30" lengthAdjust="spacingAndGlyphs">450</text>
<rect x="295.60" y="697.27" width="6.8" height="1.43" fill="#86e4f2" stroke="#2bb5c9" stroke-width="1"/>
<text x="299.00" y="692.27" font-size="8.55" fill="#222" stroke="#222" stroke-width="0.2" text-anchor="middle" textLength="11.20" lengthAdjust="spacingAndGlyphs">1.4</text>
<text x="299.00" y="707.40" font-size="8.55" fill="#222" stroke="#222" stroke-width="0.2" text-anchor="middle" textLength="12.30" lengthAdjust="spacingAndGlyphs">500</text>
<rect x="155.5" y="714.5" width="6.5" height="6.5" fill="#86e4f2" stroke="#2bb5c9" stroke-width="1"/>
<text x="165.30" y="721.00" font-size="8.55" fill="#222" stroke="#222" stroke-width="0.2" textLength="20.00" lengthAdjust="spacingAndGlyphs">Ia, %</text>
<line x1="326.2" y1="595.7" x2="326.2" y2="721.5" stroke="#8a8a8a" stroke-width="1" />
<rect x="338.80" y="683.33" width="6.8" height="15.37" fill="#bb6d8f" stroke="#a3204f" stroke-width="1"/>
<text x="342.20" y="678.33" font-size="8.55" fill="#222" stroke="#222" stroke-width="0.2" text-anchor="middle" textLength="15.30" lengthAdjust="spacingAndGlyphs">15.0</text>
<text x="342.20" y="707.40" font-size="8.55" fill="#222" stroke="#222" stroke-width="0.2" text-anchor="middle" textLength="4.10" lengthAdjust="spacingAndGlyphs">0</text>
<rect x="366.90" y="596.20" width="6.8" height="102.50" fill="#bb6d8f" stroke="#a3204f" stroke-width="1"/>
<text x="370.30" y="591.20" font-size="8.55" fill="#222" stroke="#222" stroke-width="0.2" text-anchor="middle" textLength="12.30" lengthAdjust="spacingAndGlyphs">100</text>
<text x="370.30" y="707.40" font-size="8.55" fill="#222" stroke="#222" stroke-width="0.2" text-anchor="middle" textLength="8.20" lengthAdjust="spacingAndGlyphs">50</text>
<rect x="395.00" y="696.55" width="6.8" height="2.15" fill="#bb6d8f" stroke="#a3204f" stroke-width="1"/>
<text x="398.40" y="691.55" font-size="8.55" fill="#222" stroke="#222" stroke-width="0.2" text-anchor="middle" textLength="11.20" lengthAdjust="spacingAndGlyphs">2.1</text>
<text x="398.40" y="707.40" font-size="8.55" fill="#222" stroke="#222" stroke-width="0.2" text-anchor="middle" textLength="12.30" lengthAdjust="spacingAndGlyphs">100</text>
<rect x="423.10" y="698.09" width="6.8" height="0.61" fill="#bb6d8f" stroke="#a3204f" stroke-width="1"/>
<text x="426.50" y="693.09" font-size="8.55" fill="#222" stroke="#222" stroke-width="0.2" text-anchor="middle" textLength="11.20" lengthAdjust="spacingAndGlyphs">0.6</text>
<text x="426.50" y="707.40" font-size="8.55" fill="#222" stroke="#222" stroke-width="0.2" text-anchor="middle" textLength="12.30" lengthAdjust="spacingAndGlyphs">150</text>
<text x="454.60" y="693.39" font-size="8.55" fill="#222" stroke="#222" stroke-width="0.2" text-anchor="middle" textLength="11.20" lengthAdjust="spacingAndGlyphs">0.3</text>
<text x="454.60" y="707.40" font-size="8.55" fill="#222" stroke="#222" stroke-width="0.2" text-anchor="middle" textLength="12.30" lengthAdjust="spacingAndGlyphs">200</text>
<text x="482.70" y="693.60" font-size="8.55" fill="#222" stroke="#222" stroke-width="0.2" text-anchor="middle" textLength="11.20" lengthAdjust="spacingAndGlyphs">0.1</text>
<text x="482.70" y="707.40" font-size="8.55" fill="#222" stroke="#222" stroke-width="0.2" text-anchor="middle" textLength="12.30" lengthAdjust="spacingAndGlyphs">250</text>
<text x="510.80" y="693.50" font-size="8.55" fill="#222" stroke="#222" stroke-width="0.2" text-anchor="middle" textLength="11.20" lengthAdjust="spacingAndGlyphs">0.2</text>
<text x="510.80" y="707.40" font-size="8.55" fill="#222" stroke="#222" stroke-width="0.2" text-anchor="middle" textLength="12.30" lengthAdjust="spacingAndGlyphs">300</text>
<text x="538.90" y="693.39" font-size="8.55" fill="#222" stroke="#222" stroke-width="0.2" text-anchor="middle" textLength="11.20" lengthAdjust="spacingAndGlyphs">0.3</text>
<text x="538.90" y="707.40" font-size="8.55" fill="#222" stroke="#222" stroke-width="0.2" text-anchor="middle" textLength="12.30" lengthAdjust="spacingAndGlyphs">350</text>
<text x="567.00" y="693.60" font-size="8.55" fill="#222" stroke="#222" stroke-width="0.2" text-anchor="middle" textLength="11.20" lengthAdjust="spacingAndGlyphs">0.1</text>
<text x="567.00" y="707.40" font-size="8.55" fill="#222" stroke="#222" stroke-width="0.2" text-anchor="middle" textLength="12.30" lengthAdjust="spacingAndGlyphs">400</text>
<text x="595.10" y="693.39" font-size="8.55" fill="#222" stroke="#222" stroke-width="0.2" text-anchor="middle" textLength="11.20" lengthAdjust="spacingAndGlyphs">0.3</text>
<text x="595.10" y="707.40" font-size="8.55" fill="#222" stroke="#222" stroke-width="0.2" text-anchor="middle" textLength="12.30" lengthAdjust="spacingAndGlyphs">450</text>
<text x="623.20" y="693.60" font-size="8.55" fill="#222" stroke="#222" stroke-width="0.2" text-anchor="middle" textLength="11.20" lengthAdjust="spacingAndGlyphs">0.1</text>
<text x="623.20" y="707.40" font-size="8.55" fill="#222" stroke="#222" stroke-width="0.2" text-anchor="middle" textLength="12.30" lengthAdjust="spacingAndGlyphs">500</text>
<rect x="479.7" y="714.5" width="6.5" height="6.5" fill="#bb6d8f" stroke="#a3204f" stroke-width="1"/>
<text x="489.50" y="721.00" font-size="8.55" fill="#222" stroke="#222" stroke-width="0.2" textLength="20.00" lengthAdjust="spacingAndGlyphs">Ib, %</text>
<line x1="650.4" y1="595.7" x2="650.4" y2="721.5" stroke="#8a8a8a" stroke-width="1" />
<rect x="663.00" y="658.21" width="6.8" height="40.49" fill="#f5a6f5" stroke="#e04ae0" stroke-width="1"/>
<text x="666.40" y="653.21" font-size="8.55" fill="#222" stroke="#222" stroke-width="0.2" text-anchor="middle" textLength="15.30" lengthAdjust="spacingAndGlyphs">39.5</text>
<text x="666.40" y="707.40" font-size="8.55" fill="#222" stroke="#222" stroke-width="0.2" text-anchor="middle" textLength="4.10" lengthAdjust="spacingAndGlyphs">0</text>
<rect x="691.10" y="596.20" width="6.8" height="102.50" fill="#f5a6f5" stroke="#e04ae0" stroke-width="1"/>
<text x="694.50" y="591.20" font-size="8.55" fill="#222" stroke="#222" stroke-width="0.2" text-anchor="middle" textLength="12.30" lengthAdjust="spacingAndGlyphs">100</text>
<text x="694.50" y="707.40" font-size="8.55" fill="#222" stroke="#222" stroke-width="0.2" text-anchor="middle" textLength="8.20" lengthAdjust="spacingAndGlyphs">50</text>
<rect x="719.20" y="695.32" width="6.8" height="3.38" fill="#f5a6f5" stroke="#e04ae0" stroke-width="1"/>
<text x="722.60" y="690.32" font-size="8.55" fill="#222" stroke="#222" stroke-width="0.2" text-anchor="middle" textLength="11.20" lengthAdjust="spacingAndGlyphs">3.3</text>
<text x="722.60" y="707.40" font-size="8.55" fill="#222" stroke="#222" stroke-width="0.2" text-anchor="middle" textLength="12.30" lengthAdjust="spacingAndGlyphs">100</text>
<rect x="747.30" y="696.55" width="6.8" height="2.15" fill="#f5a6f5" stroke="#e04ae0" stroke-width="1"/>
<text x="750.70" y="691.55" font-size="8.55" fill="#222" stroke="#222" stroke-width="0.2" text-anchor="middle" textLength="11.20" lengthAdjust="spacingAndGlyphs">2.1</text>
<text x="750.70" y="707.40" font-size="8.55" fill="#222" stroke="#222" stroke-width="0.2" text-anchor="middle" textLength="12.30" lengthAdjust="spacingAndGlyphs">150</text>
<rect x="775.40" y="697.27" width="6.8" height="1.43" fill="#f5a6f5" stroke="#e04ae0" stroke-width="1"/>
<text x="778.80" y="692.27" font-size="8.55" fill="#222" stroke="#222" stroke-width="0.2" text-anchor="middle" textLength="11.20" lengthAdjust="spacingAndGlyphs">1.4</text>
<text x="778.80" y="707.40" font-size="8.55" fill="#222" stroke="#222" stroke-width="0.2" text-anchor="middle" textLength="12.30" lengthAdjust="spacingAndGlyphs">200</text>
<rect x="803.50" y="697.47" width="6.8" height="1.23" fill="#f5a6f5" stroke="#e04ae0" stroke-width="1"/>
<text x="806.90" y="692.47" font-size="8.55" fill="#222" stroke="#222" stroke-width="0.2" text-anchor="middle" textLength="11.20" lengthAdjust="spacingAndGlyphs">1.2</text>
<text x="806.90" y="707.40" font-size="8.55" fill="#222" stroke="#222" stroke-width="0.2" text-anchor="middle" textLength="12.30" lengthAdjust="spacingAndGlyphs">250</text>
<rect x="831.60" y="697.88" width="6.8" height="0.82" fill="#f5a6f5" stroke="#e04ae0" stroke-width="1"/>
<text x="835.00" y="692.88" font-size="8.55" fill="#222" stroke="#222" stroke-width="0.2" text-anchor="middle" textLength="11.20" lengthAdjust="spacingAndGlyphs">0.8</text>
<text x="835.00" y="707.40" font-size="8.55" fill="#222" stroke="#222" stroke-width="0.2" text-anchor="middle" textLength="12.30" lengthAdjust="spacingAndGlyphs">300</text>
<rect x="859.70" y="697.88" width="6.8" height="0.82" fill="#f5a6f5" stroke="#e04ae0" stroke-width="1"/>
<text x="863.10" y="692.88" font-size="8.55" fill="#222" stroke="#222" stroke-width="0.2" text-anchor="middle" textLength="11.20" lengthAdjust="spacingAndGlyphs">0.8</text>
<text x="863.10" y="707.40" font-size="8.55" fill="#222" stroke="#222" stroke-width="0.2" text-anchor="middle" textLength="12.30" lengthAdjust="spacingAndGlyphs">350</text>
<rect x="887.80" y="697.98" width="6.8" height="0.72" fill="#f5a6f5" stroke="#e04ae0" stroke-width="1"/>
<text x="891.20" y="692.98" font-size="8.55" fill="#222" stroke="#222" stroke-width="0.2" text-anchor="middle" textLength="11.20" lengthAdjust="spacingAndGlyphs">0.7</text>
<text x="891.20" y="707.40" font-size="8.55" fill="#222" stroke="#222" stroke-width="0.2" text-anchor="middle" textLength="12.30" lengthAdjust="spacingAndGlyphs">400</text>
<text x="919.30" y="693.19" font-size="8.55" fill="#222" stroke="#222" stroke-width="0.2" text-anchor="middle" textLength="11.20" lengthAdjust="spacingAndGlyphs">0.5</text>
<text x="919.30" y="707.40" font-size="8.55" fill="#222" stroke="#222" stroke-width="0.2" text-anchor="middle" textLength="12.30" lengthAdjust="spacingAndGlyphs">450</text>
<rect x="944.00" y="698.09" width="6.8" height="0.61" fill="#f5a6f5" stroke="#e04ae0" stroke-width="1"/>
<text x="947.40" y="693.09" font-size="8.55" fill="#222" stroke="#222" stroke-width="0.2" text-anchor="middle" textLength="11.20" lengthAdjust="spacingAndGlyphs">0.6</text>
<text x="947.40" y="707.40" font-size="8.55" fill="#222" stroke="#222" stroke-width="0.2" text-anchor="middle" textLength="12.30" lengthAdjust="spacingAndGlyphs">500</text>
<rect x="803.9" y="714.5" width="6.5" height="6.5" fill="#f5a6f5" stroke="#e04ae0" stroke-width="1"/>
<text x="813.70" y="721.00" font-size="8.55" fill="#222" stroke="#222" stroke-width="0.2" textLength="20.00" lengthAdjust="spacingAndGlyphs">Ic, %</text>
<line x1="974.5" y1="595.7" x2="974.5" y2="721.5" stroke="#ffffff" stroke-width="0" />
<rect x="981.4" y="100.9" width="392.6" height="12.9" fill="#b5bed6" />
<text x="983.70" y="110.60" font-size="8.70" fill="#243a8e" stroke="#243a8e" stroke-width="0.2" textLength="84.20" lengthAdjust="spacingAndGlyphs">Векторная диаграмма</text>
<path d="M1358.3,104 L1361.3,104 L1361.3,107.5 L1362.3,107.5 L1362.3,108.3 L1357.3,108.3 L1357.3,107.5 L1358.3,107.5 Z M1359.8,108.3 L1359.8,110.5" fill="none" stroke="#1a2060" stroke-width="1.1"/>
<path d="M1368.5,104.3 L1374.0,109.8 M1374.0,104.3 L1368.5,109.8" stroke="#1a2060" stroke-width="1.4"/>
<rect x="1304.5" y="121.7" width="67.2" height="26.8" fill="#fffade" stroke="#a9a9a9" stroke-width="1"/>
<line x1="1304.5" y1="135.2" x2="1371.7" y2="135.2" stroke="#a9a9a9" stroke-width="1" />
<line x1="1334.6" y1="121.7" x2="1334.6" y2="148.5" stroke="#a9a9a9" stroke-width="1" />
<text x="1307.50" y="131.30" font-size="8.84" fill="#222" stroke="#222" stroke-width="0.2" textLength="22.50" lengthAdjust="spacingAndGlyphs">U max</text>
<text x="1338.50" y="131.30" font-size="8.84" fill="#222" stroke="#222" stroke-width="0.2" textLength="21.80" lengthAdjust="spacingAndGlyphs">70.0 В</text>
<text x="1307.50" y="145.00" font-size="8.84" fill="#222" stroke="#222" stroke-width="0.2" textLength="20.00" lengthAdjust="spacingAndGlyphs">I max</text>
<text x="1338.50" y="145.00" font-size="8.84" fill="#222" stroke="#222" stroke-width="0.2" textLength="21.80" lengthAdjust="spacingAndGlyphs">20.0 A</text>
<circle cx="1179.9" cy="395.0" r="39.04" fill="none" stroke="#c4c4c4" stroke-width="1" stroke-dasharray="2.8,2.4"/>
<circle cx="1179.9" cy="395.0" r="78.08" fill="none" stroke="#c4c4c4" stroke-width="1" stroke-dasharray="2.8,2.4"/>
<circle cx="1179.9" cy="395.0" r="117.12" fill="none" stroke="#c4c4c4" stroke-width="1" stroke-dasharray="2.8,2.4"/>
<circle cx="1179.9" cy="395.0" r="156.16" fill="none" stroke="#c4c4c4" stroke-width="1" stroke-dasharray="2.8,2.4"/>
<line x1="1179.9" y1="395.0" x2="1179.90" y2="199.80" stroke="#c4c4c4" stroke-width="1" stroke-dasharray="2.8,2.4"/>
<line x1="1179.9" y1="395.0" x2="1277.50" y2="225.95" stroke="#c4c4c4" stroke-width="1" stroke-dasharray="2.8,2.4"/>
<line x1="1179.9" y1="395.0" x2="1348.95" y2="297.40" stroke="#c4c4c4" stroke-width="1" stroke-dasharray="2.8,2.4"/>
<line x1="1179.9" y1="395.0" x2="1375.10" y2="395.00" stroke="#c4c4c4" stroke-width="1" stroke-dasharray="2.8,2.4"/>
<line x1="1179.9" y1="395.0" x2="1348.95" y2="492.60" stroke="#c4c4c4" stroke-width="1" stroke-dasharray="2.8,2.4"/>
<line x1="1179.9" y1="395.0" x2="1277.50" y2="564.05" stroke="#c4c4c4" stroke-width="1" stroke-dasharray="2.8,2.4"/>
<line x1="1179.9" y1="395.0" x2="1179.90" y2="590.20" stroke="#c4c4c4" stroke-width="1" stroke-dasharray="2.8,2.4"/>
<line x1="1179.9" y1="395.0" x2="1082.30" y2="564.05" stroke="#c4c4c4" stroke-width="1" stroke-dasharray="2.8,2.4"/>
<line x1="1179.9" y1="395.0" x2="1010.85" y2="492.60" stroke="#c4c4c4" stroke-width="1" stroke-dasharray="2.8,2.4"/>
<line x1="1179.9" y1="395.0" x2="984.70" y2="395.00" stroke="#c4c4c4" stroke-width="1" stroke-dasharray="2.8,2.4"/>
<line x1="1179.9" y1="395.0" x2="1010.85" y2="297.40" stroke="#c4c4c4" stroke-width="1" stroke-dasharray="2.8,2.4"/>
<line x1="1179.9" y1="395.0" x2="1082.30" y2="225.95" stroke="#c4c4c4" stroke-width="1" stroke-dasharray="2.8,2.4"/>
<circle cx="1179.9" cy="395.0" r="195.2" fill="none" stroke="#a6a6a6" stroke-width="1"/>
<text x="989.10" y="394.30" font-size="8.55" fill="#333" stroke="#333" stroke-width="0.2" textLength="13.30" lengthAdjust="spacingAndGlyphs">90°</text>
<text x="1357.10" y="394.30" font-size="8.55" fill="#333" stroke="#333" stroke-width="0.2" textLength="17.50" lengthAdjust="spacingAndGlyphs">-90°</text>
<text x="1179.80" y="588.30" font-size="8.55" fill="#333" stroke="#333" stroke-width="0.2" textLength="17.00" lengthAdjust="spacingAndGlyphs">180°</text>
<text x="1180.50" y="210.00" font-size="8.55" fill="#333" stroke="#333" stroke-width="0.2" textLength="9.50" lengthAdjust="spacingAndGlyphs">0°</text>
<line x1="1179.9" y1="395.0" x2="1157.42" y2="235.07" stroke="#e64ef0" stroke-width="1.4" stroke-dasharray="2,2"/>
<path d="M1155.82,223.68 L1160.00,234.71 L1157.15,233.09 L1154.85,235.43 Z" fill="#f3b8f6" stroke="#e64ef0" stroke-width="1"/>
<text x="1155.00" y="222.00" font-size="8.55" fill="#333" stroke="#333" stroke-width="0.2" textLength="7.30" lengthAdjust="spacingAndGlyphs">Ic</text>
<line x1="1179.9" y1="395.0" x2="1179.90" y2="222.80" stroke="#efb232" stroke-width="1.3"/>
<path d="M1179.90,211.30 L1182.50,222.80 L1179.90,220.80 L1177.30,222.80 Z" fill="#f4c24a" stroke="#efb232" stroke-width="1"/>
<text x="1179.00" y="211.50" font-size="8.55" fill="#333" stroke="#333" stroke-width="0.2" textLength="13.50" lengthAdjust="spacingAndGlyphs">Uab</text>
<line x1="1179.9" y1="395.0" x2="1316.67" y2="447.50" stroke="#28b4c8" stroke-width="1.3" stroke-dasharray="2.2,2"/>
<path d="M1327.41,451.62 L1315.74,449.93 L1318.54,448.22 L1317.60,445.07 Z" fill="#bff0f6" stroke="#28b4c8" stroke-width="1"/>
<text x="1325.70" y="463.80" font-size="8.55" fill="#333" stroke="#333" stroke-width="0.2" textLength="8.00" lengthAdjust="spacingAndGlyphs">Ia</text>
<line x1="1179.9" y1="395.0" x2="1327.33" y2="483.59" stroke="#d8469c" stroke-width="1.2"/>
<path d="M1337.19,489.51 L1325.99,485.82 L1329.05,484.62 L1328.67,481.36 Z" fill="#ee9ccd" stroke="#d8469c" stroke-width="1"/>
<text x="1335.00" y="501.00" font-size="8.55" fill="#333" stroke="#333" stroke-width="0.2" textLength="14.00" lengthAdjust="spacingAndGlyphs">Ubc</text>
<line x1="1179.9" y1="395.0" x2="1059.63" y2="495.92" stroke="#c83c68" stroke-width="1.1" stroke-dasharray="3,2"/>
<path d="M1050.82,503.31 L1057.96,493.93 L1058.10,497.20 L1061.30,497.91 Z" fill="#b6406a" stroke="#c83c68" stroke-width="1"/>
<text x="1050.00" y="514.80" font-size="8.55" fill="#333" stroke="#333" stroke-width="0.2" textLength="8.00" lengthAdjust="spacingAndGlyphs">Ib</text>
<rect x="1101.3" y="649.4" width="158.0" height="68.90" fill="#fff" stroke="#a9a9a9" stroke-width="1"/>
<line x1="1101.3" y1="663.18" x2="1259.3" y2="663.18" stroke="#a9a9a9" stroke-width="1" />
<line x1="1101.3" y1="676.96" x2="1259.3" y2="676.96" stroke="#a9a9a9" stroke-width="1" />
<line x1="1101.3" y1="690.74" x2="1259.3" y2="690.74" stroke="#a9a9a9" stroke-width="1" />
<line x1="1101.3" y1="704.52" x2="1259.3" y2="704.52" stroke="#a9a9a9" stroke-width="1" />
<line x1="1143.3" y1="649.4" x2="1143.3" y2="718.3" stroke="#a9a9a9" stroke-width="1" />
<line x1="1201.4" y1="649.4" x2="1201.4" y2="718.3" stroke="#a9a9a9" stroke-width="1" />
<rect x="1104.5" y="652.20" width="7.8" height="7.8" fill="#a7eef7" stroke="#33b7c9" stroke-width="1"/>
<text x="1114.30" y="659.60" font-size="8.70" fill="#333" stroke="#333" stroke-width="0.2" textLength="7.00" lengthAdjust="spacingAndGlyphs">Ia</text>
<text x="1169.50" y="659.60" font-size="8.70" fill="#333" stroke="#333" stroke-width="0.2" text-anchor="middle" textLength="19.60" lengthAdjust="spacingAndGlyphs">-111°</text>
<text x="1205.30" y="659.60" font-size="8.70" fill="#333" stroke="#333" stroke-width="0.2" textLength="26.80" lengthAdjust="spacingAndGlyphs">16.20 A</text>
<rect x="1104.5" y="665.98" width="7.8" height="7.8" fill="#c1738f" stroke="#a3204f" stroke-width="1"/>
<text x="1114.30" y="673.38" font-size="8.70" fill="#333" stroke="#333" stroke-width="0.2" textLength="7.20" lengthAdjust="spacingAndGlyphs">Ib</text>
<text x="1169.50" y="673.38" font-size="8.70" fill="#333" stroke="#333" stroke-width="0.2" text-anchor="middle" textLength="15.20" lengthAdjust="spacingAndGlyphs">130°</text>
<text x="1205.30" y="673.38" font-size="8.70" fill="#333" stroke="#333" stroke-width="0.2" textLength="26.80" lengthAdjust="spacingAndGlyphs">17.32 A</text>
<rect x="1104.5" y="679.76" width="7.8" height="7.8" fill="#f7b4f7" stroke="#e04ae0" stroke-width="1"/>
<text x="1114.30" y="687.16" font-size="8.70" fill="#333" stroke="#333" stroke-width="0.2" textLength="6.70" lengthAdjust="spacingAndGlyphs">Ic</text>
<text x="1169.50" y="687.16" font-size="8.70" fill="#333" stroke="#333" stroke-width="0.2" text-anchor="middle" textLength="6.40" lengthAdjust="spacingAndGlyphs">8°</text>
<text x="1205.30" y="687.16" font-size="8.70" fill="#333" stroke="#333" stroke-width="0.2" textLength="26.80" lengthAdjust="spacingAndGlyphs">17.76 A</text>
<rect x="1104.5" y="693.54" width="7.8" height="7.8" fill="#ffd15e" stroke="#e8a923" stroke-width="1"/>
<text x="1114.30" y="700.94" font-size="8.70" fill="#333" stroke="#333" stroke-width="0.2" textLength="14.00" lengthAdjust="spacingAndGlyphs">Uab</text>
<text x="1169.50" y="700.94" font-size="8.70" fill="#333" stroke="#333" stroke-width="0.2" text-anchor="middle" textLength="10.80" lengthAdjust="spacingAndGlyphs">-0°</text>
<text x="1205.30" y="700.94" font-size="8.70" fill="#333" stroke="#333" stroke-width="0.2" textLength="26.80" lengthAdjust="spacingAndGlyphs">65.66 В</text>
<rect x="1104.5" y="707.32" width="7.8" height="7.8" fill="#f27cb8" stroke="#d62b87" stroke-width="1"/>
<text x="1114.30" y="714.72" font-size="8.70" fill="#333" stroke="#333" stroke-width="0.2" textLength="13.40" lengthAdjust="spacingAndGlyphs">Ubc</text>
<text x="1169.50" y="714.72" font-size="8.70" fill="#333" stroke="#333" stroke-width="0.2" text-anchor="middle" textLength="19.60" lengthAdjust="spacingAndGlyphs">-121°</text>
<text x="1205.30" y="714.72" font-size="8.70" fill="#333" stroke="#333" stroke-width="0.2" textLength="26.80" lengthAdjust="spacingAndGlyphs">65.88 В</text>
<rect x="0" y="726.5" width="1374" height="17.5" fill="#b5bed6" />
<rect x="0" y="726.0" width="1374" height="1.8" fill="#8a95b6" />
<text x="1.00" y="738.50" font-size="8.99" fill="#1e2870" stroke="#1e2870" stroke-width="0.2" textLength="53.50" lengthAdjust="spacingAndGlyphs">T1: 636.000 мс</text>
<text x="111.30" y="738.50" font-size="8.70" fill="#1e2870" stroke="#1e2870" stroke-width="0.2" textLength="11.50" lengthAdjust="spacingAndGlyphs">T2:</text>
<text x="222.30" y="738.50" font-size="8.70" fill="#1e2870" stroke="#1e2870" stroke-width="0.2" textLength="11.50" lengthAdjust="spacingAndGlyphs">ΔT:</text>
<text x="379.80" y="738.50" font-size="8.70" fill="#1e2870" stroke="#1e2870" stroke-width="0.2" textLength="11.50" lengthAdjust="spacingAndGlyphs">H1:</text>
<text x="490.00" y="738.50" font-size="8.70" fill="#1e2870" stroke="#1e2870" stroke-width="0.2" textLength="11.80" lengthAdjust="spacingAndGlyphs">H2:</text>
<text x="600.00" y="738.50" font-size="8.70" fill="#1e2870" stroke="#1e2870" stroke-width="0.2" textLength="12.00" lengthAdjust="spacingAndGlyphs">ΔH:</text>
<rect x="1183" y="728" width="1.8" height="16" fill="#7a86a8" />
<text x="1196.50" y="738.50" font-size="8.70" fill="#1e2870" stroke="#1e2870" stroke-width="0.2" textLength="178.00" lengthAdjust="spacingAndGlyphs">ООО НПП "Микропроцессорные технологии"</text>
<path d="M0,725.5 L2.8,725.5 Q5,741 27,744.5 L0,744.5 Z" fill="#fff"/>
<path d="M1374.5,725.5 L1371,725.5 Q1368,741 1351,744.5 L1374.5,744.5 Z" fill="#fff"/></svg></body></html>
